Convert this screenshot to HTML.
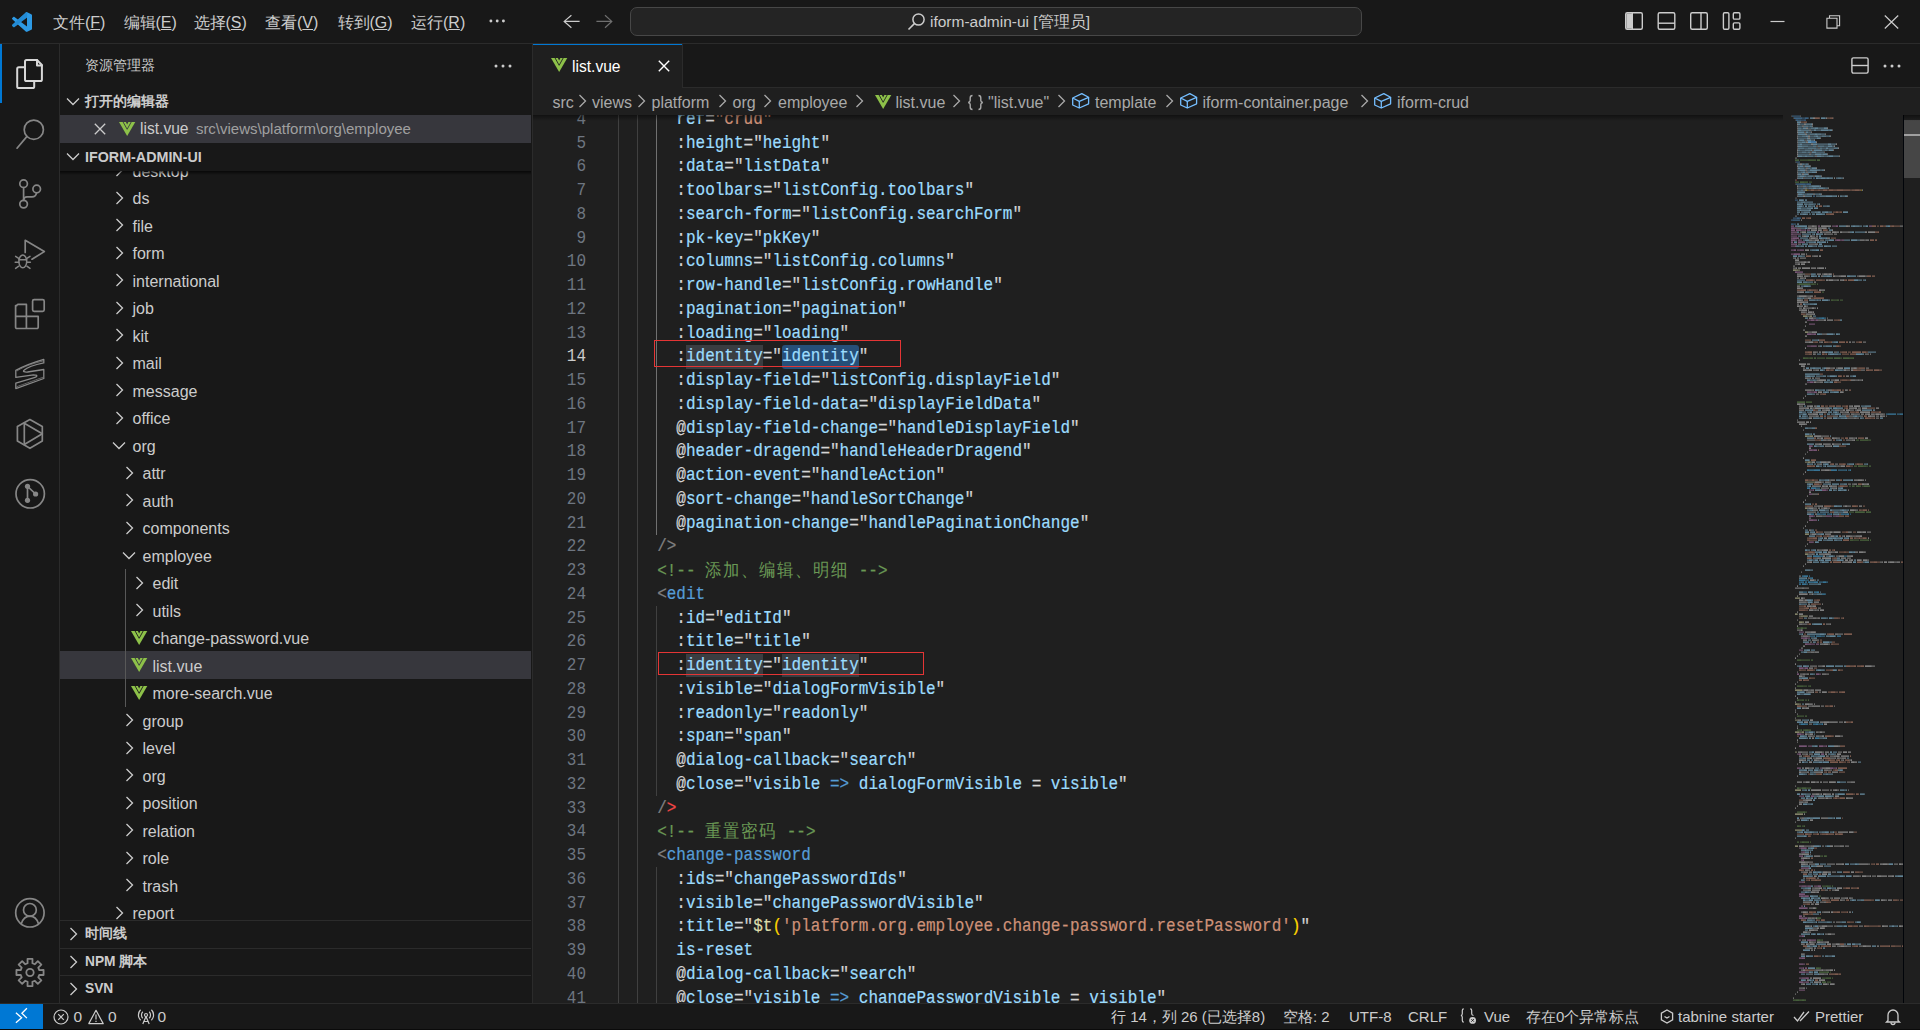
<!DOCTYPE html>
<html><head><meta charset="utf-8">
<style>
*{box-sizing:border-box;margin:0;padding:0}
html,body{width:1920px;height:1030px;overflow:hidden;background:#181818;font-family:"Liberation Sans",sans-serif;color:#cccccc}
.abs{position:absolute}
svg{display:block;overflow:visible}
#title{left:0;top:0;width:1920px;height:44px;background:#181818;border-bottom:1px solid #2b2b2b}
.menu{position:absolute;top:1px;height:43px;line-height:43px;font-size:16px;color:#cccccc;white-space:nowrap}
#cc{left:630px;top:7px;width:732px;height:29px;border:1px solid #474747;border-radius:7px;background:#242424}
#act{left:0;top:44px;width:60px;height:959px;background:#181818;border-right:1px solid #2b2b2b}
#side{left:60px;top:44px;width:473px;height:959px;background:#181818;border-right:1px solid #2b2b2b}
#editor{left:533px;top:44px;width:1387px;height:959px;background:#1f1f1f}
#tabs{left:533px;top:44px;width:1387px;height:44px;background:#181818;border-bottom:1px solid #2b2b2b}
#status{left:0;top:1003px;width:1920px;height:27px;background:#181818;border-top:1px solid #2b2b2b;font-size:16px;color:#cccccc}
.row{position:absolute;left:0;width:471px;height:27.5px;line-height:27.5px;font-size:16px;color:#cccccc;white-space:nowrap}
.chev{position:absolute;top:0}
.code{position:absolute;left:0;font-family:"Liberation Mono",monospace;font-size:16px;white-space:pre;height:23.75px;line-height:23.75px;color:#d4d4d4;margin-top:1.5px;transform:scaleY(1.1);transform-origin:0 16px;-webkit-text-stroke:0.2px}
.ln{position:absolute;left:532px;width:54px;text-align:right;font-family:"Liberation Mono",monospace;font-size:16px;height:23.75px;line-height:23.75px;color:#6e7681;margin-top:1.5px;transform:scaleY(1.1);transform-origin:0 16px}
.g{color:#808080}.t{color:#569cd6}.a{color:#9cdcfe}.s{color:#ce9178}.c{color:#6a9955}.f{color:#dcdcaa}.y{color:#ffd700}.r{color:#f44747}.w{color:#d4d4d4}.cjk{font-size:16.5px;letter-spacing:1px;-webkit-text-stroke:0}
</style></head><body>

<!-- TITLE BAR -->
<div id="title" class="abs"></div>
<svg class="abs" style="left:12px;top:12px" width="20" height="20" viewBox="0 0 100 100"><path fill-rule="evenodd" fill="#2d9ae5" d="M70.9 99.3C72.5 99.9 74.3 99.9 75.9 99.1L96.5 89.2C98.6 88.2 100 86 100 83.6V16.4C100 14 98.6 11.8 96.5 10.8L75.9 0.9C73.8-0.1 71.3 0.1 69.5 1.4C69.3 1.6 69 1.8 68.8 2.1L29.4 38L12.2 25C10.6 23.8 8.4 23.9 6.9 25.2L1.4 30.3C-0.5 31.9-0.5 34.8 1.4 36.4L16.2 50L1.4 63.6C-0.5 65.2-0.5 68.1 1.4 69.7L6.9 74.8C8.4 76.1 10.6 76.2 12.2 75L29.4 62L68.8 97.9C69.4 98.5 70.1 99 70.9 99.3ZM75 27.3L45.1 50L75 72.7V27.3Z"/><path fill="#1b7fc9" opacity="0.55" d="M75 27.3L29.4 62L12.2 75C10.6 76.2 8.4 76.1 6.9 74.8L1.4 69.7C-0.5 68.1-0.5 65.2 1.4 63.6L68.8 2.1C69 1.8 69.3 1.6 69.5 1.4C71.3 0.1 73.8-0.1 75.9 0.9L75 27.3Z"/></svg>
<div class="menu" style="left:53px">文件(<u>F</u>)</div>
<div class="menu" style="left:123.5px">编辑(<u>E</u>)</div>
<div class="menu" style="left:193.5px">选择(<u>S</u>)</div>
<div class="menu" style="left:265px">查看(<u>V</u>)</div>
<div class="menu" style="left:337.5px">转到(<u>G</u>)</div>
<div class="menu" style="left:411px">运行(<u>R</u>)</div>
<svg class="abs" style="left:488px;top:19px" width="18" height="4"><circle cx="2.9" cy="2" r="1.45" fill="#cccccc"/><circle cx="9.2" cy="2" r="1.45" fill="#cccccc"/><circle cx="15.4" cy="2" r="1.45" fill="#cccccc"/></svg>
<svg class="abs" style="left:562px;top:13px" width="20" height="18" viewBox="0 0 20 18"><path d="M17.6 8.4H2.2M9.4 2.2L2.2 8.4L9.4 14.7" stroke="#cccccc" stroke-width="1.2" fill="none"/></svg>
<svg class="abs" style="left:595px;top:13px" width="20" height="18" viewBox="0 0 20 18"><path d="M1.4 8.4H16.8M10 2.2L16.8 8.4L10 14.7" stroke="#6f6f6f" stroke-width="1.2" fill="none"/></svg>
<div id="cc" class="abs"></div>
<svg class="abs" style="left:907px;top:12px" width="19" height="19" viewBox="0 0 19 19"><circle cx="11.5" cy="7.5" r="5.6" stroke="#cccccc" stroke-width="1.5" fill="none"/><path d="M7.6 11.4L1.5 17.5" stroke="#cccccc" stroke-width="1.6"/></svg>
<div class="menu" style="left:930px;top:0.5px;height:42px;line-height:42px;font-size:15.5px">iform-admin-ui [管理员]</div>

<svg class="abs" style="left:1620px;top:8px" width="290" height="28" viewBox="1620 8 290 28" fill="none" stroke="#cccccc" stroke-width="1.4">
<rect x="1625.7" y="12.7" width="16.6" height="16.6" rx="1.5"/><rect x="1626.4" y="13.4" width="6" height="15.2" fill="#cccccc" stroke="none"/><path d="M1632.3 12.7V29.3"/>
<rect x="1658.2" y="12.7" width="16.6" height="16.6" rx="1.5"/><path d="M1658.2 23.2H1674.8"/>
<rect x="1690.7" y="12.7" width="16.6" height="16.6" rx="1.5"/><path d="M1701 12.7V29.3"/>
<rect x="1723.4" y="12.7" width="5.5" height="16.6" rx="1.2"/><rect x="1733.3" y="12.7" width="6.6" height="6.4" rx="1.2"/><rect x="1733.3" y="22.9" width="6.6" height="6.4" rx="1.2"/>
<path d="M1770.5 21.5H1784.5" stroke-width="1.2"/>
<path d="M1826.9 18.2H1837V28.1H1826.9Z M1829.5 18.2V15.8H1839.6V25.7H1837" stroke-width="1.1"/>
<path d="M1884.8 15.5L1898.2 28.5M1898.2 15.5L1884.8 28.5" stroke-width="1.2"/>
</svg>
<!-- ACTIVITY BAR -->
<div id="act" class="abs"></div>
<div class="abs" style="left:0;top:44px;width:2px;height:59px;background:#0078d4"></div>
<svg class="abs" style="left:0;top:0" width="60" height="1003" viewBox="0 0 60 1003" fill="none" stroke-linecap="round" stroke-linejoin="round">
<g stroke="#d7d7d7" stroke-width="2">
<path d="M26.6 60H37L41.9 65V79.4A1.6 1.6 0 0 1 40.3 81H26.6A1.6 1.6 0 0 1 25 79.4V61.6A1.6 1.6 0 0 1 26.6 60Z"/>
<path d="M37 60V65.5H41.9"/>
<path d="M25 67.2H18.8A1.6 1.6 0 0 0 17.2 68.8V86.4A1.6 1.6 0 0 0 18.8 88H32.6A1.6 1.6 0 0 0 34.2 86.4V81"/>
</g>
<g stroke="#868686" stroke-width="1.7">
<circle cx="33.8" cy="129.7" r="9.6"/>
<path d="M27 136.4L17 148.2"/>
<circle cx="23.6" cy="183.7" r="3.8"/><circle cx="36.7" cy="189" r="3.8"/><circle cx="23.6" cy="204.1" r="3.8"/>
<path d="M23.6 187.5V200.3"/><path d="M36.5 192.8C36 196 34.5 196.8 32 196.8H27C25 196.8 23.8 198 23.6 200"/>
<path d="M25.2 252.5V240.3L44.3 251.6L32 259.2"/>
<ellipse cx="22.8" cy="261.4" rx="3.9" ry="6.4" stroke-width="1.5"/>
<path stroke-width="1.5" d="M18.9 259.7H26.7M15.6 256.3L18.7 258.3M30 256.3L26.9 258.3M15.2 262.3H18.8M26.8 262.3H30.4M15.6 268.4L18.7 266.2M30 268.4L26.9 266.2"/>
<path d="M16.8 305.6A1.2 1.2 0 0 1 18 304.4H26.4V316.4H38.2V327.3A1.2 1.2 0 0 1 37 328.5H16.8A1.2 1.2 0 0 1 15.6 327.3V305.6ZM15.6 316.4H26.4V328.5"/>
<rect x="32.6" y="299.7" width="11.6" height="11.6" rx="1.5"/>
</g>
<g stroke="#8a8a8a" stroke-width="1.3">
<path d="M43.8 359.4V362.9C36 364.5 27 367.5 24 370.3C22.5 371.6 24.5 372.2 27.5 372L43.8 369.5V378.5L15.8 388.6V383.1L33.5 377.8C37.5 376.8 38.5 375 33.5 374.8L15.8 377.3V370.3C24 366 32 362.8 43.8 359.4Z"/>
<path stroke-width="0.7" stroke-dasharray="1.2 0.8" d="M42.6 361.1C33 363.5 24 366.5 17 371M17 386.6L42.6 377.4"/>
</g>
<g stroke="#868686" stroke-width="1.7">
<path d="M29.9 419.5L42.3 426.6V441.1L29.9 448.3L17.4 441.1V426.6Z"/>
<path d="M24.3 423.2V444.6M24.3 423.2L42.3 433.8L24.3 444.6"/>
<circle cx="30.2" cy="493.8" r="14.2"/>
<path d="M27.5 486.3V500.3M27.5 486.3L35.6 494"/>
</g>
<g fill="#868686"><circle cx="27.5" cy="486.3" r="2.6"/><circle cx="35.6" cy="494" r="2.6"/><circle cx="27.5" cy="500.3" r="2.6"/></g>
<g stroke="#868686" stroke-width="1.7">
<circle cx="29.9" cy="912.8" r="14.2"/>
<circle cx="29.9" cy="909.9" r="6.4"/>
<path d="M21.4 923.6C23 918.6 26.2 916.2 29.9 916.2S36.8 918.6 38.4 923.6"/>
<path stroke-width="1.8" d="M27.60 963.21L27.49 958.93L32.51 958.93L32.40 963.21L34.87 964.23L37.82 961.13L41.37 964.68L38.27 967.63L39.29 970.10L43.57 969.99L43.57 975.01L39.29 974.90L38.27 977.37L41.37 980.32L37.82 983.87L34.87 980.77L32.40 981.79L32.51 986.07L27.49 986.07L27.60 981.79L25.13 980.77L22.18 983.87L18.63 980.32L21.73 977.37L20.71 974.90L16.43 975.01L16.43 969.99L20.71 970.10L21.73 967.63L18.63 964.68L22.18 961.13L25.13 964.23Z"/>
<circle cx="30" cy="972.5" r="3.7" stroke-width="1.8"/>
</g>
</svg>

<!-- SIDEBAR -->
<div id="side" class="abs"></div>
<div class="abs" style="left:85px;top:44px;height:44px;line-height:44px;font-size:13.75px;color:#cccccc">资源管理器</div>
<svg class="abs" style="left:494px;top:64px" width="18" height="4"><circle cx="2" cy="2" r="1.5" fill="#cccccc"/><circle cx="9" cy="2" r="1.5" fill="#cccccc"/><circle cx="16" cy="2" r="1.5" fill="#cccccc"/></svg>
<svg class="abs" style="left:65.5px;top:96.5px" width="14" height="9" viewBox="0 0 14 9"><path d="M1 1.5L7 7.5L13 1.5" stroke="#cccccc" stroke-width="1.3" fill="none"/></svg>
<div class="abs" style="left:85px;top:88px;height:27.5px;line-height:27.5px;font-size:13.75px;font-weight:bold;color:#cccccc">打开的编辑器</div>
<div class="abs" style="left:60px;top:115.25px;width:471px;height:27.5px;background:#37373d"></div>
<svg class="abs" style="left:94px;top:123px" width="12" height="12" viewBox="0 0 12 12"><path d="M0.8 0.8L11.2 11.2M11.2 0.8L0.8 11.2" stroke="#cccccc" stroke-width="1.3"/></svg>
<svg class="abs" style="left:119px;top:121.5px" width="16.3" height="14" viewBox="0 0 16.3 14"><path d="M0 0H16.3L8.15 14Z" fill="#8dc149"/><path d="M4.1 0L8.15 7.3L12.2 0" stroke="#37373d" stroke-width="0.9" fill="none"/><path d="M6.9 0H9.4L8.15 2.4Z" fill="#37373d"/></svg>
<div class="abs" style="left:140px;top:115.25px;height:27.5px;line-height:27.5px;font-size:15.6px;color:#cccccc;white-space:nowrap">list.vue <span style="font-size:15px;color:#a0a0a0;margin-left:3px">src\views\platform\org\employee</span></div>
<div class="abs" style="left:60px;top:171px;width:471px;height:749px;overflow:hidden">
<svg class="abs" style="left:54.5px;top:-8.0px" width="9" height="14" viewBox="0 0 9 14"><path d="M1.5 1L7.5 7L1.5 13" stroke="#cccccc" stroke-width="1.3" fill="none"/></svg>
<div class="abs" style="left:72.5px;top:-14.75px;height:27.5px;line-height:27.5px;font-size:16px;color:#cccccc;white-space:nowrap;margin-top:1.3px">desktop</div>
<svg class="abs" style="left:54.5px;top:19.5px" width="9" height="14" viewBox="0 0 9 14"><path d="M1.5 1L7.5 7L1.5 13" stroke="#cccccc" stroke-width="1.3" fill="none"/></svg>
<div class="abs" style="left:72.5px;top:12.75px;height:27.5px;line-height:27.5px;font-size:16px;color:#cccccc;white-space:nowrap;margin-top:1.3px">ds</div>
<svg class="abs" style="left:54.5px;top:47.0px" width="9" height="14" viewBox="0 0 9 14"><path d="M1.5 1L7.5 7L1.5 13" stroke="#cccccc" stroke-width="1.3" fill="none"/></svg>
<div class="abs" style="left:72.5px;top:40.25px;height:27.5px;line-height:27.5px;font-size:16px;color:#cccccc;white-space:nowrap;margin-top:1.3px">file</div>
<svg class="abs" style="left:54.5px;top:74.5px" width="9" height="14" viewBox="0 0 9 14"><path d="M1.5 1L7.5 7L1.5 13" stroke="#cccccc" stroke-width="1.3" fill="none"/></svg>
<div class="abs" style="left:72.5px;top:67.75px;height:27.5px;line-height:27.5px;font-size:16px;color:#cccccc;white-space:nowrap;margin-top:1.3px">form</div>
<svg class="abs" style="left:54.5px;top:102.0px" width="9" height="14" viewBox="0 0 9 14"><path d="M1.5 1L7.5 7L1.5 13" stroke="#cccccc" stroke-width="1.3" fill="none"/></svg>
<div class="abs" style="left:72.5px;top:95.25px;height:27.5px;line-height:27.5px;font-size:16px;color:#cccccc;white-space:nowrap;margin-top:1.3px">international</div>
<svg class="abs" style="left:54.5px;top:129.5px" width="9" height="14" viewBox="0 0 9 14"><path d="M1.5 1L7.5 7L1.5 13" stroke="#cccccc" stroke-width="1.3" fill="none"/></svg>
<div class="abs" style="left:72.5px;top:122.75px;height:27.5px;line-height:27.5px;font-size:16px;color:#cccccc;white-space:nowrap;margin-top:1.3px">job</div>
<svg class="abs" style="left:54.5px;top:157.0px" width="9" height="14" viewBox="0 0 9 14"><path d="M1.5 1L7.5 7L1.5 13" stroke="#cccccc" stroke-width="1.3" fill="none"/></svg>
<div class="abs" style="left:72.5px;top:150.25px;height:27.5px;line-height:27.5px;font-size:16px;color:#cccccc;white-space:nowrap;margin-top:1.3px">kit</div>
<svg class="abs" style="left:54.5px;top:184.5px" width="9" height="14" viewBox="0 0 9 14"><path d="M1.5 1L7.5 7L1.5 13" stroke="#cccccc" stroke-width="1.3" fill="none"/></svg>
<div class="abs" style="left:72.5px;top:177.75px;height:27.5px;line-height:27.5px;font-size:16px;color:#cccccc;white-space:nowrap;margin-top:1.3px">mail</div>
<svg class="abs" style="left:54.5px;top:212.0px" width="9" height="14" viewBox="0 0 9 14"><path d="M1.5 1L7.5 7L1.5 13" stroke="#cccccc" stroke-width="1.3" fill="none"/></svg>
<div class="abs" style="left:72.5px;top:205.25px;height:27.5px;line-height:27.5px;font-size:16px;color:#cccccc;white-space:nowrap;margin-top:1.3px">message</div>
<svg class="abs" style="left:54.5px;top:239.5px" width="9" height="14" viewBox="0 0 9 14"><path d="M1.5 1L7.5 7L1.5 13" stroke="#cccccc" stroke-width="1.3" fill="none"/></svg>
<div class="abs" style="left:72.5px;top:232.75px;height:27.5px;line-height:27.5px;font-size:16px;color:#cccccc;white-space:nowrap;margin-top:1.3px">office</div>
<svg class="abs" style="left:51.5px;top:270.0px" width="14" height="9" viewBox="0 0 14 9"><path d="M1 1.5L7 7.5L13 1.5" stroke="#cccccc" stroke-width="1.3" fill="none"/></svg>
<div class="abs" style="left:72.5px;top:260.25px;height:27.5px;line-height:27.5px;font-size:16px;color:#cccccc;white-space:nowrap;margin-top:1.3px">org</div>
<svg class="abs" style="left:64.5px;top:294.5px" width="9" height="14" viewBox="0 0 9 14"><path d="M1.5 1L7.5 7L1.5 13" stroke="#cccccc" stroke-width="1.3" fill="none"/></svg>
<div class="abs" style="left:82.5px;top:287.75px;height:27.5px;line-height:27.5px;font-size:16px;color:#cccccc;white-space:nowrap;margin-top:1.3px">attr</div>
<svg class="abs" style="left:64.5px;top:322.0px" width="9" height="14" viewBox="0 0 9 14"><path d="M1.5 1L7.5 7L1.5 13" stroke="#cccccc" stroke-width="1.3" fill="none"/></svg>
<div class="abs" style="left:82.5px;top:315.25px;height:27.5px;line-height:27.5px;font-size:16px;color:#cccccc;white-space:nowrap;margin-top:1.3px">auth</div>
<svg class="abs" style="left:64.5px;top:349.5px" width="9" height="14" viewBox="0 0 9 14"><path d="M1.5 1L7.5 7L1.5 13" stroke="#cccccc" stroke-width="1.3" fill="none"/></svg>
<div class="abs" style="left:82.5px;top:342.75px;height:27.5px;line-height:27.5px;font-size:16px;color:#cccccc;white-space:nowrap;margin-top:1.3px">components</div>
<svg class="abs" style="left:61.5px;top:380.0px" width="14" height="9" viewBox="0 0 14 9"><path d="M1 1.5L7 7.5L13 1.5" stroke="#cccccc" stroke-width="1.3" fill="none"/></svg>
<div class="abs" style="left:82.5px;top:370.25px;height:27.5px;line-height:27.5px;font-size:16px;color:#cccccc;white-space:nowrap;margin-top:1.3px">employee</div>
<svg class="abs" style="left:74.5px;top:404.5px" width="9" height="14" viewBox="0 0 9 14"><path d="M1.5 1L7.5 7L1.5 13" stroke="#cccccc" stroke-width="1.3" fill="none"/></svg>
<div class="abs" style="left:92.5px;top:397.75px;height:27.5px;line-height:27.5px;font-size:16px;color:#cccccc;white-space:nowrap;margin-top:1.3px">edit</div>
<svg class="abs" style="left:74.5px;top:432.0px" width="9" height="14" viewBox="0 0 9 14"><path d="M1.5 1L7.5 7L1.5 13" stroke="#cccccc" stroke-width="1.3" fill="none"/></svg>
<div class="abs" style="left:92.5px;top:425.25px;height:27.5px;line-height:27.5px;font-size:16px;color:#cccccc;white-space:nowrap;margin-top:1.3px">utils</div>
<svg class="abs" style="left:70.5px;top:459.5px" width="16.3" height="14" viewBox="0 0 16.3 14"><path d="M0 0H16.3L8.15 14Z" fill="#8dc149"/><path d="M4.1 0L8.15 7.3L12.2 0" stroke="#181818" stroke-width="0.9" fill="none"/><path d="M6.9 0H9.4L8.15 2.4Z" fill="#181818"/></svg>
<div class="abs" style="left:92.5px;top:452.75px;height:27.5px;line-height:27.5px;font-size:16px;color:#cccccc;white-space:nowrap;margin-top:1.3px">change-password.vue</div>
<div class="abs" style="left:0;top:480.25px;width:471px;height:27.5px;background:#37373d"></div>
<svg class="abs" style="left:70.5px;top:487.0px" width="16.3" height="14" viewBox="0 0 16.3 14"><path d="M0 0H16.3L8.15 14Z" fill="#8dc149"/><path d="M4.1 0L8.15 7.3L12.2 0" stroke="#37373d" stroke-width="0.9" fill="none"/><path d="M6.9 0H9.4L8.15 2.4Z" fill="#37373d"/></svg>
<div class="abs" style="left:92.5px;top:480.25px;height:27.5px;line-height:27.5px;font-size:16px;color:#cccccc;white-space:nowrap;margin-top:1.3px">list.vue</div>
<svg class="abs" style="left:70.5px;top:514.5px" width="16.3" height="14" viewBox="0 0 16.3 14"><path d="M0 0H16.3L8.15 14Z" fill="#8dc149"/><path d="M4.1 0L8.15 7.3L12.2 0" stroke="#181818" stroke-width="0.9" fill="none"/><path d="M6.9 0H9.4L8.15 2.4Z" fill="#181818"/></svg>
<div class="abs" style="left:92.5px;top:507.75px;height:27.5px;line-height:27.5px;font-size:16px;color:#cccccc;white-space:nowrap;margin-top:1.3px">more-search.vue</div>
<svg class="abs" style="left:64.5px;top:542.0px" width="9" height="14" viewBox="0 0 9 14"><path d="M1.5 1L7.5 7L1.5 13" stroke="#cccccc" stroke-width="1.3" fill="none"/></svg>
<div class="abs" style="left:82.5px;top:535.25px;height:27.5px;line-height:27.5px;font-size:16px;color:#cccccc;white-space:nowrap;margin-top:1.3px">group</div>
<svg class="abs" style="left:64.5px;top:569.5px" width="9" height="14" viewBox="0 0 9 14"><path d="M1.5 1L7.5 7L1.5 13" stroke="#cccccc" stroke-width="1.3" fill="none"/></svg>
<div class="abs" style="left:82.5px;top:562.75px;height:27.5px;line-height:27.5px;font-size:16px;color:#cccccc;white-space:nowrap;margin-top:1.3px">level</div>
<svg class="abs" style="left:64.5px;top:597.0px" width="9" height="14" viewBox="0 0 9 14"><path d="M1.5 1L7.5 7L1.5 13" stroke="#cccccc" stroke-width="1.3" fill="none"/></svg>
<div class="abs" style="left:82.5px;top:590.25px;height:27.5px;line-height:27.5px;font-size:16px;color:#cccccc;white-space:nowrap;margin-top:1.3px">org</div>
<svg class="abs" style="left:64.5px;top:624.5px" width="9" height="14" viewBox="0 0 9 14"><path d="M1.5 1L7.5 7L1.5 13" stroke="#cccccc" stroke-width="1.3" fill="none"/></svg>
<div class="abs" style="left:82.5px;top:617.75px;height:27.5px;line-height:27.5px;font-size:16px;color:#cccccc;white-space:nowrap;margin-top:1.3px">position</div>
<svg class="abs" style="left:64.5px;top:652.0px" width="9" height="14" viewBox="0 0 9 14"><path d="M1.5 1L7.5 7L1.5 13" stroke="#cccccc" stroke-width="1.3" fill="none"/></svg>
<div class="abs" style="left:82.5px;top:645.25px;height:27.5px;line-height:27.5px;font-size:16px;color:#cccccc;white-space:nowrap;margin-top:1.3px">relation</div>
<svg class="abs" style="left:64.5px;top:679.5px" width="9" height="14" viewBox="0 0 9 14"><path d="M1.5 1L7.5 7L1.5 13" stroke="#cccccc" stroke-width="1.3" fill="none"/></svg>
<div class="abs" style="left:82.5px;top:672.75px;height:27.5px;line-height:27.5px;font-size:16px;color:#cccccc;white-space:nowrap;margin-top:1.3px">role</div>
<svg class="abs" style="left:64.5px;top:707.0px" width="9" height="14" viewBox="0 0 9 14"><path d="M1.5 1L7.5 7L1.5 13" stroke="#cccccc" stroke-width="1.3" fill="none"/></svg>
<div class="abs" style="left:82.5px;top:700.25px;height:27.5px;line-height:27.5px;font-size:16px;color:#cccccc;white-space:nowrap;margin-top:1.3px">trash</div>
<svg class="abs" style="left:54.5px;top:734.5px" width="9" height="14" viewBox="0 0 9 14"><path d="M1.5 1L7.5 7L1.5 13" stroke="#cccccc" stroke-width="1.3" fill="none"/></svg>
<div class="abs" style="left:72.5px;top:727.75px;height:27.5px;line-height:27.5px;font-size:16px;color:#cccccc;white-space:nowrap;margin-top:1.3px">report</div>
<div class="abs" style="left:65px;top:398px;width:1px;height:138px;background:#585858"></div>
</div>
<div class="abs" style="left:60px;top:171px;width:471px;height:4px;background:linear-gradient(#000000aa,#00000000)"></div>
<div class="abs" style="left:60px;top:143.5px;width:471px;height:27.5px;background:#181818"></div>
<svg class="abs" style="left:65.5px;top:152px" width="14" height="9" viewBox="0 0 14 9"><path d="M1 1.5L7 7.5L13 1.5" stroke="#cccccc" stroke-width="1.3" fill="none"/></svg>
<div class="abs" style="left:85px;top:143.5px;height:27.5px;line-height:27.5px;font-size:14.3px;font-weight:bold;color:#cccccc">IFORM-ADMIN-UI</div>
<div class="abs" style="left:60px;top:920px;width:471px;height:28px;border-top:1px solid #2b2b2b;background:#181818"></div>
<svg class="abs" style="left:69px;top:927px" width="9" height="14" viewBox="0 0 9 14"><path d="M1.5 1L7.5 7L1.5 13" stroke="#cccccc" stroke-width="1.3" fill="none"/></svg>
<div class="abs" style="left:85px;top:920px;height:28px;line-height:28px;font-size:13.75px;font-weight:bold;color:#cccccc">时间线</div>
<div class="abs" style="left:60px;top:947.5px;width:471px;height:28px;border-top:1px solid #2b2b2b;background:#181818"></div>
<svg class="abs" style="left:69px;top:954.5px" width="9" height="14" viewBox="0 0 9 14"><path d="M1.5 1L7.5 7L1.5 13" stroke="#cccccc" stroke-width="1.3" fill="none"/></svg>
<div class="abs" style="left:85px;top:947.5px;height:28px;line-height:28px;font-size:13.75px;font-weight:bold;color:#cccccc">NPM 脚本</div>
<div class="abs" style="left:60px;top:975px;width:471px;height:28px;border-top:1px solid #2b2b2b;background:#181818"></div>
<svg class="abs" style="left:69px;top:982px" width="9" height="14" viewBox="0 0 9 14"><path d="M1.5 1L7.5 7L1.5 13" stroke="#cccccc" stroke-width="1.3" fill="none"/></svg>
<div class="abs" style="left:85px;top:975px;height:28px;line-height:28px;font-size:13.75px;font-weight:bold;color:#cccccc">SVN</div>

<!-- EDITOR -->
<div id="editor" class="abs"></div>
<div class="abs" style="left:532px;top:115px;width:1388px;height:888px;overflow:hidden;clip-path:inset(0 0 0 1px)">
<div class="abs" style="left:153.95000000000005px;top:229.89999999999998px;width:76.79999999999995px;height:23.75px;background:#3a3d41;border-radius:0px"></div>
<div class="abs" style="left:249.95000000000005px;top:229.89999999999998px;width:76.79999999999995px;height:23.75px;background:#264f78;border-radius:3px"></div>
<div class="abs" style="left:153.95000000000005px;top:538.65px;width:76.79999999999995px;height:23.75px;background:#3a3d41;border-radius:0px"></div>
<div class="abs" style="left:249.95000000000005px;top:538.65px;width:76.79999999999995px;height:23.75px;background:#3a3d41;border-radius:0px"></div>
<div class="abs" style="left:86px;top:-78.85px;width:1px;height:973.75px;background:#404040"></div>
<div class="abs" style="left:105px;top:-78.85px;width:1px;height:973.75px;background:#404040"></div>
<div class="abs" style="left:124px;top:-78.85px;width:1px;height:498.75px;background:#707070"></div>
<div class="abs" style="left:124px;top:491.15px;width:1px;height:190.00px;background:#404040"></div>
<div class="abs" style="left:124px;top:752.40px;width:1px;height:142.50px;background:#404040"></div>
<div class="code" style="left:144.35px;top:-7.60px"><span class="a">ref</span><span class="w">=</span><span class="s">&quot;crud&quot;</span></div>
<div class="ln" style="left:0;top:-7.60px;color:#6e7681">4</div>
<div class="code" style="left:144.35px;top:16.15px"><span class="w">:</span><span class="a">height</span><span class="w">=&quot;</span><span class="a">height</span><span class="w">&quot;</span></div>
<div class="ln" style="left:0;top:16.15px;color:#6e7681">5</div>
<div class="code" style="left:144.35px;top:39.90px"><span class="w">:</span><span class="a">data</span><span class="w">=&quot;</span><span class="a">listData</span><span class="w">&quot;</span></div>
<div class="ln" style="left:0;top:39.90px;color:#6e7681">6</div>
<div class="code" style="left:144.35px;top:63.65px"><span class="w">:</span><span class="a">toolbars</span><span class="w">=&quot;</span><span class="a">listConfig.toolbars</span><span class="w">&quot;</span></div>
<div class="ln" style="left:0;top:63.65px;color:#6e7681">7</div>
<div class="code" style="left:144.35px;top:87.40px"><span class="w">:</span><span class="a">search-form</span><span class="w">=&quot;</span><span class="a">listConfig.searchForm</span><span class="w">&quot;</span></div>
<div class="ln" style="left:0;top:87.40px;color:#6e7681">8</div>
<div class="code" style="left:144.35px;top:111.15px"><span class="w">:</span><span class="a">pk-key</span><span class="w">=&quot;</span><span class="a">pkKey</span><span class="w">&quot;</span></div>
<div class="ln" style="left:0;top:111.15px;color:#6e7681">9</div>
<div class="code" style="left:144.35px;top:134.90px"><span class="w">:</span><span class="a">columns</span><span class="w">=&quot;</span><span class="a">listConfig.columns</span><span class="w">&quot;</span></div>
<div class="ln" style="left:0;top:134.90px;color:#6e7681">10</div>
<div class="code" style="left:144.35px;top:158.65px"><span class="w">:</span><span class="a">row-handle</span><span class="w">=&quot;</span><span class="a">listConfig.rowHandle</span><span class="w">&quot;</span></div>
<div class="ln" style="left:0;top:158.65px;color:#6e7681">11</div>
<div class="code" style="left:144.35px;top:182.40px"><span class="w">:</span><span class="a">pagination</span><span class="w">=&quot;</span><span class="a">pagination</span><span class="w">&quot;</span></div>
<div class="ln" style="left:0;top:182.40px;color:#6e7681">12</div>
<div class="code" style="left:144.35px;top:206.15px"><span class="w">:</span><span class="a">loading</span><span class="w">=&quot;</span><span class="a">loading</span><span class="w">&quot;</span></div>
<div class="ln" style="left:0;top:206.15px;color:#6e7681">13</div>
<div class="code" style="left:144.35px;top:229.90px"><span class="w">:</span><span class="a">identity</span><span class="w">=&quot;</span><span class="a">identity</span><span class="w">&quot;</span></div>
<div class="ln" style="left:0;top:229.90px;color:#cccccc">14</div>
<div class="code" style="left:144.35px;top:253.65px"><span class="w">:</span><span class="a">display-field</span><span class="w">=&quot;</span><span class="a">listConfig.displayField</span><span class="w">&quot;</span></div>
<div class="ln" style="left:0;top:253.65px;color:#6e7681">15</div>
<div class="code" style="left:144.35px;top:277.40px"><span class="w">:</span><span class="a">display-field-data</span><span class="w">=&quot;</span><span class="a">displayFieldData</span><span class="w">&quot;</span></div>
<div class="ln" style="left:0;top:277.40px;color:#6e7681">16</div>
<div class="code" style="left:144.35px;top:301.15px"><span class="w">@</span><span class="a">display-field-change</span><span class="w">=&quot;</span><span class="a">handleDisplayField</span><span class="w">&quot;</span></div>
<div class="ln" style="left:0;top:301.15px;color:#6e7681">17</div>
<div class="code" style="left:144.35px;top:324.90px"><span class="w">@</span><span class="a">header-dragend</span><span class="w">=&quot;</span><span class="a">handleHeaderDragend</span><span class="w">&quot;</span></div>
<div class="ln" style="left:0;top:324.90px;color:#6e7681">18</div>
<div class="code" style="left:144.35px;top:348.65px"><span class="w">@</span><span class="a">action-event</span><span class="w">=&quot;</span><span class="a">handleAction</span><span class="w">&quot;</span></div>
<div class="ln" style="left:0;top:348.65px;color:#6e7681">19</div>
<div class="code" style="left:144.35px;top:372.40px"><span class="w">@</span><span class="a">sort-change</span><span class="w">=&quot;</span><span class="a">handleSortChange</span><span class="w">&quot;</span></div>
<div class="ln" style="left:0;top:372.40px;color:#6e7681">20</div>
<div class="code" style="left:144.35px;top:396.15px"><span class="w">@</span><span class="a">pagination-change</span><span class="w">=&quot;</span><span class="a">handlePaginationChange</span><span class="w">&quot;</span></div>
<div class="ln" style="left:0;top:396.15px;color:#6e7681">21</div>
<div class="code" style="left:125.15px;top:419.90px"><span class="g">/&gt;</span></div>
<div class="ln" style="left:0;top:419.90px;color:#6e7681">22</div>
<div class="code" style="left:125.15px;top:443.65px"><span class="c">&lt;!-- </span><span class="c cjk">添加、编辑、明细</span><span class="c"> --&gt;</span></div>
<div class="ln" style="left:0;top:443.65px;color:#6e7681">23</div>
<div class="code" style="left:125.15px;top:467.40px"><span class="g">&lt;</span><span class="t">edit</span></div>
<div class="ln" style="left:0;top:467.40px;color:#6e7681">24</div>
<div class="code" style="left:144.35px;top:491.15px"><span class="w">:</span><span class="a">id</span><span class="w">=&quot;</span><span class="a">editId</span><span class="w">&quot;</span></div>
<div class="ln" style="left:0;top:491.15px;color:#6e7681">25</div>
<div class="code" style="left:144.35px;top:514.90px"><span class="w">:</span><span class="a">title</span><span class="w">=&quot;</span><span class="a">title</span><span class="w">&quot;</span></div>
<div class="ln" style="left:0;top:514.90px;color:#6e7681">26</div>
<div class="code" style="left:144.35px;top:538.65px"><span class="w">:</span><span class="a">identity</span><span class="w">=&quot;</span><span class="a">identity</span><span class="w">&quot;</span></div>
<div class="ln" style="left:0;top:538.65px;color:#6e7681">27</div>
<div class="code" style="left:144.35px;top:562.40px"><span class="w">:</span><span class="a">visible</span><span class="w">=&quot;</span><span class="a">dialogFormVisible</span><span class="w">&quot;</span></div>
<div class="ln" style="left:0;top:562.40px;color:#6e7681">28</div>
<div class="code" style="left:144.35px;top:586.15px"><span class="w">:</span><span class="a">readonly</span><span class="w">=&quot;</span><span class="a">readonly</span><span class="w">&quot;</span></div>
<div class="ln" style="left:0;top:586.15px;color:#6e7681">29</div>
<div class="code" style="left:144.35px;top:609.90px"><span class="w">:</span><span class="a">span</span><span class="w">=&quot;</span><span class="a">span</span><span class="w">&quot;</span></div>
<div class="ln" style="left:0;top:609.90px;color:#6e7681">30</div>
<div class="code" style="left:144.35px;top:633.65px"><span class="w">@</span><span class="a">dialog-callback</span><span class="w">=&quot;</span><span class="a">search</span><span class="w">&quot;</span></div>
<div class="ln" style="left:0;top:633.65px;color:#6e7681">31</div>
<div class="code" style="left:144.35px;top:657.40px"><span class="w">@</span><span class="a">close</span><span class="w">=&quot;</span><span class="a">visible</span><span class="w"> </span><span class="t">=&gt;</span><span class="w"> </span><span class="a">dialogFormVisible</span><span class="w"> = </span><span class="a">visible</span><span class="w">&quot;</span></div>
<div class="ln" style="left:0;top:657.40px;color:#6e7681">32</div>
<div class="code" style="left:125.15px;top:681.15px"><span class="g">/</span><span class="r">&gt;</span></div>
<div class="ln" style="left:0;top:681.15px;color:#6e7681">33</div>
<div class="code" style="left:125.15px;top:704.90px"><span class="c">&lt;!-- </span><span class="c cjk">重置密码</span><span class="c"> --&gt;</span></div>
<div class="ln" style="left:0;top:704.90px;color:#6e7681">34</div>
<div class="code" style="left:125.15px;top:728.65px"><span class="g">&lt;</span><span class="t">change-password</span></div>
<div class="ln" style="left:0;top:728.65px;color:#6e7681">35</div>
<div class="code" style="left:144.35px;top:752.40px"><span class="w">:</span><span class="a">ids</span><span class="w">=&quot;</span><span class="a">changePasswordIds</span><span class="w">&quot;</span></div>
<div class="ln" style="left:0;top:752.40px;color:#6e7681">36</div>
<div class="code" style="left:144.35px;top:776.15px"><span class="w">:</span><span class="a">visible</span><span class="w">=&quot;</span><span class="a">changePasswordVisible</span><span class="w">&quot;</span></div>
<div class="ln" style="left:0;top:776.15px;color:#6e7681">37</div>
<div class="code" style="left:144.35px;top:799.90px"><span class="w">:</span><span class="a">title</span><span class="w">=&quot;</span><span class="f">$t</span><span class="y">(</span><span class="s">&#x27;platform.org.employee.change-password.resetPassword&#x27;</span><span class="y">)</span><span class="w">&quot;</span></div>
<div class="ln" style="left:0;top:799.90px;color:#6e7681">38</div>
<div class="code" style="left:144.35px;top:823.65px"><span class="a">is-reset</span></div>
<div class="ln" style="left:0;top:823.65px;color:#6e7681">39</div>
<div class="code" style="left:144.35px;top:847.40px"><span class="w">@</span><span class="a">dialog-callback</span><span class="w">=&quot;</span><span class="a">search</span><span class="w">&quot;</span></div>
<div class="ln" style="left:0;top:847.40px;color:#6e7681">40</div>
<div class="code" style="left:144.35px;top:871.15px"><span class="w">@</span><span class="a">close</span><span class="w">=&quot;</span><span class="a">visible</span><span class="w"> </span><span class="t">=&gt;</span><span class="w"> </span><span class="a">changePasswordVisible</span><span class="w"> = </span><span class="a">visible</span><span class="w">&quot;</span></div>
<div class="ln" style="left:0;top:871.15px;color:#6e7681">41</div>
</div>
<div class="abs" style="left:654px;top:339.5px;width:247px;height:27.5px;border:1.5px solid #e53535"></div>
<div class="abs" style="left:658px;top:652px;width:266px;height:22.5px;border:1.5px solid #e53535"></div>
<div id="tabs" class="abs"></div>
<div class="abs" style="left:533px;top:44px;width:150px;height:44px;background:#1f1f1f;border-right:1px solid #2b2b2b"></div>
<div class="abs" style="left:533px;top:44px;width:149px;height:1px;background:#0078d4"></div>
<svg class="abs" style="left:551px;top:58px" width="16.3" height="14" viewBox="0 0 16.3 14"><path d="M0 0H16.3L8.15 14Z" fill="#8dc149"/><path d="M4.1 0L8.15 7.3L12.2 0" stroke="#1f1f1f" stroke-width="0.9" fill="none"/><path d="M6.9 0H9.4L8.15 2.4Z" fill="#1f1f1f"/></svg>
<div class="abs" style="left:572px;top:45px;height:43px;line-height:43px;font-size:15.6px;color:#ffffff">list.vue</div>
<svg class="abs" style="left:658px;top:60px" width="12" height="12" viewBox="0 0 12 12"><path d="M0.8 0.8L11.2 11.2M11.2 0.8L0.8 11.2" stroke="#ffffff" stroke-width="1.4"/></svg>
<svg class="abs" style="left:1851px;top:57px" width="18" height="17" viewBox="0 0 18 17" fill="none" stroke="#cccccc" stroke-width="1.4"><rect x="0.9" y="0.9" width="16.2" height="15.2" rx="1.5"/><path d="M0.9 8.5H17.1"/></svg>
<svg class="abs" style="left:1883px;top:64px" width="18" height="4"><circle cx="2" cy="2" r="1.5" fill="#cccccc"/><circle cx="9" cy="2" r="1.5" fill="#cccccc"/><circle cx="16" cy="2" r="1.5" fill="#cccccc"/></svg>
<div class="abs" style="left:533px;top:88px;width:1387px;height:27px;background:#1f1f1f"></div>
<div class="abs" style="left:552.5px;top:89px;height:27px;line-height:27px;font-size:16px;color:#a9a9a9;white-space:nowrap">src</div>
<svg class="abs" style="left:578px;top:94px" width="9" height="14" viewBox="0 0 9 14"><path d="M1.5 1L7.5 7L1.5 13" stroke="#a9a9a9" stroke-width="1.3" fill="none"/></svg>
<div class="abs" style="left:592px;top:89px;height:27px;line-height:27px;font-size:16px;color:#a9a9a9;white-space:nowrap">views</div>
<svg class="abs" style="left:637px;top:94px" width="9" height="14" viewBox="0 0 9 14"><path d="M1.5 1L7.5 7L1.5 13" stroke="#a9a9a9" stroke-width="1.3" fill="none"/></svg>
<div class="abs" style="left:651.5px;top:89px;height:27px;line-height:27px;font-size:16px;color:#a9a9a9;white-space:nowrap">platform</div>
<svg class="abs" style="left:718px;top:94px" width="9" height="14" viewBox="0 0 9 14"><path d="M1.5 1L7.5 7L1.5 13" stroke="#a9a9a9" stroke-width="1.3" fill="none"/></svg>
<div class="abs" style="left:732.5px;top:89px;height:27px;line-height:27px;font-size:16px;color:#a9a9a9;white-space:nowrap">org</div>
<svg class="abs" style="left:763px;top:94px" width="9" height="14" viewBox="0 0 9 14"><path d="M1.5 1L7.5 7L1.5 13" stroke="#a9a9a9" stroke-width="1.3" fill="none"/></svg>
<div class="abs" style="left:778px;top:89px;height:27px;line-height:27px;font-size:16px;color:#a9a9a9;white-space:nowrap">employee</div>
<svg class="abs" style="left:855px;top:94px" width="9" height="14" viewBox="0 0 9 14"><path d="M1.5 1L7.5 7L1.5 13" stroke="#a9a9a9" stroke-width="1.3" fill="none"/></svg>
<svg class="abs" style="left:875px;top:95px" width="16.3" height="14" viewBox="0 0 16.3 14"><path d="M0 0H16.3L8.15 14Z" fill="#8dc149"/><path d="M4.1 0L8.15 7.3L12.2 0" stroke="#1f1f1f" stroke-width="0.9" fill="none"/><path d="M6.9 0H9.4L8.15 2.4Z" fill="#1f1f1f"/></svg>
<div class="abs" style="left:895.5px;top:89px;height:27px;line-height:27px;font-size:16px;color:#a9a9a9;white-space:nowrap">list.vue</div>
<svg class="abs" style="left:952px;top:94px" width="9" height="14" viewBox="0 0 9 14"><path d="M1.5 1L7.5 7L1.5 13" stroke="#a9a9a9" stroke-width="1.3" fill="none"/></svg>
<svg class="abs" style="left:966.5px;top:93.5px" width="17" height="17" viewBox="0 0 17 17" fill="none" stroke="#a9a9a9" stroke-width="1.4"><path d="M5.5 1.5C3.5 1.5 3.2 2.5 3.2 4V6.5C3.2 7.5 2.5 8.3 1.2 8.5C2.5 8.7 3.2 9.5 3.2 10.5V13C3.2 14.5 3.5 15.5 5.5 15.5"/><path d="M11.5 1.5C13.5 1.5 13.8 2.5 13.8 4V6.5C13.8 7.5 14.5 8.3 15.8 8.5C14.5 8.7 13.8 9.5 13.8 10.5V13C13.8 14.5 13.5 15.5 11.5 15.5"/></svg>
<div class="abs" style="left:988px;top:89px;height:27px;line-height:27px;font-size:16px;color:#a9a9a9;white-space:nowrap">"list.vue"</div>
<svg class="abs" style="left:1057px;top:94px" width="9" height="14" viewBox="0 0 9 14"><path d="M1.5 1L7.5 7L1.5 13" stroke="#a9a9a9" stroke-width="1.3" fill="none"/></svg>
<svg class="abs" style="left:1072px;top:93px" width="18" height="18" viewBox="0 0 18 18" fill="none" stroke="#75beff" stroke-width="1.3" stroke-linejoin="round"><path d="M9.8 0.6L16.6 4.3L7.3 8.3L0.7 5Z"/><path d="M0.7 5V12L7.3 15L16.6 10.8V4.3M7.3 8.3V15"/></svg>
<div class="abs" style="left:1095px;top:89px;height:27px;line-height:27px;font-size:16px;color:#a9a9a9;white-space:nowrap">template</div>
<svg class="abs" style="left:1165px;top:94px" width="9" height="14" viewBox="0 0 9 14"><path d="M1.5 1L7.5 7L1.5 13" stroke="#a9a9a9" stroke-width="1.3" fill="none"/></svg>
<svg class="abs" style="left:1180px;top:93px" width="18" height="18" viewBox="0 0 18 18" fill="none" stroke="#75beff" stroke-width="1.3" stroke-linejoin="round"><path d="M9.8 0.6L16.6 4.3L7.3 8.3L0.7 5Z"/><path d="M0.7 5V12L7.3 15L16.6 10.8V4.3M7.3 8.3V15"/></svg>
<div class="abs" style="left:1202.5px;top:89px;height:27px;line-height:27px;font-size:16px;color:#a9a9a9;white-space:nowrap">iform-container.page</div>
<svg class="abs" style="left:1360px;top:94px" width="9" height="14" viewBox="0 0 9 14"><path d="M1.5 1L7.5 7L1.5 13" stroke="#a9a9a9" stroke-width="1.3" fill="none"/></svg>
<svg class="abs" style="left:1374px;top:93px" width="18" height="18" viewBox="0 0 18 18" fill="none" stroke="#75beff" stroke-width="1.3" stroke-linejoin="round"><path d="M9.8 0.6L16.6 4.3L7.3 8.3L0.7 5Z"/><path d="M0.7 5V12L7.3 15L16.6 10.8V4.3M7.3 8.3V15"/></svg>
<div class="abs" style="left:1397px;top:89px;height:27px;line-height:27px;font-size:16px;color:#a9a9a9;white-space:nowrap">iform-crud</div>

<!-- MINIMAP -->
<svg class="abs" style="left:1785px;top:115px" width="118" height="888" viewBox="1785 115 118 888">
<rect x="1808" y="140.89999999999998" width="8" height="2" fill="#264f78"/>
<path fill="#808080" fill-opacity="0.45" d="M1791 115.6h1v1.25h-1zM1793 117.6h1v1.25h-1zM1833 117.6h1v1.25h-1zM1795 119.6h1v1.25h-1zM1795 161.6h1v1.25h-1zM1795 183.6h1v1.25h-1zM1795 197.6h2v1.25h-2z"/>
<path fill="#808080" fill-opacity="0.7" d="M1800 115.6h1v1.25h-1zM1795 157.6h2v1.25h-2zM1795 215.6h2v1.25h-2z"/>
<path fill="#808080" fill-opacity="0.58" d="M1795 179.6h1v1.25h-1z"/>
<path fill="#569cd6" fill-opacity="0.45" d="M1792 115.6h4v1.25h-4zM1796 115.6h4v1.25h-4zM1802 117.6h3v1.25h-3zM1808 117.6h1v1.25h-1zM1801 119.6h3v1.25h-3zM1796 161.6h2v1.25h-2zM1798 161.6h2v1.25h-2zM1795 199.6h3v1.25h-3zM1793 217.6h4v1.25h-4zM1791 219.6h2v1.25h-2zM1793 223.6h3v1.25h-3z"/>
<path fill="#569cd6" fill-opacity="0.7" d="M1794 117.6h4v1.25h-4zM1798 117.6h4v1.25h-4zM1805 117.6h3v1.25h-3zM1796 119.6h2v1.25h-2zM1800 183.6h2v1.25h-2zM1802 183.6h3v1.25h-3zM1807 183.6h2v1.25h-2zM1809 183.6h2v1.25h-2zM1797 217.6h2v1.25h-2z"/>
<path fill="#569cd6" fill-opacity="0.58" d="M1798 119.6h3v1.25h-3zM1804 119.6h2v1.25h-2zM1813 177.6h2v1.25h-2zM1796 183.6h4v1.25h-4zM1805 183.6h2v1.25h-2zM1813 195.6h2v1.25h-2zM1799 217.6h2v1.25h-2zM1793 219.6h2v1.25h-2zM1795 219.6h3v1.25h-3zM1798 219.6h2v1.25h-2zM1791 223.6h2v1.25h-2z"/>
<path fill="#9cdcfe" fill-opacity="0.58" d="M1810 117.6h3v1.25h-3zM1806 123.6h2v1.25h-2zM1808 123.6h3v1.25h-3zM1804 125.6h4v1.25h-4zM1810 125.6h2v1.25h-2zM1798 127.6h3v1.25h-3zM1811 127.6h4v1.25h-4zM1801 129.6h4v1.25h-4zM1805 129.6h4v1.25h-4zM1828 129.6h2v1.25h-2zM1810 133.6h3v1.25h-3zM1813 133.6h2v1.25h-2zM1817 133.6h4v1.25h-4zM1802 135.6h4v1.25h-4zM1814 135.6h2v1.25h-2zM1822 135.6h4v1.25h-4zM1829 135.6h1v1.25h-1zM1798 139.6h2v1.25h-2zM1798 141.6h4v1.25h-4zM1805 141.6h1v1.25h-1zM1798 143.6h2v1.25h-2zM1802 145.6h4v1.25h-4zM1806 145.6h2v1.25h-2zM1813 145.6h3v1.25h-3zM1818 145.6h3v1.25h-3zM1821 145.6h3v1.25h-3zM1798 147.6h2v1.25h-2zM1800 147.6h4v1.25h-4zM1808 147.6h4v1.25h-4zM1812 147.6h2v1.25h-2zM1814 147.6h2v1.25h-2zM1820 147.6h2v1.25h-2zM1834 147.6h2v1.25h-2zM1836 147.6h2v1.25h-2zM1798 149.6h2v1.25h-2zM1805 149.6h3v1.25h-3zM1808 149.6h3v1.25h-3zM1825 149.6h2v1.25h-2zM1802 151.6h4v1.25h-4zM1808 151.6h2v1.25h-2zM1821 153.6h2v1.25h-2zM1802 155.6h3v1.25h-3zM1807 155.6h4v1.25h-4zM1811 155.6h2v1.25h-2zM1821 155.6h3v1.25h-3zM1827 155.6h2v1.25h-2zM1798 163.6h2v1.25h-2zM1802 163.6h2v1.25h-2zM1806 163.6h2v1.25h-2zM1798 165.6h2v1.25h-2zM1800 167.6h4v1.25h-4zM1808 167.6h2v1.25h-2zM1798 169.6h2v1.25h-2zM1817 169.6h3v1.25h-3zM1822 169.6h2v1.25h-2zM1801 171.6h2v1.25h-2zM1808 171.6h4v1.25h-4zM1798 175.6h2v1.25h-2zM1804 175.6h2v1.25h-2zM1808 175.6h3v1.25h-3zM1811 175.6h2v1.25h-2zM1819 175.6h2v1.25h-2zM1798 177.6h4v1.25h-4zM1818 177.6h3v1.25h-3zM1825 177.6h2v1.25h-2zM1829 177.6h2v1.25h-2zM1831 177.6h2v1.25h-2zM1838 177.6h3v1.25h-3zM1803 185.6h3v1.25h-3zM1809 185.6h3v1.25h-3zM1819 185.6h1v1.25h-1zM1803 187.6h2v1.25h-2zM1809 187.6h4v1.25h-4zM1816 187.6h3v1.25h-3zM1823 187.6h2v1.25h-2zM1801 189.6h2v1.25h-2zM1802 193.6h2v1.25h-2zM1807 193.6h4v1.25h-4zM1811 193.6h2v1.25h-2zM1819 193.6h2v1.25h-2zM1798 195.6h4v1.25h-4zM1802 195.6h1v1.25h-1zM1805 195.6h3v1.25h-3zM1808 195.6h4v1.25h-4zM1820 195.6h2v1.25h-2zM1822 195.6h4v1.25h-4zM1832 195.6h4v1.25h-4zM1840 195.6h2v1.25h-2zM1803 199.6h1v1.25h-1zM1805 199.6h2v1.25h-2zM1801 201.6h4v1.25h-4zM1804 203.6h3v1.25h-3zM1809 203.6h4v1.25h-4zM1797 205.6h2v1.25h-2zM1808 205.6h3v1.25h-3zM1827 205.6h2v1.25h-2zM1807 207.6h2v1.25h-2zM1809 207.6h2v1.25h-2zM1797 209.6h3v1.25h-3zM1801 209.6h4v1.25h-4zM1805 209.6h4v1.25h-4zM1797 211.6h3v1.25h-3zM1804 211.6h4v1.25h-4zM1808 211.6h2v1.25h-2zM1815 211.6h3v1.25h-3zM1822 211.6h3v1.25h-3zM1800 213.6h3v1.25h-3zM1806 213.6h2v1.25h-2zM1812 213.6h3v1.25h-3zM1822 213.6h3v1.25h-3zM1797 223.6h2v1.25h-2zM1795 225.6h3v1.25h-3zM1839 225.6h2v1.25h-2zM1841 225.6h2v1.25h-2zM1843 225.6h3v1.25h-3zM1851 225.6h2v1.25h-2zM1855 225.6h4v1.25h-4zM1886 225.6h2v1.25h-2zM1829 229.6h2v1.25h-2zM1831 229.6h1v1.25h-1zM1797 231.6h2v1.25h-2zM1807 231.6h3v1.25h-3zM1810 231.6h3v1.25h-3zM1813 231.6h3v1.25h-3zM1850 231.6h2v1.25h-2zM1818 233.6h2v1.25h-2zM1820 233.6h3v1.25h-3zM1822 237.6h4v1.25h-4zM1809 241.6h3v1.25h-3zM1812 241.6h2v1.25h-2zM1820 241.6h2v1.25h-2zM1802 243.6h4v1.25h-4zM1806 243.6h2v1.25h-2zM1796 245.6h3v1.25h-3zM1801 245.6h3v1.25h-3zM1805 245.6h2v1.25h-2zM1812 245.6h1v1.25h-1zM1816 245.6h1v1.25h-1zM1818 245.6h2v1.25h-2zM1820 245.6h2v1.25h-2zM1822 245.6h1v1.25h-1zM1827 245.6h4v1.25h-4zM1812 249.6h4v1.25h-4zM1798 255.6h4v1.25h-4zM1811 273.6h2v1.25h-2zM1813 273.6h2v1.25h-2zM1814 275.6h3v1.25h-3zM1823 275.6h4v1.25h-4zM1830 275.6h2v1.25h-2zM1850 275.6h3v1.25h-3zM1853 275.6h3v1.25h-3zM1865 279.6h1v1.25h-1zM1803 281.6h4v1.25h-4zM1808 285.6h2v1.25h-2zM1805 291.6h4v1.25h-4zM1797 297.6h4v1.25h-4zM1803 297.6h1v1.25h-1zM1809 299.6h3v1.25h-3zM1812 299.6h3v1.25h-3zM1817 299.6h1v1.25h-1zM1820 299.6h1v1.25h-1zM1810 303.6h4v1.25h-4zM1805 317.6h3v1.25h-3zM1840 319.6h2v1.25h-2zM1820 333.6h2v1.25h-2zM1838 333.6h2v1.25h-2zM1834 341.6h2v1.25h-2zM1820 345.6h2v1.25h-2zM1826 345.6h2v1.25h-2zM1828 345.6h4v1.25h-4zM1833 345.6h3v1.25h-3zM1827 351.6h2v1.25h-2zM1828 353.6h2v1.25h-2zM1834 353.6h4v1.25h-4zM1862 353.6h2v1.25h-2zM1810 367.6h3v1.25h-3zM1815 367.6h1v1.25h-1zM1816 367.6h4v1.25h-4zM1820 367.6h1v1.25h-1zM1838 369.6h4v1.25h-4zM1805 373.6h4v1.25h-4zM1809 373.6h2v1.25h-2zM1811 373.6h2v1.25h-2zM1813 373.6h3v1.25h-3zM1816 373.6h3v1.25h-3zM1805 375.6h2v1.25h-2zM1810 375.6h3v1.25h-3zM1813 375.6h2v1.25h-2zM1823 375.6h3v1.25h-3zM1835 375.6h2v1.25h-2zM1813 379.6h2v1.25h-2zM1827 379.6h3v1.25h-3zM1824 381.6h4v1.25h-4zM1817 389.6h2v1.25h-2zM1823 389.6h2v1.25h-2zM1823 391.6h2v1.25h-2zM1827 391.6h2v1.25h-2zM1830 391.6h4v1.25h-4zM1838 391.6h1v1.25h-1zM1807 393.6h3v1.25h-3zM1810 393.6h2v1.25h-2zM1865 405.6h2v1.25h-2zM1867 405.6h3v1.25h-3zM1870 405.6h1v1.25h-1zM1829 407.6h2v1.25h-2zM1831 407.6h1v1.25h-1zM1837 407.6h4v1.25h-4zM1841 407.6h2v1.25h-2zM1805 409.6h4v1.25h-4zM1809 409.6h3v1.25h-3zM1818 409.6h3v1.25h-3zM1862 409.6h4v1.25h-4zM1866 409.6h2v1.25h-2zM1868 409.6h2v1.25h-2zM1870 409.6h2v1.25h-2zM1873 409.6h2v1.25h-2zM1828 411.6h4v1.25h-4zM1833 411.6h2v1.25h-2zM1819 413.6h3v1.25h-3zM1827 413.6h3v1.25h-3zM1838 413.6h3v1.25h-3zM1802 415.6h4v1.25h-4zM1841 415.6h4v1.25h-4zM1853 415.6h2v1.25h-2zM1802 417.6h4v1.25h-4zM1813 417.6h3v1.25h-3zM1816 417.6h3v1.25h-3zM1821 417.6h2v1.25h-2zM1841 417.6h4v1.25h-4zM1860 417.6h2v1.25h-2zM1880 417.6h2v1.25h-2zM1882 417.6h1v1.25h-1zM1805 427.6h3v1.25h-3zM1812 427.6h3v1.25h-3zM1811 433.6h1v1.25h-1zM1813 433.6h2v1.25h-2zM1830 435.6h1v1.25h-1zM1807 437.6h4v1.25h-4zM1811 437.6h3v1.25h-3zM1821 439.6h2v1.25h-2zM1839 439.6h2v1.25h-2zM1841 439.6h1v1.25h-1zM1807 443.6h4v1.25h-4zM1811 443.6h3v1.25h-3zM1844 443.6h3v1.25h-3zM1816 445.6h1v1.25h-1zM1820 445.6h4v1.25h-4zM1807 463.6h2v1.25h-2zM1812 463.6h1v1.25h-1zM1823 463.6h2v1.25h-2zM1849 463.6h4v1.25h-4zM1867 463.6h1v1.25h-1zM1827 465.6h4v1.25h-4zM1831 465.6h4v1.25h-4zM1835 465.6h1v1.25h-1zM1819 479.6h2v1.25h-2zM1825 479.6h3v1.25h-3zM1836 479.6h4v1.25h-4zM1843 479.6h4v1.25h-4zM1847 479.6h4v1.25h-4zM1807 483.6h2v1.25h-2zM1811 483.6h2v1.25h-2zM1828 483.6h3v1.25h-3zM1832 483.6h4v1.25h-4zM1836 483.6h3v1.25h-3zM1844 483.6h3v1.25h-3zM1830 487.6h2v1.25h-2zM1838 487.6h3v1.25h-3zM1833 489.6h2v1.25h-2zM1841 489.6h3v1.25h-3zM1805 503.6h3v1.25h-3zM1808 503.6h2v1.25h-2zM1837 505.6h4v1.25h-4zM1841 505.6h1v1.25h-1zM1810 509.6h2v1.25h-2zM1840 509.6h2v1.25h-2zM1844 509.6h2v1.25h-2zM1848 509.6h1v1.25h-1zM1834 511.6h4v1.25h-4zM1833 513.6h2v1.25h-2zM1835 513.6h3v1.25h-3zM1818 519.6h1v1.25h-1zM1810 531.6h4v1.25h-4zM1818 533.6h3v1.25h-3zM1809 535.6h2v1.25h-2zM1811 535.6h4v1.25h-4zM1820 537.6h2v1.25h-2zM1832 537.6h1v1.25h-1zM1836 537.6h4v1.25h-4zM1844 537.6h4v1.25h-4zM1827 539.6h3v1.25h-3zM1830 539.6h2v1.25h-2zM1832 539.6h1v1.25h-1zM1834 539.6h3v1.25h-3zM1841 539.6h1v1.25h-1zM1818 541.6h1v1.25h-1zM1813 549.6h2v1.25h-2zM1815 551.6h4v1.25h-4zM1852 551.6h2v1.25h-2zM1807 555.6h2v1.25h-2zM1809 555.6h3v1.25h-3zM1837 557.6h3v1.25h-3zM1819 559.6h2v1.25h-2zM1854 559.6h2v1.25h-2zM1813 561.6h4v1.25h-4zM1817 561.6h2v1.25h-2zM1824 561.6h4v1.25h-4zM1805 569.6h2v1.25h-2zM1807 569.6h3v1.25h-3zM1799 577.6h3v1.25h-3zM1802 577.6h4v1.25h-4zM1818 583.6h3v1.25h-3zM1799 591.6h4v1.25h-4zM1811 591.6h2v1.25h-2zM1817 593.6h3v1.25h-3zM1820 593.6h2v1.25h-2zM1811 599.6h2v1.25h-2zM1799 603.6h2v1.25h-2zM1821 617.6h2v1.25h-2zM1823 617.6h3v1.25h-3zM1812 623.6h2v1.25h-2zM1807 633.6h2v1.25h-2zM1809 633.6h2v1.25h-2zM1811 633.6h2v1.25h-2zM1813 633.6h3v1.25h-3zM1816 633.6h4v1.25h-4zM1824 633.6h2v1.25h-2zM1826 635.6h2v1.25h-2zM1828 635.6h2v1.25h-2zM1814 637.6h2v1.25h-2zM1816 637.6h1v1.25h-1zM1803 641.6h3v1.25h-3zM1806 641.6h3v1.25h-3zM1813 641.6h2v1.25h-2zM1804 649.6h3v1.25h-3zM1799 665.6h3v1.25h-3zM1806 665.6h3v1.25h-3zM1835 665.6h4v1.25h-4zM1839 665.6h4v1.25h-4zM1844 665.6h2v1.25h-2zM1816 669.6h2v1.25h-2zM1821 669.6h3v1.25h-3zM1836 669.6h1v1.25h-1zM1810 673.6h3v1.25h-3zM1799 677.6h3v1.25h-3zM1797 691.6h3v1.25h-3zM1808 719.6h1v1.25h-1zM1809 721.6h2v1.25h-2zM1811 721.6h3v1.25h-3zM1814 721.6h3v1.25h-3zM1804 735.6h3v1.25h-3zM1806 737.6h2v1.25h-2zM1823 737.6h3v1.25h-3zM1812 745.6h3v1.25h-3zM1831 753.6h3v1.25h-3zM1811 755.6h3v1.25h-3zM1818 755.6h2v1.25h-2zM1803 757.6h3v1.25h-3zM1807 759.6h3v1.25h-3zM1813 761.6h4v1.25h-4zM1817 761.6h2v1.25h-2zM1799 769.6h3v1.25h-3zM1802 769.6h2v1.25h-2zM1808 769.6h3v1.25h-3zM1811 769.6h2v1.25h-2zM1838 769.6h2v1.25h-2zM1842 769.6h1v1.25h-1zM1803 773.6h2v1.25h-2zM1810 773.6h3v1.25h-3zM1826 773.6h2v1.25h-2zM1805 789.6h2v1.25h-2zM1840 789.6h4v1.25h-4zM1846 789.6h1v1.25h-1zM1803 793.6h3v1.25h-3zM1844 793.6h1v1.25h-1zM1860 793.6h2v1.25h-2zM1862 793.6h2v1.25h-2zM1805 795.6h2v1.25h-2zM1817 795.6h2v1.25h-2zM1831 795.6h2v1.25h-2zM1801 797.6h4v1.25h-4zM1811 803.6h2v1.25h-2zM1804 817.6h3v1.25h-3zM1810 817.6h2v1.25h-2zM1812 817.6h1v1.25h-1zM1828 817.6h4v1.25h-4zM1799 831.6h2v1.25h-2zM1807 831.6h3v1.25h-3zM1812 831.6h2v1.25h-2zM1817 831.6h1v1.25h-1zM1822 831.6h3v1.25h-3zM1828 831.6h1v1.25h-1zM1797 835.6h3v1.25h-3zM1800 835.6h4v1.25h-4zM1819 845.6h2v1.25h-2zM1808 847.6h3v1.25h-3zM1801 849.6h4v1.25h-4zM1806 849.6h3v1.25h-3zM1812 849.6h1v1.25h-1zM1805 851.6h4v1.25h-4zM1810 855.6h3v1.25h-3zM1857 863.6h2v1.25h-2zM1803 865.6h3v1.25h-3zM1806 865.6h3v1.25h-3zM1813 865.6h3v1.25h-3zM1816 871.6h2v1.25h-2zM1837 871.6h4v1.25h-4zM1841 871.6h1v1.25h-1zM1816 873.6h2v1.25h-2zM1808 875.6h4v1.25h-4zM1827 875.6h2v1.25h-2zM1843 875.6h2v1.25h-2zM1895 875.6h3v1.25h-3zM1801 879.6h3v1.25h-3zM1811 885.6h2v1.25h-2zM1805 887.6h3v1.25h-3zM1835 887.6h1v1.25h-1zM1807 891.6h2v1.25h-2zM1813 895.6h2v1.25h-2zM1815 895.6h3v1.25h-3zM1801 897.6h2v1.25h-2zM1805 897.6h4v1.25h-4zM1814 899.6h4v1.25h-4zM1854 899.6h2v1.25h-2zM1861 899.6h3v1.25h-3zM1879 899.6h1v1.25h-1zM1817 911.6h3v1.25h-3zM1852 911.6h1v1.25h-1zM1807 919.6h2v1.25h-2zM1809 919.6h3v1.25h-3zM1806 921.6h2v1.25h-2zM1808 921.6h1v1.25h-1zM1809 921.6h4v1.25h-4zM1827 921.6h3v1.25h-3zM1842 921.6h3v1.25h-3zM1845 921.6h1v1.25h-1zM1860 921.6h1v1.25h-1zM1837 925.6h2v1.25h-2zM1839 925.6h3v1.25h-3zM1897 925.6h1v1.25h-1zM1812 927.6h1v1.25h-1zM1801 933.6h2v1.25h-2zM1803 933.6h2v1.25h-2zM1805 933.6h4v1.25h-4zM1809 933.6h1v1.25h-1zM1811 933.6h2v1.25h-2zM1818 943.6h2v1.25h-2zM1820 943.6h3v1.25h-3zM1823 943.6h3v1.25h-3zM1859 943.6h2v1.25h-2zM1872 945.6h2v1.25h-2zM1874 945.6h2v1.25h-2zM1823 947.6h2v1.25h-2zM1809 955.6h4v1.25h-4zM1825 955.6h3v1.25h-3zM1811 971.6h2v1.25h-2zM1814 973.6h4v1.25h-4zM1805 979.6h1v1.25h-1zM1812 981.6h1v1.25h-1zM1806 983.6h3v1.25h-3zM1809 983.6h2v1.25h-2zM1819 983.6h3v1.25h-3z"/>
<path fill="#9cdcfe" fill-opacity="0.7" d="M1821 117.6h4v1.25h-4zM1797 121.6h3v1.25h-3zM1798 123.6h2v1.25h-2zM1811 123.6h1v1.25h-1zM1803 127.6h3v1.25h-3zM1815 127.6h3v1.25h-3zM1824 127.6h2v1.25h-2zM1826 127.6h1v1.25h-1zM1798 129.6h3v1.25h-3zM1814 129.6h2v1.25h-2zM1821 129.6h2v1.25h-2zM1823 129.6h2v1.25h-2zM1825 129.6h3v1.25h-3zM1830 129.6h2v1.25h-2zM1798 131.6h3v1.25h-3zM1801 131.6h3v1.25h-3zM1806 131.6h2v1.25h-2zM1798 133.6h4v1.25h-4zM1802 133.6h3v1.25h-3zM1815 133.6h2v1.25h-2zM1806 135.6h2v1.25h-2zM1816 135.6h2v1.25h-2zM1807 137.6h1v1.25h-1zM1817 137.6h2v1.25h-2zM1819 137.6h1v1.25h-1zM1800 139.6h4v1.25h-4zM1807 139.6h4v1.25h-4zM1802 141.6h3v1.25h-3zM1808 141.6h3v1.25h-3zM1800 143.6h2v1.25h-2zM1813 143.6h4v1.25h-4zM1828 143.6h3v1.25h-3zM1798 145.6h4v1.25h-4zM1828 145.6h4v1.25h-4zM1826 147.6h2v1.25h-2zM1811 149.6h1v1.25h-1zM1814 149.6h4v1.25h-4zM1818 149.6h4v1.25h-4zM1829 149.6h4v1.25h-4zM1812 151.6h4v1.25h-4zM1815 153.6h4v1.25h-4zM1819 153.6h2v1.25h-2zM1823 153.6h4v1.25h-4zM1798 155.6h4v1.25h-4zM1805 155.6h2v1.25h-2zM1817 155.6h4v1.25h-4zM1829 155.6h4v1.25h-4zM1800 165.6h3v1.25h-3zM1805 165.6h3v1.25h-3zM1808 165.6h2v1.25h-2zM1798 167.6h2v1.25h-2zM1812 167.6h4v1.25h-4zM1800 169.6h3v1.25h-3zM1803 169.6h2v1.25h-2zM1810 169.6h4v1.25h-4zM1814 169.6h3v1.25h-3zM1803 171.6h2v1.25h-2zM1812 171.6h4v1.25h-4zM1798 173.6h3v1.25h-3zM1804 173.6h2v1.25h-2zM1806 173.6h2v1.25h-2zM1800 175.6h4v1.25h-4zM1815 175.6h2v1.25h-2zM1817 175.6h2v1.25h-2zM1802 177.6h1v1.25h-1zM1816 177.6h2v1.25h-2zM1821 177.6h4v1.25h-4zM1827 177.6h2v1.25h-2zM1812 185.6h4v1.25h-4zM1816 185.6h3v1.25h-3zM1813 187.6h3v1.25h-3zM1819 187.6h4v1.25h-4zM1797 191.6h2v1.25h-2zM1799 191.6h4v1.25h-4zM1803 191.6h2v1.25h-2zM1798 193.6h4v1.25h-4zM1826 195.6h4v1.25h-4zM1830 195.6h2v1.25h-2zM1836 195.6h1v1.25h-1zM1845 195.6h2v1.25h-2zM1799 199.6h4v1.25h-4zM1797 203.6h3v1.25h-3zM1800 203.6h3v1.25h-3zM1819 203.6h1v1.25h-1zM1799 205.6h3v1.25h-3zM1805 205.6h2v1.25h-2zM1814 205.6h1v1.25h-1zM1797 207.6h4v1.25h-4zM1811 207.6h2v1.25h-2zM1814 207.6h4v1.25h-4zM1800 209.6h1v1.25h-1zM1809 209.6h2v1.25h-2zM1818 211.6h2v1.25h-2zM1825 211.6h3v1.25h-3zM1843 211.6h3v1.25h-3zM1846 211.6h2v1.25h-2zM1803 213.6h3v1.25h-3zM1816 213.6h4v1.25h-4zM1820 213.6h2v1.25h-2zM1798 225.6h3v1.25h-3zM1801 225.6h4v1.25h-4zM1805 225.6h2v1.25h-2zM1853 225.6h2v1.25h-2zM1866 225.6h2v1.25h-2zM1888 225.6h2v1.25h-2zM1805 227.6h2v1.25h-2zM1852 231.6h2v1.25h-2zM1814 233.6h1v1.25h-1zM1816 233.6h2v1.25h-2zM1806 235.6h3v1.25h-3zM1819 235.6h2v1.25h-2zM1819 237.6h3v1.25h-3zM1826 237.6h1v1.25h-1zM1805 239.6h4v1.25h-4zM1829 239.6h2v1.25h-2zM1831 239.6h3v1.25h-3zM1851 239.6h3v1.25h-3zM1854 239.6h3v1.25h-3zM1794 241.6h3v1.25h-3zM1814 241.6h2v1.25h-2zM1817 241.6h3v1.25h-3zM1822 241.6h2v1.25h-2zM1824 241.6h2v1.25h-2zM1827 241.6h1v1.25h-1zM1819 243.6h3v1.25h-3zM1808 245.6h4v1.25h-4zM1824 245.6h3v1.25h-3zM1816 249.6h3v1.25h-3zM1793 255.6h2v1.25h-2zM1795 255.6h2v1.25h-2zM1811 275.6h3v1.25h-3zM1818 275.6h2v1.25h-2zM1827 275.6h3v1.25h-3zM1847 275.6h3v1.25h-3zM1854 279.6h4v1.25h-4zM1797 281.6h3v1.25h-3zM1800 281.6h2v1.25h-2zM1804 285.6h4v1.25h-4zM1822 299.6h2v1.25h-2zM1824 299.6h4v1.25h-4zM1803 303.6h2v1.25h-2zM1814 303.6h3v1.25h-3zM1817 333.6h3v1.25h-3zM1827 333.6h4v1.25h-4zM1831 333.6h2v1.25h-2zM1836 333.6h2v1.25h-2zM1818 339.6h1v1.25h-1zM1836 341.6h2v1.25h-2zM1825 351.6h2v1.25h-2zM1829 351.6h4v1.25h-4zM1830 353.6h4v1.25h-4zM1856 353.6h3v1.25h-3zM1859 353.6h3v1.25h-3zM1806 367.6h3v1.25h-3zM1813 367.6h2v1.25h-2zM1824 367.6h2v1.25h-2zM1844 367.6h4v1.25h-4zM1848 367.6h2v1.25h-2zM1820 369.6h3v1.25h-3zM1835 369.6h3v1.25h-3zM1807 375.6h3v1.25h-3zM1830 375.6h3v1.25h-3zM1833 375.6h2v1.25h-2zM1853 375.6h2v1.25h-2zM1855 375.6h1v1.25h-1zM1807 379.6h3v1.25h-3zM1830 381.6h3v1.25h-3zM1815 389.6h2v1.25h-2zM1825 391.6h2v1.25h-2zM1834 391.6h4v1.25h-4zM1817 405.6h3v1.25h-3zM1833 407.6h4v1.25h-4zM1812 409.6h1v1.25h-1zM1799 411.6h3v1.25h-3zM1810 411.6h2v1.25h-2zM1835 411.6h2v1.25h-2zM1803 413.6h3v1.25h-3zM1822 413.6h1v1.25h-1zM1835 413.6h3v1.25h-3zM1799 415.6h2v1.25h-2zM1839 415.6h2v1.25h-2zM1845 415.6h1v1.25h-1zM1855 415.6h2v1.25h-2zM1833 417.6h4v1.25h-4zM1845 417.6h2v1.25h-2zM1805 433.6h4v1.25h-4zM1842 443.6h2v1.25h-2zM1847 443.6h2v1.25h-2zM1849 443.6h1v1.25h-1zM1814 445.6h2v1.25h-2zM1833 445.6h2v1.25h-2zM1835 445.6h2v1.25h-2zM1837 445.6h2v1.25h-2zM1805 459.6h4v1.25h-4zM1820 461.6h1v1.25h-1zM1825 463.6h3v1.25h-3zM1853 463.6h1v1.25h-1zM1816 465.6h3v1.25h-3zM1825 465.6h1v1.25h-1zM1828 479.6h1v1.25h-1zM1851 479.6h2v1.25h-2zM1809 483.6h2v1.25h-2zM1809 485.6h2v1.25h-2zM1841 487.6h2v1.25h-2zM1815 489.6h4v1.25h-4zM1819 489.6h3v1.25h-3zM1829 489.6h3v1.25h-3zM1838 489.6h3v1.25h-3zM1844 489.6h2v1.25h-2zM1810 503.6h1v1.25h-1zM1834 505.6h3v1.25h-3zM1812 509.6h1v1.25h-1zM1819 509.6h2v1.25h-2zM1821 509.6h4v1.25h-4zM1830 509.6h2v1.25h-2zM1842 509.6h2v1.25h-2zM1843 511.6h1v1.25h-1zM1807 513.6h3v1.25h-3zM1810 513.6h1v1.25h-1zM1838 513.6h1v1.25h-1zM1805 531.6h4v1.25h-4zM1814 531.6h1v1.25h-1zM1821 533.6h3v1.25h-3zM1836 535.6h2v1.25h-2zM1822 537.6h1v1.25h-1zM1828 537.6h4v1.25h-4zM1833 537.6h3v1.25h-3zM1840 537.6h3v1.25h-3zM1848 537.6h1v1.25h-1zM1818 539.6h2v1.25h-2zM1820 539.6h2v1.25h-2zM1815 541.6h3v1.25h-3zM1805 549.6h2v1.25h-2zM1815 549.6h1v1.25h-1zM1819 551.6h2v1.25h-2zM1821 551.6h1v1.25h-1zM1823 551.6h4v1.25h-4zM1849 551.6h3v1.25h-3zM1854 551.6h1v1.25h-1zM1816 553.6h2v1.25h-2zM1829 555.6h4v1.25h-4zM1809 559.6h3v1.25h-3zM1815 559.6h3v1.25h-3zM1821 559.6h3v1.25h-3zM1825 559.6h4v1.25h-4zM1829 559.6h2v1.25h-2zM1837 559.6h2v1.25h-2zM1839 559.6h4v1.25h-4zM1822 561.6h2v1.25h-2zM1853 561.6h3v1.25h-3zM1865 561.6h4v1.25h-4zM1806 577.6h1v1.25h-1zM1808 591.6h3v1.25h-3zM1807 599.6h4v1.25h-4zM1808 601.6h4v1.25h-4zM1829 617.6h3v1.25h-3zM1814 623.6h4v1.25h-4zM1818 623.6h2v1.25h-2zM1820 623.6h2v1.25h-2zM1802 633.6h1v1.25h-1zM1820 633.6h4v1.25h-4zM1830 635.6h2v1.25h-2zM1832 635.6h3v1.25h-3zM1823 641.6h4v1.25h-4zM1827 641.6h2v1.25h-2zM1807 649.6h3v1.25h-3zM1804 651.6h2v1.25h-2zM1806 651.6h1v1.25h-1zM1803 665.6h3v1.25h-3zM1826 665.6h4v1.25h-4zM1830 665.6h4v1.25h-4zM1818 669.6h3v1.25h-3zM1833 669.6h3v1.25h-3zM1802 677.6h2v1.25h-2zM1804 677.6h2v1.25h-2zM1806 677.6h2v1.25h-2zM1800 691.6h4v1.25h-4zM1797 693.6h3v1.25h-3zM1804 693.6h3v1.25h-3zM1807 693.6h3v1.25h-3zM1797 707.6h3v1.25h-3zM1800 707.6h1v1.25h-1zM1797 721.6h3v1.25h-3zM1800 721.6h3v1.25h-3zM1817 721.6h2v1.25h-2zM1809 731.6h4v1.25h-4zM1800 735.6h4v1.25h-4zM1799 737.6h3v1.25h-3zM1802 737.6h4v1.25h-4zM1809 737.6h2v1.25h-2zM1826 737.6h1v1.25h-1zM1815 745.6h2v1.25h-2zM1828 745.6h3v1.25h-3zM1831 745.6h3v1.25h-3zM1812 751.6h2v1.25h-2zM1830 751.6h2v1.25h-2zM1814 753.6h4v1.25h-4zM1818 753.6h2v1.25h-2zM1820 755.6h2v1.25h-2zM1822 755.6h3v1.25h-3zM1802 761.6h2v1.25h-2zM1819 761.6h3v1.25h-3zM1823 761.6h3v1.25h-3zM1826 761.6h3v1.25h-3zM1804 769.6h3v1.25h-3zM1814 769.6h4v1.25h-4zM1821 769.6h2v1.25h-2zM1840 769.6h2v1.25h-2zM1799 773.6h4v1.25h-4zM1837 781.6h3v1.25h-3zM1808 789.6h2v1.25h-2zM1797 793.6h3v1.25h-3zM1801 793.6h2v1.25h-2zM1838 793.6h2v1.25h-2zM1840 793.6h4v1.25h-4zM1807 795.6h3v1.25h-3zM1819 795.6h4v1.25h-4zM1823 795.6h1v1.25h-1zM1825 795.6h4v1.25h-4zM1829 795.6h2v1.25h-2zM1806 797.6h2v1.25h-2zM1811 797.6h2v1.25h-2zM1814 797.6h2v1.25h-2zM1813 799.6h2v1.25h-2zM1803 803.6h4v1.25h-4zM1797 817.6h2v1.25h-2zM1807 817.6h3v1.25h-3zM1813 817.6h2v1.25h-2zM1815 817.6h4v1.25h-4zM1819 817.6h1v1.25h-1zM1834 817.6h1v1.25h-1zM1836 817.6h3v1.25h-3zM1839 817.6h2v1.25h-2zM1801 819.6h3v1.25h-3zM1804 819.6h3v1.25h-3zM1802 829.6h2v1.25h-2zM1801 831.6h2v1.25h-2zM1804 831.6h3v1.25h-3zM1810 831.6h2v1.25h-2zM1825 831.6h3v1.25h-3zM1833 831.6h1v1.25h-1zM1804 835.6h2v1.25h-2zM1814 845.6h3v1.25h-3zM1817 845.6h2v1.25h-2zM1827 845.6h3v1.25h-3zM1811 847.6h3v1.25h-3zM1805 849.6h1v1.25h-1zM1810 851.6h1v1.25h-1zM1806 855.6h4v1.25h-4zM1815 863.6h4v1.25h-4zM1845 863.6h4v1.25h-4zM1855 863.6h2v1.25h-2zM1889 863.6h3v1.25h-3zM1892 863.6h1v1.25h-1zM1801 865.6h2v1.25h-2zM1809 865.6h1v1.25h-1zM1811 865.6h2v1.25h-2zM1816 865.6h1v1.25h-1zM1809 867.6h2v1.25h-2zM1813 871.6h3v1.25h-3zM1818 871.6h3v1.25h-3zM1828 873.6h2v1.25h-2zM1830 873.6h1v1.25h-1zM1803 875.6h3v1.25h-3zM1806 875.6h2v1.25h-2zM1818 875.6h4v1.25h-4zM1822 875.6h4v1.25h-4zM1840 875.6h3v1.25h-3zM1846 875.6h3v1.25h-3zM1849 875.6h2v1.25h-2zM1898 875.6h2v1.25h-2zM1900 875.6h3v1.25h-3zM1808 887.6h3v1.25h-3zM1827 887.6h4v1.25h-4zM1805 891.6h2v1.25h-2zM1810 895.6h3v1.25h-3zM1803 897.6h2v1.25h-2zM1809 897.6h1v1.25h-1zM1811 897.6h3v1.25h-3zM1818 897.6h2v1.25h-2zM1803 899.6h2v1.25h-2zM1809 899.6h2v1.25h-2zM1811 899.6h2v1.25h-2zM1852 899.6h2v1.25h-2zM1875 899.6h4v1.25h-4zM1816 901.6h3v1.25h-3zM1804 905.6h1v1.25h-1zM1820 911.6h1v1.25h-1zM1803 921.6h3v1.25h-3zM1816 921.6h1v1.25h-1zM1857 921.6h3v1.25h-3zM1815 925.6h3v1.25h-3zM1844 925.6h3v1.25h-3zM1892 925.6h2v1.25h-2zM1805 927.6h3v1.25h-3zM1808 927.6h4v1.25h-4zM1813 933.6h2v1.25h-2zM1817 933.6h3v1.25h-3zM1823 933.6h1v1.25h-1zM1804 935.6h1v1.25h-1zM1801 941.6h3v1.25h-3zM1804 941.6h4v1.25h-4zM1847 943.6h4v1.25h-4zM1852 943.6h3v1.25h-3zM1807 945.6h3v1.25h-3zM1813 945.6h4v1.25h-4zM1803 949.6h4v1.25h-4zM1807 949.6h3v1.25h-3zM1801 955.6h3v1.25h-3zM1804 955.6h1v1.25h-1zM1806 955.6h3v1.25h-3zM1832 955.6h3v1.25h-3zM1808 967.6h3v1.25h-3zM1811 967.6h4v1.25h-4zM1809 971.6h2v1.25h-2zM1814 971.6h4v1.25h-4zM1818 973.6h1v1.25h-1zM1801 979.6h4v1.25h-4zM1809 979.6h2v1.25h-2zM1813 979.6h1v1.25h-1zM1816 983.6h2v1.25h-2z"/>
<path fill="#9cdcfe" fill-opacity="0.45" d="M1825 117.6h1v1.25h-1zM1800 123.6h4v1.25h-4zM1798 125.6h4v1.25h-4zM1808 125.6h2v1.25h-2zM1801 127.6h2v1.25h-2zM1808 127.6h3v1.25h-3zM1818 127.6h3v1.25h-3zM1821 127.6h3v1.25h-3zM1811 129.6h3v1.25h-3zM1816 129.6h3v1.25h-3zM1819 129.6h2v1.25h-2zM1808 131.6h3v1.25h-3zM1807 133.6h3v1.25h-3zM1821 133.6h4v1.25h-4zM1798 135.6h4v1.25h-4zM1810 135.6h4v1.25h-4zM1818 135.6h4v1.25h-4zM1826 135.6h3v1.25h-3zM1798 137.6h3v1.25h-3zM1801 137.6h2v1.25h-2zM1803 137.6h4v1.25h-4zM1810 137.6h3v1.25h-3zM1813 137.6h4v1.25h-4zM1804 139.6h1v1.25h-1zM1811 139.6h3v1.25h-3zM1811 141.6h3v1.25h-3zM1814 141.6h2v1.25h-2zM1802 143.6h4v1.25h-4zM1806 143.6h4v1.25h-4zM1810 143.6h1v1.25h-1zM1817 143.6h2v1.25h-2zM1819 143.6h2v1.25h-2zM1821 143.6h3v1.25h-3zM1824 143.6h4v1.25h-4zM1831 143.6h3v1.25h-3zM1834 143.6h2v1.25h-2zM1808 145.6h3v1.25h-3zM1811 145.6h2v1.25h-2zM1824 145.6h4v1.25h-4zM1832 145.6h2v1.25h-2zM1804 147.6h2v1.25h-2zM1806 147.6h2v1.25h-2zM1816 147.6h2v1.25h-2zM1822 147.6h4v1.25h-4zM1828 147.6h4v1.25h-4zM1832 147.6h2v1.25h-2zM1800 149.6h2v1.25h-2zM1802 149.6h3v1.25h-3zM1822 149.6h3v1.25h-3zM1827 149.6h2v1.25h-2zM1798 151.6h4v1.25h-4zM1806 151.6h2v1.25h-2zM1816 151.6h2v1.25h-2zM1818 151.6h4v1.25h-4zM1822 151.6h2v1.25h-2zM1798 153.6h4v1.25h-4zM1802 153.6h4v1.25h-4zM1806 153.6h3v1.25h-3zM1811 153.6h4v1.25h-4zM1813 155.6h2v1.25h-2zM1824 155.6h3v1.25h-3zM1833 155.6h2v1.25h-2zM1835 155.6h4v1.25h-4zM1804 163.6h2v1.25h-2zM1804 167.6h2v1.25h-2zM1810 167.6h2v1.25h-2zM1807 169.6h3v1.25h-3zM1820 169.6h2v1.25h-2zM1798 171.6h3v1.25h-3zM1805 171.6h1v1.25h-1zM1801 173.6h1v1.25h-1zM1806 175.6h2v1.25h-2zM1805 177.6h2v1.25h-2zM1807 177.6h2v1.25h-2zM1809 177.6h3v1.25h-3zM1836 177.6h2v1.25h-2zM1841 177.6h2v1.25h-2zM1798 185.6h2v1.25h-2zM1800 185.6h1v1.25h-1zM1806 185.6h3v1.25h-3zM1798 187.6h2v1.25h-2zM1800 187.6h3v1.25h-3zM1807 187.6h2v1.25h-2zM1825 187.6h3v1.25h-3zM1798 189.6h3v1.25h-3zM1804 193.6h3v1.25h-3zM1815 193.6h4v1.25h-4zM1816 195.6h4v1.25h-4zM1842 195.6h3v1.25h-3zM1797 201.6h4v1.25h-4zM1805 201.6h4v1.25h-4zM1809 201.6h4v1.25h-4zM1807 203.6h2v1.25h-2zM1813 203.6h2v1.25h-2zM1815 203.6h1v1.25h-1zM1817 203.6h2v1.25h-2zM1802 205.6h2v1.25h-2zM1811 205.6h3v1.25h-3zM1823 205.6h4v1.25h-4zM1829 205.6h1v1.25h-1zM1801 207.6h3v1.25h-3zM1804 207.6h3v1.25h-3zM1801 211.6h3v1.25h-3zM1811 211.6h4v1.25h-4zM1820 211.6h1v1.25h-1zM1828 211.6h2v1.25h-2zM1830 211.6h2v1.25h-2zM1797 213.6h2v1.25h-2zM1809 213.6h2v1.25h-2zM1859 225.6h3v1.25h-3zM1863 225.6h3v1.25h-3zM1801 227.6h4v1.25h-4zM1807 227.6h1v1.25h-1zM1828 227.6h2v1.25h-2zM1855 231.6h4v1.25h-4zM1859 231.6h3v1.25h-3zM1862 231.6h3v1.25h-3zM1802 233.6h4v1.25h-4zM1806 233.6h2v1.25h-2zM1808 233.6h1v1.25h-1zM1809 233.6h2v1.25h-2zM1812 233.6h2v1.25h-2zM1798 235.6h3v1.25h-3zM1800 237.6h2v1.25h-2zM1802 237.6h3v1.25h-3zM1805 237.6h3v1.25h-3zM1803 239.6h2v1.25h-2zM1825 239.6h4v1.25h-4zM1844 239.6h4v1.25h-4zM1848 239.6h2v1.25h-2zM1857 239.6h3v1.25h-3zM1806 241.6h3v1.25h-3zM1799 245.6h2v1.25h-2zM1813 245.6h3v1.25h-3zM1832 245.6h4v1.25h-4zM1836 245.6h1v1.25h-1zM1810 249.6h2v1.25h-2zM1802 255.6h3v1.25h-3zM1815 273.6h1v1.25h-1zM1797 279.6h2v1.25h-2zM1799 279.6h4v1.25h-4zM1803 279.6h2v1.25h-2zM1858 279.6h4v1.25h-4zM1863 279.6h2v1.25h-2zM1807 281.6h2v1.25h-2zM1809 281.6h3v1.25h-3zM1812 281.6h1v1.25h-1zM1801 285.6h3v1.25h-3zM1810 285.6h1v1.25h-1zM1809 291.6h4v1.25h-4zM1801 297.6h2v1.25h-2zM1815 299.6h2v1.25h-2zM1818 299.6h2v1.25h-2zM1828 299.6h2v1.25h-2zM1805 303.6h3v1.25h-3zM1808 303.6h2v1.25h-2zM1813 315.6h3v1.25h-3zM1833 333.6h2v1.25h-2zM1812 339.6h4v1.25h-4zM1816 339.6h2v1.25h-2zM1832 341.6h2v1.25h-2zM1823 345.6h3v1.25h-3zM1837 351.6h2v1.25h-2zM1868 351.6h3v1.25h-3zM1871 351.6h4v1.25h-4zM1875 351.6h1v1.25h-1zM1817 353.6h3v1.25h-3zM1820 353.6h1v1.25h-1zM1838 353.6h3v1.25h-3zM1822 367.6h2v1.25h-2zM1823 369.6h2v1.25h-2zM1842 369.6h2v1.25h-2zM1819 373.6h1v1.25h-1zM1816 375.6h4v1.25h-4zM1820 375.6h3v1.25h-3zM1827 375.6h3v1.25h-3zM1850 375.6h3v1.25h-3zM1810 379.6h3v1.25h-3zM1815 379.6h2v1.25h-2zM1828 381.6h2v1.25h-2zM1819 389.6h4v1.25h-4zM1826 389.6h2v1.25h-2zM1812 393.6h3v1.25h-3zM1804 405.6h2v1.25h-2zM1861 405.6h4v1.25h-4zM1831 409.6h3v1.25h-3zM1834 409.6h1v1.25h-1zM1802 411.6h4v1.25h-4zM1807 411.6h3v1.25h-3zM1837 411.6h2v1.25h-2zM1799 413.6h4v1.25h-4zM1806 413.6h1v1.25h-1zM1831 413.6h4v1.25h-4zM1806 415.6h2v1.25h-2zM1824 415.6h2v1.25h-2zM1857 415.6h4v1.25h-4zM1799 417.6h3v1.25h-3zM1806 417.6h2v1.25h-2zM1808 417.6h1v1.25h-1zM1819 417.6h2v1.25h-2zM1837 417.6h2v1.25h-2zM1839 417.6h2v1.25h-2zM1862 417.6h2v1.25h-2zM1808 427.6h4v1.25h-4zM1809 433.6h2v1.25h-2zM1836 439.6h3v1.25h-3zM1817 445.6h3v1.25h-3zM1809 459.6h1v1.25h-1zM1816 461.6h4v1.25h-4zM1809 463.6h3v1.25h-3zM1814 463.6h2v1.25h-2zM1828 463.6h1v1.25h-1zM1847 463.6h2v1.25h-2zM1864 463.6h3v1.25h-3zM1819 465.6h1v1.25h-1zM1820 465.6h2v1.25h-2zM1823 465.6h2v1.25h-2zM1821 479.6h4v1.25h-4zM1823 483.6h4v1.25h-4zM1827 483.6h1v1.25h-1zM1840 483.6h2v1.25h-2zM1842 483.6h2v1.25h-2zM1807 485.6h2v1.25h-2zM1835 489.6h2v1.25h-2zM1846 489.6h1v1.25h-1zM1807 509.6h3v1.25h-3zM1825 509.6h2v1.25h-2zM1827 509.6h2v1.25h-2zM1832 509.6h2v1.25h-2zM1834 509.6h4v1.25h-4zM1838 509.6h2v1.25h-2zM1846 509.6h2v1.25h-2zM1817 511.6h2v1.25h-2zM1820 511.6h4v1.25h-4zM1824 511.6h2v1.25h-2zM1826 511.6h3v1.25h-3zM1838 511.6h2v1.25h-2zM1840 511.6h3v1.25h-3zM1805 529.6h3v1.25h-3zM1811 529.6h3v1.25h-3zM1816 533.6h2v1.25h-2zM1834 535.6h2v1.25h-2zM1818 537.6h2v1.25h-2zM1823 539.6h4v1.25h-4zM1837 539.6h4v1.25h-4zM1807 549.6h3v1.25h-3zM1811 549.6h2v1.25h-2zM1826 555.6h3v1.25h-3zM1833 555.6h2v1.25h-2zM1807 559.6h2v1.25h-2zM1812 559.6h3v1.25h-3zM1843 559.6h1v1.25h-1zM1820 561.6h2v1.25h-2zM1828 561.6h1v1.25h-1zM1863 561.6h2v1.25h-2zM1810 569.6h3v1.25h-3zM1817 579.6h2v1.25h-2zM1809 583.6h2v1.25h-2zM1811 583.6h3v1.25h-3zM1814 583.6h4v1.25h-4zM1820 591.6h1v1.25h-1zM1813 593.6h4v1.25h-4zM1812 601.6h1v1.25h-1zM1801 603.6h4v1.25h-4zM1805 603.6h2v1.25h-2zM1804 617.6h3v1.25h-3zM1826 617.6h2v1.25h-2zM1832 617.6h2v1.25h-2zM1799 633.6h3v1.25h-3zM1835 635.6h1v1.25h-1zM1811 637.6h3v1.25h-3zM1808 639.6h3v1.25h-3zM1815 641.6h1v1.25h-1zM1829 641.6h3v1.25h-3zM1811 649.6h2v1.25h-2zM1813 649.6h2v1.25h-2zM1801 651.6h3v1.25h-3zM1797 665.6h2v1.25h-2zM1824 669.6h1v1.25h-1zM1813 673.6h2v1.25h-2zM1804 691.6h1v1.25h-1zM1800 693.6h4v1.25h-4zM1810 693.6h1v1.25h-1zM1802 703.6h2v1.25h-2zM1802 719.6h4v1.25h-4zM1806 719.6h2v1.25h-2zM1805 731.6h4v1.25h-4zM1813 731.6h2v1.25h-2zM1814 733.6h1v1.25h-1zM1819 737.6h4v1.25h-4zM1817 745.6h1v1.25h-1zM1809 751.6h3v1.25h-3zM1833 751.6h4v1.25h-4zM1828 753.6h3v1.25h-3zM1834 753.6h2v1.25h-2zM1814 755.6h2v1.25h-2zM1816 755.6h2v1.25h-2zM1799 757.6h4v1.25h-4zM1847 757.6h2v1.25h-2zM1811 759.6h2v1.25h-2zM1804 761.6h4v1.25h-4zM1822 761.6h1v1.25h-1zM1858 761.6h3v1.25h-3zM1815 767.6h4v1.25h-4zM1818 769.6h3v1.25h-3zM1810 771.6h4v1.25h-4zM1805 773.6h2v1.25h-2zM1813 773.6h3v1.25h-3zM1823 773.6h3v1.25h-3zM1828 773.6h3v1.25h-3zM1831 773.6h2v1.25h-2zM1840 781.6h3v1.25h-3zM1843 781.6h3v1.25h-3zM1802 789.6h3v1.25h-3zM1844 789.6h2v1.25h-2zM1806 793.6h4v1.25h-4zM1810 793.6h1v1.25h-1zM1835 793.6h3v1.25h-3zM1864 793.6h1v1.25h-1zM1814 795.6h3v1.25h-3zM1833 795.6h1v1.25h-1zM1808 797.6h3v1.25h-3zM1816 797.6h1v1.25h-1zM1807 803.6h4v1.25h-4zM1832 817.6h2v1.25h-2zM1807 819.6h2v1.25h-2zM1804 829.6h1v1.25h-1zM1806 829.6h3v1.25h-3zM1797 831.6h2v1.25h-2zM1814 831.6h3v1.25h-3zM1819 831.6h3v1.25h-3zM1830 831.6h3v1.25h-3zM1806 835.6h1v1.25h-1zM1825 845.6h2v1.25h-2zM1809 849.6h3v1.25h-3zM1804 855.6h2v1.25h-2zM1820 863.6h4v1.25h-4zM1824 863.6h2v1.25h-2zM1850 863.6h3v1.25h-3zM1853 863.6h2v1.25h-2zM1824 865.6h3v1.25h-3zM1827 865.6h2v1.25h-2zM1829 865.6h2v1.25h-2zM1821 871.6h2v1.25h-2zM1808 873.6h2v1.25h-2zM1810 873.6h2v1.25h-2zM1813 873.6h3v1.25h-3zM1812 875.6h1v1.25h-1zM1829 875.6h4v1.25h-4zM1833 875.6h2v1.25h-2zM1835 875.6h2v1.25h-2zM1837 875.6h3v1.25h-3zM1851 875.6h1v1.25h-1zM1804 879.6h1v1.25h-1zM1801 887.6h4v1.25h-4zM1823 887.6h3v1.25h-3zM1831 887.6h4v1.25h-4zM1801 891.6h4v1.25h-4zM1809 891.6h2v1.25h-2zM1814 897.6h4v1.25h-4zM1805 899.6h4v1.25h-4zM1818 899.6h3v1.25h-3zM1850 899.6h2v1.25h-2zM1857 899.6h4v1.25h-4zM1813 913.6h3v1.25h-3zM1816 913.6h3v1.25h-3zM1812 919.6h3v1.25h-3zM1813 921.6h3v1.25h-3zM1818 921.6h4v1.25h-4zM1822 921.6h2v1.25h-2zM1824 921.6h3v1.25h-3zM1830 921.6h2v1.25h-2zM1840 921.6h2v1.25h-2zM1855 921.6h2v1.25h-2zM1813 925.6h2v1.25h-2zM1842 925.6h2v1.25h-2zM1889 925.6h3v1.25h-3zM1894 925.6h3v1.25h-3zM1805 929.6h3v1.25h-3zM1815 933.6h1v1.25h-1zM1820 933.6h3v1.25h-3zM1816 943.6h2v1.25h-2zM1844 943.6h2v1.25h-2zM1855 943.6h2v1.25h-2zM1857 943.6h2v1.25h-2zM1810 945.6h3v1.25h-3zM1822 955.6h2v1.25h-2zM1828 955.6h4v1.25h-4zM1801 973.6h4v1.25h-4zM1806 973.6h3v1.25h-3zM1811 979.6h2v1.25h-2zM1810 981.6h2v1.25h-2zM1812 983.6h4v1.25h-4z"/>
<path fill="#d4d4d4" fill-opacity="0.7" d="M1813 117.6h2v1.25h-2zM1826 117.6h1v1.25h-1zM1800 121.6h1v1.25h-1zM1797 123.6h1v1.25h-1zM1804 123.6h2v1.25h-2zM1812 123.6h1v1.25h-1zM1806 127.6h2v1.25h-2zM1827 127.6h1v1.25h-1zM1797 131.6h1v1.25h-1zM1805 133.6h2v1.25h-2zM1808 135.6h2v1.25h-2zM1797 137.6h1v1.25h-1zM1808 137.6h2v1.25h-2zM1814 139.6h1v1.25h-1zM1806 141.6h2v1.25h-2zM1816 141.6h1v1.25h-1zM1811 143.6h2v1.25h-2zM1836 143.6h1v1.25h-1zM1834 145.6h1v1.25h-1zM1838 147.6h1v1.25h-1zM1797 149.6h1v1.25h-1zM1797 151.6h1v1.25h-1zM1797 153.6h1v1.25h-1zM1797 155.6h1v1.25h-1zM1800 163.6h2v1.25h-2zM1797 165.6h1v1.25h-1zM1816 167.6h1v1.25h-1zM1824 169.6h1v1.25h-1zM1816 171.6h1v1.25h-1zM1802 173.6h2v1.25h-2zM1834 177.6h1v1.25h-1zM1797 185.6h1v1.25h-1zM1820 185.6h1v1.25h-1zM1803 195.6h2v1.25h-2zM1838 195.6h1v1.25h-1zM1812 225.6h2v1.25h-2zM1821 225.6h3v1.25h-3zM1824 225.6h4v1.25h-4zM1828 225.6h3v1.25h-3zM1846 225.6h2v1.25h-2zM1808 227.6h3v1.25h-3zM1815 227.6h2v1.25h-2zM1822 227.6h4v1.25h-4zM1811 229.6h4v1.25h-4zM1815 229.6h2v1.25h-2zM1818 229.6h3v1.25h-3zM1832 229.6h1v1.25h-1zM1802 231.6h4v1.25h-4zM1820 231.6h2v1.25h-2zM1832 231.6h2v1.25h-2zM1834 231.6h2v1.25h-2zM1840 231.6h2v1.25h-2zM1865 231.6h2v1.25h-2zM1868 231.6h2v1.25h-2zM1870 231.6h3v1.25h-3zM1873 231.6h2v1.25h-2zM1804 235.6h2v1.25h-2zM1810 235.6h2v1.25h-2zM1811 237.6h4v1.25h-4zM1815 239.6h4v1.25h-4zM1805 249.6h4v1.25h-4zM1819 255.6h2v1.25h-2zM1795 259.6h3v1.25h-3zM1798 259.6h1v1.25h-1zM1804 261.6h2v1.25h-2zM1808 261.6h2v1.25h-2zM1798 263.6h2v1.25h-2zM1801 263.6h3v1.25h-3zM1804 263.6h1v1.25h-1zM1796 267.6h1v1.25h-1zM1802 267.6h2v1.25h-2zM1804 267.6h4v1.25h-4zM1808 267.6h2v1.25h-2zM1819 267.6h4v1.25h-4zM1823 267.6h1v1.25h-1zM1825 267.6h1v1.25h-1zM1824 273.6h3v1.25h-3zM1829 273.6h2v1.25h-2zM1797 275.6h4v1.25h-4zM1833 275.6h2v1.25h-2zM1841 275.6h1v1.25h-1zM1842 275.6h4v1.25h-4zM1859 275.6h2v1.25h-2zM1861 275.6h4v1.25h-4zM1805 277.6h1v1.25h-1zM1826 279.6h2v1.25h-2zM1829 279.6h4v1.25h-4zM1843 279.6h1v1.25h-1zM1797 287.6h3v1.25h-3zM1819 289.6h2v1.25h-2zM1800 291.6h2v1.25h-2zM1802 291.6h2v1.25h-2zM1799 295.6h3v1.25h-3zM1802 295.6h4v1.25h-4zM1808 297.6h3v1.25h-3zM1797 299.6h4v1.25h-4zM1797 301.6h3v1.25h-3zM1800 301.6h4v1.25h-4zM1807 301.6h1v1.25h-1zM1797 305.6h2v1.25h-2zM1804 305.6h2v1.25h-2zM1803 307.6h2v1.25h-2zM1812 307.6h2v1.25h-2zM1817 307.6h1v1.25h-1zM1802 309.6h2v1.25h-2zM1804 309.6h3v1.25h-3zM1808 311.6h4v1.25h-4zM1813 311.6h1v1.25h-1zM1814 313.6h1v1.25h-1zM1809 317.6h4v1.25h-4zM1824 319.6h2v1.25h-2zM1812 331.6h3v1.25h-3zM1815 331.6h2v1.25h-2zM1809 341.6h2v1.25h-2zM1811 341.6h2v1.25h-2zM1805 347.6h1v1.25h-1zM1822 351.6h3v1.25h-3zM1799 363.6h2v1.25h-2zM1801 363.6h2v1.25h-2zM1803 363.6h3v1.25h-3zM1801 365.6h3v1.25h-3zM1804 365.6h1v1.25h-1zM1826 367.6h4v1.25h-4zM1838 367.6h3v1.25h-3zM1841 367.6h2v1.25h-2zM1854 367.6h2v1.25h-2zM1803 369.6h3v1.25h-3zM1809 369.6h2v1.25h-2zM1811 369.6h1v1.25h-1zM1844 369.6h2v1.25h-2zM1851 369.6h2v1.25h-2zM1819 379.6h3v1.25h-3zM1822 379.6h4v1.25h-4zM1835 379.6h3v1.25h-3zM1838 379.6h1v1.25h-1zM1862 379.6h1v1.25h-1zM1814 381.6h2v1.25h-2zM1818 391.6h4v1.25h-4zM1840 391.6h3v1.25h-3zM1797 403.6h3v1.25h-3zM1804 403.6h1v1.25h-1zM1810 405.6h3v1.25h-3zM1852 405.6h1v1.25h-1zM1854 405.6h4v1.25h-4zM1858 405.6h2v1.25h-2zM1807 407.6h2v1.25h-2zM1810 407.6h2v1.25h-2zM1815 407.6h4v1.25h-4zM1819 407.6h2v1.25h-2zM1821 407.6h3v1.25h-3zM1826 407.6h3v1.25h-3zM1855 407.6h2v1.25h-2zM1862 407.6h3v1.25h-3zM1865 407.6h2v1.25h-2zM1826 409.6h4v1.25h-4zM1843 409.6h2v1.25h-2zM1846 409.6h4v1.25h-4zM1857 409.6h4v1.25h-4zM1816 411.6h4v1.25h-4zM1820 411.6h1v1.25h-1zM1821 411.6h4v1.25h-4zM1847 411.6h2v1.25h-2zM1860 411.6h4v1.25h-4zM1864 411.6h4v1.25h-4zM1868 411.6h2v1.25h-2zM1813 413.6h3v1.25h-3zM1816 413.6h2v1.25h-2zM1868 413.6h2v1.25h-2zM1876 413.6h3v1.25h-3zM1868 415.6h3v1.25h-3zM1880 415.6h2v1.25h-2zM1809 417.6h3v1.25h-3zM1806 421.6h3v1.25h-3zM1810 421.6h1v1.25h-1zM1799 423.6h3v1.25h-3zM1802 423.6h3v1.25h-3zM1814 435.6h4v1.25h-4zM1818 435.6h3v1.25h-3zM1821 437.6h2v1.25h-2zM1832 437.6h2v1.25h-2zM1856 437.6h1v1.25h-1zM1865 437.6h3v1.25h-3zM1854 439.6h1v1.25h-1zM1819 443.6h3v1.25h-3zM1832 443.6h2v1.25h-2zM1831 445.6h1v1.25h-1zM1809 447.6h2v1.25h-2zM1803 457.6h1v1.25h-1zM1812 461.6h3v1.25h-3zM1821 461.6h2v1.25h-2zM1823 461.6h3v1.25h-3zM1828 461.6h2v1.25h-2zM1841 465.6h4v1.25h-4zM1825 469.6h4v1.25h-4zM1805 471.6h1v1.25h-1zM1858 479.6h4v1.25h-4zM1815 481.6h3v1.25h-3zM1818 481.6h3v1.25h-3zM1862 483.6h2v1.25h-2zM1867 483.6h2v1.25h-2zM1822 485.6h2v1.25h-2zM1826 485.6h2v1.25h-2zM1829 485.6h3v1.25h-3zM1836 487.6h1v1.25h-1zM1809 491.6h2v1.25h-2zM1803 501.6h1v1.25h-1zM1822 505.6h1v1.25h-1zM1845 505.6h2v1.25h-2zM1809 507.6h2v1.25h-2zM1811 507.6h2v1.25h-2zM1824 507.6h3v1.25h-3zM1850 509.6h4v1.25h-4zM1844 511.6h2v1.25h-2zM1846 511.6h2v1.25h-2zM1805 525.6h1v1.25h-1zM1830 531.6h2v1.25h-2zM1834 531.6h4v1.25h-4zM1838 531.6h2v1.25h-2zM1857 531.6h4v1.25h-4zM1863 531.6h3v1.25h-3zM1812 533.6h4v1.25h-4zM1831 535.6h3v1.25h-3zM1844 535.6h1v1.25h-1zM1846 535.6h4v1.25h-4zM1860 535.6h2v1.25h-2zM1824 537.6h3v1.25h-3zM1868 537.6h1v1.25h-1zM1824 549.6h4v1.25h-4zM1828 551.6h2v1.25h-2zM1835 551.6h3v1.25h-3zM1859 551.6h4v1.25h-4zM1825 553.6h4v1.25h-4zM1823 555.6h2v1.25h-2zM1839 555.6h4v1.25h-4zM1843 555.6h1v1.25h-1zM1851 555.6h2v1.25h-2zM1822 557.6h3v1.25h-3zM1825 557.6h4v1.25h-4zM1829 557.6h2v1.25h-2zM1845 559.6h3v1.25h-3zM1851 559.6h2v1.25h-2zM1857 559.6h4v1.25h-4zM1863 559.6h2v1.25h-2zM1865 559.6h2v1.25h-2zM1810 561.6h2v1.25h-2zM1848 561.6h2v1.25h-2zM1850 561.6h2v1.25h-2zM1884 561.6h3v1.25h-3zM1890 561.6h4v1.25h-4zM1810 579.6h4v1.25h-4zM1797 585.6h1v1.25h-1zM1799 593.6h4v1.25h-4zM1803 593.6h4v1.25h-4zM1812 593.6h1v1.25h-1zM1801 597.6h2v1.25h-2zM1799 599.6h4v1.25h-4zM1805 599.6h2v1.25h-2zM1807 605.6h4v1.25h-4zM1813 605.6h3v1.25h-3zM1809 609.6h4v1.25h-4zM1820 609.6h4v1.25h-4zM1799 613.6h2v1.25h-2zM1801 613.6h2v1.25h-2zM1805 621.6h2v1.25h-2zM1807 621.6h2v1.25h-2zM1797 625.6h1v1.25h-1zM1801 629.6h1v1.25h-1zM1811 631.6h4v1.25h-4zM1824 643.6h4v1.25h-4zM1795 657.6h1v1.25h-1zM1795 663.6h1v1.25h-1zM1823 665.6h2v1.25h-2zM1865 665.6h4v1.25h-4zM1869 665.6h2v1.25h-2zM1799 675.6h3v1.25h-3zM1804 689.6h4v1.25h-4zM1813 691.6h1v1.25h-1zM1822 691.6h4v1.25h-4zM1797 697.6h1v1.25h-1zM1805 703.6h4v1.25h-4zM1802 707.6h2v1.25h-2zM1806 707.6h3v1.25h-3zM1810 719.6h3v1.25h-3zM1804 721.6h3v1.25h-3zM1807 721.6h1v1.25h-1zM1824 721.6h4v1.25h-4zM1828 721.6h1v1.25h-1zM1844 721.6h2v1.25h-2zM1824 723.6h3v1.25h-3zM1797 727.6h1v1.25h-1zM1820 731.6h2v1.25h-2zM1805 733.6h2v1.25h-2zM1810 733.6h3v1.25h-3zM1822 735.6h2v1.25h-2zM1835 735.6h3v1.25h-3zM1838 735.6h2v1.25h-2zM1812 737.6h2v1.25h-2zM1797 739.6h1v1.25h-1zM1834 745.6h4v1.25h-4zM1795 747.6h1v1.25h-1zM1815 751.6h4v1.25h-4zM1819 751.6h3v1.25h-3zM1843 751.6h4v1.25h-4zM1825 753.6h2v1.25h-2zM1837 753.6h4v1.25h-4zM1837 755.6h2v1.25h-2zM1810 757.6h2v1.25h-2zM1816 757.6h3v1.25h-3zM1819 757.6h3v1.25h-3zM1799 759.6h2v1.25h-2zM1801 759.6h2v1.25h-2zM1805 759.6h1v1.25h-1zM1814 759.6h3v1.25h-3zM1851 759.6h1v1.25h-1zM1799 761.6h2v1.25h-2zM1809 761.6h3v1.25h-3zM1851 761.6h3v1.25h-3zM1805 767.6h4v1.25h-4zM1826 767.6h4v1.25h-4zM1799 771.6h2v1.25h-2zM1821 771.6h2v1.25h-2zM1806 781.6h3v1.25h-3zM1811 781.6h4v1.25h-4zM1829 781.6h3v1.25h-3zM1832 781.6h3v1.25h-3zM1811 789.6h4v1.25h-4zM1815 789.6h4v1.25h-4zM1819 789.6h2v1.25h-2zM1835 789.6h2v1.25h-2zM1816 793.6h3v1.25h-3zM1821 793.6h1v1.25h-1zM1823 793.6h3v1.25h-3zM1832 793.6h2v1.25h-2zM1835 795.6h4v1.25h-4zM1826 797.6h2v1.25h-2zM1846 797.6h2v1.25h-2zM1806 799.6h3v1.25h-3zM1809 799.6h3v1.25h-3zM1799 803.6h2v1.25h-2zM1801 803.6h1v1.25h-1zM1804 813.6h1v1.25h-1zM1810 819.6h3v1.25h-3zM1849 831.6h4v1.25h-4zM1799 845.6h3v1.25h-3zM1802 845.6h2v1.25h-2zM1813 845.6h1v1.25h-1zM1830 845.6h3v1.25h-3zM1802 853.6h3v1.25h-3zM1805 853.6h3v1.25h-3zM1808 853.6h1v1.25h-1zM1803 857.6h4v1.25h-4zM1801 861.6h4v1.25h-4zM1801 863.6h2v1.25h-2zM1803 863.6h2v1.25h-2zM1842 863.6h2v1.25h-2zM1883 863.6h4v1.25h-4zM1899 863.6h2v1.25h-2zM1817 865.6h4v1.25h-4zM1821 865.6h2v1.25h-2zM1823 871.6h4v1.25h-4zM1851 871.6h2v1.25h-2zM1853 871.6h1v1.25h-1zM1822 873.6h3v1.25h-3zM1825 873.6h2v1.25h-2zM1814 875.6h2v1.25h-2zM1862 875.6h4v1.25h-4zM1870 875.6h1v1.25h-1zM1877 875.6h4v1.25h-4zM1892 875.6h2v1.25h-2zM1819 887.6h3v1.25h-3zM1837 887.6h2v1.25h-2zM1839 887.6h3v1.25h-3zM1835 889.6h4v1.25h-4zM1811 891.6h4v1.25h-4zM1817 891.6h2v1.25h-2zM1821 897.6h2v1.25h-2zM1823 897.6h2v1.25h-2zM1847 897.6h1v1.25h-1zM1881 899.6h2v1.25h-2zM1815 903.6h2v1.25h-2zM1817 903.6h2v1.25h-2zM1813 907.6h2v1.25h-2zM1803 911.6h3v1.25h-3zM1829 911.6h1v1.25h-1zM1831 911.6h2v1.25h-2zM1816 917.6h1v1.25h-1zM1805 925.6h4v1.25h-4zM1811 925.6h1v1.25h-1zM1822 925.6h2v1.25h-2zM1824 925.6h3v1.25h-3zM1882 925.6h2v1.25h-2zM1899 925.6h2v1.25h-2zM1817 927.6h2v1.25h-2zM1820 927.6h4v1.25h-4zM1809 929.6h3v1.25h-3zM1812 929.6h2v1.25h-2zM1803 931.6h4v1.25h-4zM1828 933.6h3v1.25h-3zM1809 941.6h2v1.25h-2zM1817 941.6h3v1.25h-3zM1827 941.6h2v1.25h-2zM1806 943.6h2v1.25h-2zM1810 943.6h4v1.25h-4zM1827 943.6h2v1.25h-2zM1829 943.6h2v1.25h-2zM1836 943.6h3v1.25h-3zM1841 945.6h3v1.25h-3zM1863 945.6h3v1.25h-3zM1814 949.6h1v1.25h-1zM1803 969.6h2v1.25h-2zM1822 969.6h1v1.25h-1zM1830 969.6h3v1.25h-3zM1834 969.6h1v1.25h-1zM1813 977.6h2v1.25h-2zM1815 977.6h4v1.25h-4zM1819 977.6h2v1.25h-2zM1807 979.6h2v1.25h-2zM1819 979.6h2v1.25h-2zM1821 979.6h3v1.25h-3zM1824 979.6h1v1.25h-1zM1814 981.6h4v1.25h-4zM1820 981.6h1v1.25h-1zM1803 983.6h2v1.25h-2zM1823 983.6h4v1.25h-4zM1830 983.6h4v1.25h-4z"/>
<path fill="#d4d4d4" fill-opacity="0.58" d="M1797 125.6h1v1.25h-1zM1802 125.6h2v1.25h-2zM1812 125.6h1v1.25h-1zM1797 127.6h1v1.25h-1zM1797 129.6h1v1.25h-1zM1809 129.6h2v1.25h-2zM1811 131.6h1v1.25h-1zM1825 133.6h1v1.25h-1zM1797 135.6h1v1.25h-1zM1830 135.6h1v1.25h-1zM1820 137.6h1v1.25h-1zM1797 141.6h1v1.25h-1zM1797 145.6h1v1.25h-1zM1833 149.6h1v1.25h-1zM1809 153.6h2v1.25h-2zM1827 153.6h1v1.25h-1zM1815 155.6h2v1.25h-2zM1839 155.6h1v1.25h-1zM1810 165.6h1v1.25h-1zM1806 167.6h2v1.25h-2zM1805 169.6h2v1.25h-2zM1797 171.6h1v1.25h-1zM1806 171.6h2v1.25h-2zM1797 173.6h1v1.25h-1zM1808 173.6h1v1.25h-1zM1821 175.6h1v1.25h-1zM1797 177.6h1v1.25h-1zM1843 177.6h1v1.25h-1zM1797 187.6h1v1.25h-1zM1805 187.6h2v1.25h-2zM1828 187.6h1v1.25h-1zM1862 189.6h1v1.25h-1zM1813 193.6h2v1.25h-2zM1821 193.6h1v1.25h-1zM1797 195.6h1v1.25h-1zM1847 195.6h1v1.25h-1zM1801 219.6h1v1.25h-1zM1814 225.6h2v1.25h-2zM1848 225.6h2v1.25h-2zM1811 227.6h4v1.25h-4zM1818 227.6h4v1.25h-4zM1821 229.6h1v1.25h-1zM1826 231.6h2v1.25h-2zM1828 231.6h3v1.25h-3zM1836 231.6h3v1.25h-3zM1848 231.6h2v1.25h-2zM1824 233.6h2v1.25h-2zM1802 235.6h2v1.25h-2zM1816 235.6h2v1.25h-2zM1815 237.6h3v1.25h-3zM1827 237.6h3v1.25h-3zM1809 239.6h3v1.25h-3zM1860 239.6h4v1.25h-4zM1866 239.6h3v1.25h-3zM1815 243.6h3v1.25h-3zM1801 253.6h4v1.25h-4zM1806 253.6h1v1.25h-1zM1814 255.6h3v1.25h-3zM1817 255.6h1v1.25h-1zM1795 257.6h1v1.25h-1zM1801 261.6h3v1.25h-3zM1798 267.6h2v1.25h-2zM1800 267.6h1v1.25h-1zM1811 267.6h4v1.25h-4zM1815 267.6h1v1.25h-1zM1817 267.6h2v1.25h-2zM1797 273.6h3v1.25h-3zM1800 273.6h2v1.25h-2zM1817 273.6h4v1.25h-4zM1827 273.6h2v1.25h-2zM1831 273.6h1v1.25h-1zM1801 275.6h2v1.25h-2zM1804 275.6h2v1.25h-2zM1806 275.6h2v1.25h-2zM1821 275.6h2v1.25h-2zM1839 275.6h2v1.25h-2zM1800 277.6h3v1.25h-3zM1837 279.6h2v1.25h-2zM1840 279.6h3v1.25h-3zM1814 281.6h2v1.25h-2zM1797 285.6h3v1.25h-3zM1800 287.6h3v1.25h-3zM1821 289.6h3v1.25h-3zM1824 289.6h1v1.25h-1zM1797 291.6h3v1.25h-3zM1806 295.6h1v1.25h-1zM1810 295.6h2v1.25h-2zM1812 295.6h1v1.25h-1zM1801 299.6h2v1.25h-2zM1804 301.6h3v1.25h-3zM1799 305.6h4v1.25h-4zM1799 309.6h3v1.25h-3zM1808 309.6h1v1.25h-1zM1801 311.6h4v1.25h-4zM1806 313.6h4v1.25h-4zM1810 313.6h4v1.25h-4zM1827 319.6h3v1.25h-3zM1830 319.6h3v1.25h-3zM1805 321.6h2v1.25h-2zM1805 325.6h1v1.25h-1zM1826 333.6h1v1.25h-1zM1805 335.6h2v1.25h-2zM1805 341.6h4v1.25h-4zM1821 341.6h2v1.25h-2zM1849 341.6h2v1.25h-2zM1813 351.6h3v1.25h-3zM1819 351.6h2v1.25h-2zM1813 353.6h2v1.25h-2zM1870 353.6h1v1.25h-1zM1799 359.6h1v1.25h-1zM1807 363.6h3v1.25h-3zM1833 367.6h2v1.25h-2zM1851 367.6h3v1.25h-3zM1856 367.6h1v1.25h-1zM1806 369.6h3v1.25h-3zM1816 369.6h3v1.25h-3zM1846 375.6h3v1.25h-3zM1805 377.6h3v1.25h-3zM1810 377.6h1v1.25h-1zM1812 377.6h2v1.25h-2zM1817 379.6h2v1.25h-2zM1851 379.6h4v1.25h-4zM1858 379.6h1v1.25h-1zM1820 381.6h3v1.25h-3zM1805 389.6h3v1.25h-3zM1808 389.6h3v1.25h-3zM1813 389.6h1v1.25h-1zM1828 389.6h3v1.25h-3zM1831 389.6h1v1.25h-1zM1845 389.6h2v1.25h-2zM1805 395.6h1v1.25h-1zM1803 397.6h1v1.25h-1zM1800 403.6h3v1.25h-3zM1803 403.6h1v1.25h-1zM1807 405.6h3v1.25h-3zM1814 405.6h2v1.25h-2zM1849 405.6h3v1.25h-3zM1799 407.6h2v1.25h-2zM1801 407.6h3v1.25h-3zM1804 407.6h3v1.25h-3zM1824 407.6h2v1.25h-2zM1849 407.6h2v1.25h-2zM1851 407.6h4v1.25h-4zM1876 407.6h3v1.25h-3zM1799 409.6h2v1.25h-2zM1801 409.6h3v1.25h-3zM1822 409.6h4v1.25h-4zM1835 409.6h4v1.25h-4zM1825 411.6h2v1.25h-2zM1840 411.6h3v1.25h-3zM1845 411.6h2v1.25h-2zM1808 413.6h2v1.25h-2zM1810 413.6h3v1.25h-3zM1851 413.6h3v1.25h-3zM1861 413.6h3v1.25h-3zM1865 413.6h3v1.25h-3zM1871 413.6h3v1.25h-3zM1879 413.6h4v1.25h-4zM1816 415.6h2v1.25h-2zM1871 415.6h3v1.25h-3zM1874 415.6h1v1.25h-1zM1882 415.6h3v1.25h-3zM1827 417.6h2v1.25h-2zM1829 417.6h3v1.25h-3zM1854 417.6h2v1.25h-2zM1797 421.6h3v1.25h-3zM1800 421.6h2v1.25h-2zM1802 421.6h2v1.25h-2zM1804 421.6h1v1.25h-1zM1805 423.6h2v1.25h-2zM1801 425.6h1v1.25h-1zM1817 437.6h2v1.25h-2zM1834 437.6h3v1.25h-3zM1849 437.6h4v1.25h-4zM1823 439.6h3v1.25h-3zM1828 439.6h3v1.25h-3zM1852 439.6h2v1.25h-2zM1815 443.6h4v1.25h-4zM1823 443.6h3v1.25h-3zM1826 443.6h4v1.25h-4zM1825 445.6h4v1.25h-4zM1829 445.6h2v1.25h-2zM1826 461.6h2v1.25h-2zM1820 463.6h2v1.25h-2zM1821 469.6h4v1.25h-4zM1829 469.6h2v1.25h-2zM1831 479.6h4v1.25h-4zM1854 479.6h4v1.25h-4zM1862 479.6h2v1.25h-2zM1865 479.6h1v1.25h-1zM1825 481.6h2v1.25h-2zM1827 481.6h2v1.25h-2zM1854 483.6h3v1.25h-3zM1864 483.6h3v1.25h-3zM1812 485.6h4v1.25h-4zM1816 485.6h4v1.25h-4zM1820 485.6h1v1.25h-1zM1824 485.6h2v1.25h-2zM1832 485.6h3v1.25h-3zM1835 485.6h2v1.25h-2zM1832 487.6h4v1.25h-4zM1848 489.6h1v1.25h-1zM1807 495.6h1v1.25h-1zM1805 499.6h1v1.25h-1zM1818 505.6h4v1.25h-4zM1859 505.6h3v1.25h-3zM1807 507.6h2v1.25h-2zM1818 507.6h2v1.25h-2zM1813 509.6h2v1.25h-2zM1815 509.6h3v1.25h-3zM1854 509.6h2v1.25h-2zM1815 513.6h2v1.25h-2zM1816 515.6h4v1.25h-4zM1820 515.6h2v1.25h-2zM1807 521.6h1v1.25h-1zM1809 529.6h2v1.25h-2zM1848 531.6h3v1.25h-3zM1861 531.6h2v1.25h-2zM1825 533.6h3v1.25h-3zM1828 533.6h3v1.25h-3zM1850 535.6h2v1.25h-2zM1856 535.6h4v1.25h-4zM1807 543.6h1v1.25h-1zM1817 549.6h2v1.25h-2zM1822 549.6h2v1.25h-2zM1830 551.6h2v1.25h-2zM1855 551.6h3v1.25h-3zM1863 551.6h2v1.25h-2zM1812 553.6h2v1.25h-2zM1819 553.6h2v1.25h-2zM1821 553.6h4v1.25h-4zM1829 553.6h2v1.25h-2zM1847 555.6h2v1.25h-2zM1849 555.6h2v1.25h-2zM1817 557.6h4v1.25h-4zM1841 557.6h2v1.25h-2zM1843 557.6h3v1.25h-3zM1834 559.6h2v1.25h-2zM1836 559.6h1v1.25h-1zM1849 559.6h2v1.25h-2zM1807 561.6h3v1.25h-3zM1842 561.6h4v1.25h-4zM1846 561.6h2v1.25h-2zM1882 561.6h1v1.25h-1zM1888 561.6h2v1.25h-2zM1897 561.6h3v1.25h-3zM1805 563.6h1v1.25h-1zM1803 565.6h1v1.25h-1zM1802 587.6h2v1.25h-2zM1797 595.6h1v1.25h-1zM1799 601.6h2v1.25h-2zM1801 601.6h2v1.25h-2zM1803 601.6h3v1.25h-3zM1814 601.6h4v1.25h-4zM1818 601.6h1v1.25h-1zM1808 603.6h2v1.25h-2zM1822 603.6h1v1.25h-1zM1811 605.6h2v1.25h-2zM1815 609.6h1v1.25h-1zM1818 609.6h1v1.25h-1zM1797 611.6h1v1.25h-1zM1809 615.6h4v1.25h-4zM1813 617.6h3v1.25h-3zM1818 617.6h2v1.25h-2zM1799 623.6h3v1.25h-3zM1830 623.6h1v1.25h-1zM1805 631.6h3v1.25h-3zM1808 631.6h3v1.25h-3zM1815 631.6h1v1.25h-1zM1835 633.6h3v1.25h-3zM1803 635.6h2v1.25h-2zM1805 635.6h3v1.25h-3zM1803 639.6h4v1.25h-4zM1812 639.6h2v1.25h-2zM1814 639.6h3v1.25h-3zM1820 643.6h4v1.25h-4zM1803 645.6h2v1.25h-2zM1811 651.6h3v1.25h-3zM1815 651.6h4v1.25h-4zM1797 655.6h1v1.25h-1zM1822 665.6h1v1.25h-1zM1871 665.6h1v1.25h-1zM1809 667.6h4v1.25h-4zM1803 673.6h2v1.25h-2zM1807 673.6h2v1.25h-2zM1822 673.6h4v1.25h-4zM1795 683.6h1v1.25h-1zM1795 687.6h1v1.25h-1zM1811 689.6h3v1.25h-3zM1815 689.6h3v1.25h-3zM1818 689.6h3v1.25h-3zM1808 691.6h3v1.25h-3zM1811 691.6h2v1.25h-2zM1826 691.6h1v1.25h-1zM1795 695.6h1v1.25h-1zM1795 701.6h1v1.25h-1zM1809 703.6h3v1.25h-3zM1814 703.6h1v1.25h-1zM1812 705.6h2v1.25h-2zM1814 705.6h2v1.25h-2zM1816 705.6h4v1.25h-4zM1804 707.6h2v1.25h-2zM1795 711.6h1v1.25h-1zM1798 719.6h3v1.25h-3zM1820 721.6h4v1.25h-4zM1829 721.6h2v1.25h-2zM1831 721.6h4v1.25h-4zM1835 721.6h2v1.25h-2zM1816 731.6h2v1.25h-2zM1808 735.6h4v1.25h-4zM1816 735.6h3v1.25h-3zM1838 745.6h2v1.25h-2zM1798 751.6h4v1.25h-4zM1825 751.6h4v1.25h-4zM1848 751.6h2v1.25h-2zM1850 751.6h1v1.25h-1zM1806 753.6h2v1.25h-2zM1799 755.6h3v1.25h-3zM1826 755.6h2v1.25h-2zM1834 755.6h3v1.25h-3zM1841 755.6h3v1.25h-3zM1844 755.6h4v1.25h-4zM1848 755.6h1v1.25h-1zM1807 757.6h3v1.25h-3zM1835 757.6h1v1.25h-1zM1837 757.6h2v1.25h-2zM1842 757.6h2v1.25h-2zM1844 757.6h2v1.25h-2zM1803 759.6h2v1.25h-2zM1817 759.6h2v1.25h-2zM1823 759.6h1v1.25h-1zM1843 759.6h1v1.25h-1zM1854 761.6h3v1.25h-3zM1802 767.6h2v1.25h-2zM1812 767.6h2v1.25h-2zM1822 767.6h2v1.25h-2zM1824 767.6h2v1.25h-2zM1824 769.6h4v1.25h-4zM1807 771.6h2v1.25h-2zM1814 771.6h3v1.25h-3zM1817 771.6h4v1.25h-4zM1832 771.6h4v1.25h-4zM1836 771.6h2v1.25h-2zM1797 775.6h1v1.25h-1zM1797 781.6h2v1.25h-2zM1799 781.6h2v1.25h-2zM1801 781.6h1v1.25h-1zM1817 781.6h2v1.25h-2zM1820 781.6h2v1.25h-2zM1835 781.6h1v1.25h-1zM1851 781.6h3v1.25h-3zM1854 781.6h1v1.25h-1zM1833 789.6h2v1.25h-2zM1812 793.6h4v1.25h-4zM1826 793.6h3v1.25h-3zM1829 793.6h2v1.25h-2zM1818 797.6h4v1.25h-4zM1822 797.6h2v1.25h-2zM1848 797.6h2v1.25h-2zM1850 797.6h3v1.25h-3zM1803 799.6h3v1.25h-3zM1799 801.6h4v1.25h-4zM1805 801.6h3v1.25h-3zM1797 805.6h1v1.25h-1zM1795 807.6h1v1.25h-1zM1802 817.6h2v1.25h-2zM1821 817.6h3v1.25h-3zM1824 817.6h2v1.25h-2zM1826 817.6h2v1.25h-2zM1797 819.6h3v1.25h-3zM1838 831.6h2v1.25h-2zM1840 831.6h4v1.25h-4zM1844 831.6h3v1.25h-3zM1847 831.6h1v1.25h-1zM1811 845.6h2v1.25h-2zM1840 845.6h2v1.25h-2zM1842 845.6h2v1.25h-2zM1799 853.6h3v1.25h-3zM1814 855.6h3v1.25h-3zM1817 855.6h3v1.25h-3zM1801 857.6h2v1.25h-2zM1807 857.6h3v1.25h-3zM1799 861.6h2v1.25h-2zM1805 861.6h2v1.25h-2zM1807 861.6h2v1.25h-2zM1805 863.6h2v1.25h-2zM1807 863.6h1v1.25h-1zM1836 863.6h2v1.25h-2zM1838 863.6h4v1.25h-4zM1859 863.6h4v1.25h-4zM1863 863.6h2v1.25h-2zM1865 863.6h3v1.25h-3zM1880 863.6h3v1.25h-3zM1887 863.6h2v1.25h-2zM1901 863.6h2v1.25h-2zM1805 869.6h3v1.25h-3zM1804 871.6h3v1.25h-3zM1807 871.6h1v1.25h-1zM1809 871.6h3v1.25h-3zM1827 871.6h4v1.25h-4zM1816 875.6h1v1.25h-1zM1853 875.6h3v1.25h-3zM1856 875.6h3v1.25h-3zM1881 875.6h4v1.25h-4zM1885 875.6h2v1.25h-2zM1888 875.6h4v1.25h-4zM1815 887.6h4v1.25h-4zM1808 889.6h3v1.25h-3zM1812 889.6h3v1.25h-3zM1815 889.6h3v1.25h-3zM1818 889.6h2v1.25h-2zM1815 891.6h2v1.25h-2zM1825 897.6h3v1.25h-3zM1832 897.6h1v1.25h-1zM1834 897.6h4v1.25h-4zM1838 897.6h2v1.25h-2zM1845 897.6h2v1.25h-2zM1849 897.6h2v1.25h-2zM1840 899.6h2v1.25h-2zM1883 899.6h2v1.25h-2zM1888 899.6h4v1.25h-4zM1803 901.6h4v1.25h-4zM1807 901.6h3v1.25h-3zM1810 901.6h2v1.25h-2zM1824 901.6h2v1.25h-2zM1811 903.6h2v1.25h-2zM1815 907.6h1v1.25h-1zM1806 911.6h2v1.25h-2zM1824 911.6h2v1.25h-2zM1826 911.6h3v1.25h-3zM1849 911.6h2v1.25h-2zM1808 917.6h3v1.25h-3zM1812 917.6h2v1.25h-2zM1884 925.6h2v1.25h-2zM1886 925.6h2v1.25h-2zM1901 925.6h2v1.25h-2zM1824 927.6h1v1.25h-1zM1814 929.6h4v1.25h-4zM1805 939.6h1v1.25h-1zM1811 941.6h2v1.25h-2zM1820 941.6h3v1.25h-3zM1825 941.6h2v1.25h-2zM1801 943.6h3v1.25h-3zM1839 943.6h1v1.25h-1zM1832 945.6h3v1.25h-3zM1839 945.6h2v1.25h-2zM1844 945.6h3v1.25h-3zM1866 945.6h2v1.25h-2zM1868 945.6h3v1.25h-3zM1877 945.6h2v1.25h-2zM1809 947.6h3v1.25h-3zM1814 947.6h2v1.25h-2zM1811 949.6h2v1.25h-2zM1801 953.6h3v1.25h-3zM1816 969.6h2v1.25h-2zM1818 969.6h4v1.25h-4zM1826 969.6h4v1.25h-4zM1819 973.6h3v1.25h-3zM1822 973.6h2v1.25h-2zM1827 973.6h1v1.25h-1zM1810 977.6h2v1.25h-2zM1818 981.6h2v1.25h-2zM1801 983.6h2v1.25h-2zM1803 987.6h2v1.25h-2zM1797 991.6h1v1.25h-1zM1793 997.6h1v1.25h-1z"/>
<path fill="#d4d4d4" fill-opacity="0.45" d="M1832 129.6h1v1.25h-1zM1804 131.6h2v1.25h-2zM1797 133.6h1v1.25h-1zM1797 139.6h1v1.25h-1zM1805 139.6h2v1.25h-2zM1797 143.6h1v1.25h-1zM1816 145.6h2v1.25h-2zM1797 147.6h1v1.25h-1zM1818 147.6h2v1.25h-2zM1812 149.6h2v1.25h-2zM1810 151.6h2v1.25h-2zM1824 151.6h1v1.25h-1zM1797 163.6h1v1.25h-1zM1808 163.6h1v1.25h-1zM1803 165.6h2v1.25h-2zM1797 167.6h1v1.25h-1zM1797 169.6h1v1.25h-1zM1797 175.6h1v1.25h-1zM1813 175.6h2v1.25h-2zM1803 177.6h2v1.25h-2zM1801 185.6h2v1.25h-2zM1797 189.6h1v1.25h-1zM1803 189.6h2v1.25h-2zM1797 193.6h1v1.25h-1zM1808 225.6h4v1.25h-4zM1816 225.6h1v1.25h-1zM1900 225.6h3v1.25h-3zM1797 227.6h2v1.25h-2zM1799 227.6h2v1.25h-2zM1826 227.6h1v1.25h-1zM1800 231.6h2v1.25h-2zM1822 231.6h4v1.25h-4zM1842 231.6h3v1.25h-3zM1845 231.6h3v1.25h-3zM1826 233.6h3v1.25h-3zM1829 233.6h4v1.25h-4zM1834 233.6h3v1.25h-3zM1812 235.6h2v1.25h-2zM1814 235.6h1v1.25h-1zM1809 237.6h2v1.25h-2zM1812 239.6h3v1.25h-3zM1820 239.6h4v1.25h-4zM1864 239.6h2v1.25h-2zM1798 243.6h3v1.25h-3zM1809 243.6h4v1.25h-4zM1813 243.6h2v1.25h-2zM1812 255.6h2v1.25h-2zM1793 257.6h2v1.25h-2zM1797 257.6h2v1.25h-2zM1800 257.6h2v1.25h-2zM1802 257.6h2v1.25h-2zM1804 257.6h2v1.25h-2zM1795 261.6h2v1.25h-2zM1797 261.6h4v1.25h-4zM1806 261.6h2v1.25h-2zM1795 263.6h3v1.25h-3zM1793 265.6h2v1.25h-2zM1793 267.6h3v1.25h-3zM1802 273.6h3v1.25h-3zM1822 273.6h2v1.25h-2zM1808 275.6h2v1.25h-2zM1835 275.6h4v1.25h-4zM1857 275.6h2v1.25h-2zM1865 275.6h2v1.25h-2zM1797 277.6h2v1.25h-2zM1803 277.6h2v1.25h-2zM1828 279.6h1v1.25h-1zM1833 279.6h1v1.25h-1zM1834 279.6h3v1.25h-3zM1797 295.6h2v1.25h-2zM1807 295.6h3v1.25h-3zM1804 297.6h4v1.25h-4zM1797 303.6h2v1.25h-2zM1806 305.6h2v1.25h-2zM1799 307.6h3v1.25h-3zM1805 307.6h2v1.25h-2zM1807 307.6h1v1.25h-1zM1808 307.6h4v1.25h-4zM1814 307.6h2v1.25h-2zM1805 311.6h2v1.25h-2zM1812 311.6h1v1.25h-1zM1813 317.6h3v1.25h-3zM1827 317.6h1v1.25h-1zM1818 319.6h4v1.25h-4zM1822 319.6h2v1.25h-2zM1803 329.6h2v1.25h-2zM1808 331.6h4v1.25h-4zM1822 333.6h4v1.25h-4zM1819 341.6h2v1.25h-2zM1852 341.6h3v1.25h-3zM1863 341.6h3v1.25h-3zM1818 345.6h2v1.25h-2zM1816 351.6h2v1.25h-2zM1834 351.6h3v1.25h-3zM1815 353.6h1v1.25h-1zM1865 353.6h4v1.25h-4zM1803 367.6h2v1.25h-2zM1830 367.6h3v1.25h-3zM1836 367.6h2v1.25h-2zM1866 367.6h3v1.25h-3zM1813 369.6h3v1.25h-3zM1846 369.6h2v1.25h-2zM1848 369.6h2v1.25h-2zM1861 369.6h4v1.25h-4zM1808 377.6h2v1.25h-2zM1815 377.6h3v1.25h-3zM1818 377.6h2v1.25h-2zM1831 379.6h3v1.25h-3zM1834 379.6h1v1.25h-1zM1855 379.6h3v1.25h-3zM1859 379.6h3v1.25h-3zM1816 381.6h4v1.25h-4zM1805 383.6h2v1.25h-2zM1811 389.6h2v1.25h-2zM1847 389.6h1v1.25h-1zM1843 391.6h1v1.25h-1zM1816 393.6h3v1.25h-3zM1799 405.6h4v1.25h-4zM1816 405.6h1v1.25h-1zM1812 407.6h3v1.25h-3zM1858 407.6h3v1.25h-3zM1839 409.6h4v1.25h-4zM1850 409.6h4v1.25h-4zM1855 409.6h2v1.25h-2zM1813 411.6h3v1.25h-3zM1843 411.6h2v1.25h-2zM1842 413.6h4v1.25h-4zM1846 413.6h3v1.25h-3zM1849 413.6h1v1.25h-1zM1854 413.6h2v1.25h-2zM1856 413.6h4v1.25h-4zM1874 413.6h2v1.25h-2zM1883 413.6h2v1.25h-2zM1809 415.6h3v1.25h-3zM1812 415.6h4v1.25h-4zM1818 415.6h1v1.25h-1zM1833 415.6h4v1.25h-4zM1837 415.6h1v1.25h-1zM1849 415.6h4v1.25h-4zM1861 415.6h2v1.25h-2zM1876 415.6h3v1.25h-3zM1886 415.6h1v1.25h-1zM1847 417.6h3v1.25h-3zM1850 417.6h4v1.25h-4zM1856 417.6h3v1.25h-3zM1876 417.6h3v1.25h-3zM1797 419.6h1v1.25h-1zM1803 429.6h1v1.25h-1zM1821 435.6h2v1.25h-2zM1823 435.6h4v1.25h-4zM1827 435.6h2v1.25h-2zM1819 437.6h2v1.25h-2zM1837 437.6h3v1.25h-3zM1853 437.6h3v1.25h-3zM1807 439.6h4v1.25h-4zM1811 439.6h4v1.25h-4zM1826 439.6h2v1.25h-2zM1831 439.6h1v1.25h-1zM1846 439.6h3v1.25h-3zM1849 439.6h3v1.25h-3zM1830 443.6h1v1.25h-1zM1834 443.6h2v1.25h-2zM1836 443.6h3v1.25h-3zM1839 443.6h2v1.25h-2zM1807 451.6h1v1.25h-1zM1805 453.6h1v1.25h-1zM1830 461.6h1v1.25h-1zM1817 463.6h3v1.25h-3zM1835 463.6h3v1.25h-3zM1836 465.6h3v1.25h-3zM1839 465.6h2v1.25h-2zM1803 473.6h1v1.25h-1zM1829 479.6h2v1.25h-2zM1821 481.6h3v1.25h-3zM1829 481.6h2v1.25h-2zM1848 483.6h3v1.25h-3zM1852 483.6h2v1.25h-2zM1821 487.6h4v1.25h-4zM1825 487.6h4v1.25h-4zM1812 493.6h3v1.25h-3zM1815 493.6h3v1.25h-3zM1814 505.6h4v1.25h-4zM1843 505.6h2v1.25h-2zM1847 505.6h3v1.25h-3zM1850 505.6h1v1.25h-1zM1813 507.6h3v1.25h-3zM1816 507.6h1v1.25h-1zM1821 507.6h3v1.25h-3zM1827 507.6h3v1.25h-3zM1856 509.6h2v1.25h-2zM1807 511.6h4v1.25h-4zM1811 511.6h2v1.25h-2zM1813 511.6h3v1.25h-3zM1839 513.6h2v1.25h-2zM1822 515.6h4v1.25h-4zM1809 517.6h2v1.25h-2zM1803 527.6h1v1.25h-1zM1824 531.6h3v1.25h-3zM1827 531.6h3v1.25h-3zM1832 531.6h2v1.25h-2zM1840 531.6h1v1.25h-1zM1851 531.6h1v1.25h-1zM1867 531.6h3v1.25h-3zM1870 531.6h1v1.25h-1zM1810 533.6h2v1.25h-2zM1829 535.6h2v1.25h-2zM1842 535.6h2v1.25h-2zM1852 535.6h4v1.25h-4zM1805 545.6h1v1.25h-1zM1819 549.6h3v1.25h-3zM1832 551.6h3v1.25h-3zM1865 551.6h1v1.25h-1zM1808 553.6h4v1.25h-4zM1814 553.6h1v1.25h-1zM1836 555.6h3v1.25h-3zM1815 557.6h2v1.25h-2zM1847 557.6h4v1.25h-4zM1832 559.6h2v1.25h-2zM1861 559.6h1v1.25h-1zM1867 559.6h2v1.25h-2zM1880 561.6h2v1.25h-2zM1894 561.6h3v1.25h-3zM1801 571.6h1v1.25h-1zM1799 575.6h2v1.25h-2zM1808 577.6h2v1.25h-2zM1814 579.6h2v1.25h-2zM1795 587.6h3v1.25h-3zM1798 587.6h2v1.25h-2zM1800 587.6h2v1.25h-2zM1804 587.6h3v1.25h-3zM1807 587.6h2v1.25h-2zM1807 593.6h1v1.25h-1zM1809 593.6h3v1.25h-3zM1803 597.6h2v1.25h-2zM1803 599.6h2v1.25h-2zM1806 601.6h2v1.25h-2zM1818 607.6h3v1.25h-3zM1813 609.6h2v1.25h-2zM1816 609.6h2v1.25h-2zM1808 617.6h2v1.25h-2zM1810 617.6h3v1.25h-3zM1816 617.6h2v1.25h-2zM1797 619.6h1v1.25h-1zM1802 623.6h4v1.25h-4zM1806 623.6h1v1.25h-1zM1826 623.6h4v1.25h-4zM1797 629.6h4v1.25h-4zM1802 629.6h1v1.25h-1zM1838 633.6h2v1.25h-2zM1840 633.6h2v1.25h-2zM1842 633.6h1v1.25h-1zM1801 635.6h2v1.25h-2zM1808 635.6h2v1.25h-2zM1817 639.6h2v1.25h-2zM1810 641.6h2v1.25h-2zM1828 643.6h2v1.25h-2zM1801 647.6h2v1.25h-2zM1807 651.6h4v1.25h-4zM1814 651.6h1v1.25h-1zM1799 653.6h1v1.25h-1zM1810 665.6h2v1.25h-2zM1812 665.6h3v1.25h-3zM1815 665.6h2v1.25h-2zM1818 665.6h2v1.25h-2zM1820 665.6h2v1.25h-2zM1872 665.6h2v1.25h-2zM1874 665.6h1v1.25h-1zM1797 671.6h1v1.25h-1zM1800 673.6h3v1.25h-3zM1805 673.6h2v1.25h-2zM1826 673.6h3v1.25h-3zM1802 675.6h3v1.25h-3zM1797 681.6h1v1.25h-1zM1802 689.6h2v1.25h-2zM1808 689.6h3v1.25h-3zM1806 691.6h2v1.25h-2zM1819 691.6h2v1.25h-2zM1812 703.6h1v1.25h-1zM1808 705.6h4v1.25h-4zM1821 705.6h3v1.25h-3zM1834 705.6h1v1.25h-1zM1795 709.6h1v1.25h-1zM1797 713.6h1v1.25h-1zM1795 717.6h1v1.25h-1zM1837 721.6h1v1.25h-1zM1839 721.6h2v1.25h-2zM1841 721.6h2v1.25h-2zM1809 723.6h3v1.25h-3zM1797 725.6h1v1.25h-1zM1818 731.6h2v1.25h-2zM1822 731.6h3v1.25h-3zM1807 733.6h3v1.25h-3zM1812 735.6h3v1.25h-3zM1819 735.6h3v1.25h-3zM1840 735.6h3v1.25h-3zM1797 741.6h1v1.25h-1zM1802 751.6h2v1.25h-2zM1804 751.6h4v1.25h-4zM1822 751.6h2v1.25h-2zM1838 751.6h4v1.25h-4zM1802 753.6h4v1.25h-4zM1809 753.6h3v1.25h-3zM1812 753.6h1v1.25h-1zM1828 755.6h1v1.25h-1zM1830 755.6h4v1.25h-4zM1839 755.6h1v1.25h-1zM1813 757.6h3v1.25h-3zM1830 757.6h2v1.25h-2zM1832 757.6h3v1.25h-3zM1839 757.6h3v1.25h-3zM1819 759.6h4v1.25h-4zM1841 759.6h2v1.25h-2zM1849 759.6h2v1.25h-2zM1797 763.6h1v1.25h-1zM1809 767.6h3v1.25h-3zM1828 769.6h2v1.25h-2zM1830 769.6h2v1.25h-2zM1801 771.6h3v1.25h-3zM1804 771.6h3v1.25h-3zM1803 781.6h3v1.25h-3zM1809 781.6h1v1.25h-1zM1815 781.6h2v1.25h-2zM1823 781.6h4v1.25h-4zM1827 781.6h1v1.25h-1zM1847 781.6h4v1.25h-4zM1795 785.6h1v1.25h-1zM1822 789.6h2v1.25h-2zM1824 789.6h3v1.25h-3zM1827 789.6h2v1.25h-2zM1830 789.6h2v1.25h-2zM1837 789.6h2v1.25h-2zM1848 789.6h1v1.25h-1zM1819 793.6h2v1.25h-2zM1824 797.6h2v1.25h-2zM1828 797.6h4v1.25h-4zM1803 801.6h2v1.25h-2zM1800 817.6h2v1.25h-2zM1795 821.6h1v1.25h-1zM1853 831.6h1v1.25h-1zM1795 837.6h1v1.25h-1zM1804 845.6h3v1.25h-3zM1807 845.6h4v1.25h-4zM1822 845.6h2v1.25h-2zM1834 845.6h2v1.25h-2zM1836 845.6h2v1.25h-2zM1838 845.6h2v1.25h-2zM1845 845.6h4v1.25h-4zM1810 853.6h1v1.25h-1zM1809 861.6h2v1.25h-2zM1811 861.6h2v1.25h-2zM1809 863.6h4v1.25h-4zM1813 863.6h2v1.25h-2zM1827 863.6h3v1.25h-3zM1830 863.6h4v1.25h-4zM1834 863.6h1v1.25h-1zM1868 863.6h2v1.25h-2zM1894 863.6h4v1.25h-4zM1808 869.6h2v1.25h-2zM1801 871.6h3v1.25h-3zM1832 871.6h2v1.25h-2zM1834 871.6h2v1.25h-2zM1859 875.6h2v1.25h-2zM1866 875.6h4v1.25h-4zM1872 875.6h4v1.25h-4zM1803 877.6h2v1.25h-2zM1817 877.6h2v1.25h-2zM1812 887.6h3v1.25h-3zM1803 889.6h2v1.25h-2zM1805 889.6h3v1.25h-3zM1825 889.6h3v1.25h-3zM1832 889.6h3v1.25h-3zM1828 897.6h1v1.25h-1zM1830 897.6h2v1.25h-2zM1841 897.6h4v1.25h-4zM1851 897.6h2v1.25h-2zM1842 899.6h3v1.25h-3zM1885 899.6h2v1.25h-2zM1813 901.6h2v1.25h-2zM1820 901.6h4v1.25h-4zM1813 903.6h1v1.25h-1zM1809 907.6h4v1.25h-4zM1801 911.6h2v1.25h-2zM1822 911.6h2v1.25h-2zM1803 915.6h2v1.25h-2zM1811 917.6h1v1.25h-1zM1814 917.6h2v1.25h-2zM1833 921.6h2v1.25h-2zM1836 921.6h4v1.25h-4zM1809 925.6h2v1.25h-2zM1818 925.6h4v1.25h-4zM1827 925.6h4v1.25h-4zM1831 925.6h2v1.25h-2zM1834 925.6h3v1.25h-3zM1859 925.6h4v1.25h-4zM1813 927.6h4v1.25h-4zM1807 931.6h4v1.25h-4zM1825 933.6h3v1.25h-3zM1831 933.6h4v1.25h-4zM1802 939.6h3v1.25h-3zM1813 941.6h3v1.25h-3zM1823 941.6h2v1.25h-2zM1804 943.6h1v1.25h-1zM1808 943.6h2v1.25h-2zM1814 943.6h1v1.25h-1zM1832 943.6h4v1.25h-4zM1835 945.6h1v1.25h-1zM1837 945.6h2v1.25h-2zM1847 945.6h4v1.25h-4zM1859 945.6h2v1.25h-2zM1861 945.6h2v1.25h-2zM1805 947.6h4v1.25h-4zM1812 947.6h1v1.25h-1zM1804 953.6h1v1.25h-1zM1801 969.6h2v1.25h-2zM1814 969.6h2v1.25h-2zM1823 969.6h3v1.25h-3zM1809 973.6h4v1.25h-4zM1824 973.6h3v1.25h-3zM1827 983.6h2v1.25h-2zM1834 983.6h1v1.25h-1zM1799 987.6h4v1.25h-4zM1806 987.6h1v1.25h-1zM1795 993.6h1v1.25h-1z"/>
<path fill="#ce9178" fill-opacity="0.7" d="M1815 117.6h2v1.25h-2zM1817 117.6h2v1.25h-2zM1832 117.6h1v1.25h-1zM1811 189.6h3v1.25h-3zM1823 189.6h4v1.25h-4zM1829 189.6h4v1.25h-4zM1837 189.6h4v1.25h-4zM1841 189.6h2v1.25h-2zM1855 189.6h4v1.25h-4zM1816 205.6h2v1.25h-2zM1819 205.6h3v1.25h-3zM1836 211.6h2v1.25h-2zM1830 213.6h4v1.25h-4zM1802 217.6h3v1.25h-3zM1810 217.6h1v1.25h-1zM1872 225.6h4v1.25h-4zM1880 225.6h3v1.25h-3zM1892 225.6h2v1.25h-2zM1823 229.6h4v1.25h-4zM1878 231.6h1v1.25h-1zM1870 239.6h4v1.25h-4zM1875 239.6h2v1.25h-2zM1820 249.6h3v1.25h-3zM1806 255.6h3v1.25h-3zM1809 255.6h2v1.25h-2zM1867 275.6h4v1.25h-4zM1810 279.6h3v1.25h-3zM1846 279.6h1v1.25h-1zM1848 279.6h4v1.25h-4zM1852 279.6h2v1.25h-2zM1801 289.6h4v1.25h-4zM1805 289.6h1v1.25h-1zM1809 289.6h2v1.25h-2zM1814 291.6h4v1.25h-4zM1818 291.6h2v1.25h-2zM1820 291.6h1v1.25h-1zM1814 297.6h3v1.25h-3zM1817 297.6h3v1.25h-3zM1820 297.6h4v1.25h-4zM1800 303.6h2v1.25h-2zM1824 341.6h2v1.25h-2zM1831 341.6h1v1.25h-1zM1839 341.6h4v1.25h-4zM1843 341.6h2v1.25h-2zM1846 341.6h2v1.25h-2zM1859 341.6h3v1.25h-3zM1836 345.6h3v1.25h-3zM1808 351.6h3v1.25h-3zM1811 351.6h1v1.25h-1zM1846 351.6h1v1.25h-1zM1852 351.6h4v1.25h-4zM1856 351.6h4v1.25h-4zM1860 351.6h1v1.25h-1zM1862 351.6h4v1.25h-4zM1822 353.6h2v1.25h-2zM1826 353.6h1v1.25h-1zM1826 369.6h3v1.25h-3zM1853 369.6h4v1.25h-4zM1866 369.6h3v1.25h-3zM1874 369.6h2v1.25h-2zM1876 369.6h3v1.25h-3zM1838 375.6h3v1.25h-3zM1850 379.6h1v1.25h-1zM1834 381.6h3v1.25h-3zM1832 389.6h2v1.25h-2zM1837 389.6h2v1.25h-2zM1839 389.6h2v1.25h-2zM1821 405.6h3v1.25h-3zM1833 405.6h2v1.25h-2zM1846 405.6h2v1.25h-2zM1846 407.6h2v1.25h-2zM1813 409.6h2v1.25h-2zM1856 411.6h3v1.25h-3zM1879 411.6h2v1.25h-2zM1820 415.6h3v1.25h-3zM1846 415.6h3v1.25h-3zM1864 415.6h2v1.25h-2zM1865 417.6h3v1.25h-3zM1874 417.6h1v1.25h-1zM1815 427.6h2v1.25h-2zM1814 437.6h2v1.25h-2zM1824 437.6h4v1.25h-4zM1828 437.6h2v1.25h-2zM1845 437.6h3v1.25h-3zM1818 449.6h1v1.25h-1zM1811 459.6h3v1.25h-3zM1814 459.6h2v1.25h-2zM1832 463.6h2v1.25h-2zM1843 463.6h2v1.25h-2zM1857 463.6h2v1.25h-2zM1807 465.6h4v1.25h-4zM1813 465.6h2v1.25h-2zM1846 465.6h4v1.25h-4zM1805 479.6h3v1.25h-3zM1812 479.6h2v1.25h-2zM1840 479.6h2v1.25h-2zM1814 483.6h2v1.25h-2zM1816 483.6h3v1.25h-3zM1858 483.6h3v1.25h-3zM1840 485.6h4v1.25h-4zM1818 493.6h1v1.25h-1zM1815 503.6h2v1.25h-2zM1824 505.6h4v1.25h-4zM1828 505.6h3v1.25h-3zM1852 505.6h4v1.25h-4zM1863 509.6h4v1.25h-4zM1833 511.6h1v1.25h-1zM1816 531.6h2v1.25h-2zM1846 531.6h2v1.25h-2zM1820 535.6h2v1.25h-2zM1827 535.6h2v1.25h-2zM1839 535.6h2v1.25h-2zM1813 537.6h4v1.25h-4zM1850 537.6h3v1.25h-3zM1859 537.6h1v1.25h-1zM1863 537.6h3v1.25h-3zM1843 539.6h4v1.25h-4zM1847 539.6h2v1.25h-2zM1834 549.6h1v1.25h-1zM1809 551.6h4v1.25h-4zM1807 557.6h2v1.25h-2zM1809 557.6h2v1.25h-2zM1830 561.6h2v1.25h-2zM1833 561.6h4v1.25h-4zM1837 561.6h3v1.25h-3zM1840 561.6h1v1.25h-1zM1857 561.6h4v1.25h-4zM1874 561.6h3v1.25h-3zM1804 605.6h2v1.25h-2zM1806 607.6h3v1.25h-3zM1810 607.6h2v1.25h-2zM1814 607.6h3v1.25h-3zM1843 617.6h1v1.25h-1zM1809 623.6h2v1.25h-2zM1823 623.6h2v1.25h-2zM1829 633.6h2v1.25h-2zM1831 633.6h3v1.25h-3zM1844 633.6h4v1.25h-4zM1848 633.6h2v1.25h-2zM1850 633.6h2v1.25h-2zM1846 665.6h4v1.25h-4zM1854 665.6h2v1.25h-2zM1861 665.6h3v1.25h-3zM1807 669.6h2v1.25h-2zM1809 669.6h4v1.25h-4zM1832 669.6h1v1.25h-1zM1838 669.6h2v1.25h-2zM1799 679.6h3v1.25h-3zM1803 679.6h2v1.25h-2zM1831 691.6h4v1.25h-4zM1842 691.6h3v1.25h-3zM1797 705.6h4v1.25h-4zM1830 705.6h3v1.25h-3zM1851 721.6h2v1.25h-2zM1825 735.6h4v1.25h-4zM1829 735.6h2v1.25h-2zM1805 755.6h3v1.25h-3zM1850 755.6h1v1.25h-1zM1823 757.6h3v1.25h-3zM1826 757.6h3v1.25h-3zM1829 757.6h1v1.25h-1zM1828 759.6h3v1.25h-3zM1838 759.6h2v1.25h-2zM1848 759.6h1v1.25h-1zM1830 761.6h3v1.25h-3zM1833 761.6h3v1.25h-3zM1836 761.6h2v1.25h-2zM1839 761.6h2v1.25h-2zM1838 767.6h3v1.25h-3zM1841 767.6h4v1.25h-4zM1845 767.6h2v1.25h-2zM1835 769.6h3v1.25h-3zM1820 773.6h2v1.25h-2zM1846 793.6h4v1.25h-4zM1850 793.6h3v1.25h-3zM1856 793.6h2v1.25h-2zM1835 797.6h2v1.25h-2zM1840 797.6h2v1.25h-2zM1842 797.6h3v1.25h-3zM1805 833.6h3v1.25h-3zM1817 833.6h2v1.25h-2zM1826 833.6h2v1.25h-2zM1835 833.6h2v1.25h-2zM1839 833.6h3v1.25h-3zM1876 863.6h3v1.25h-3zM1799 869.6h3v1.25h-3zM1843 871.6h3v1.25h-3zM1846 871.6h3v1.25h-3zM1803 873.6h4v1.25h-4zM1809 877.6h4v1.25h-4zM1813 877.6h2v1.25h-2zM1809 879.6h1v1.25h-1zM1815 879.6h2v1.25h-2zM1804 881.6h1v1.25h-1zM1846 887.6h4v1.25h-4zM1857 887.6h2v1.25h-2zM1831 899.6h4v1.25h-4zM1835 899.6h3v1.25h-3zM1838 899.6h1v1.25h-1zM1848 899.6h1v1.25h-1zM1826 901.6h2v1.25h-2zM1809 911.6h3v1.25h-3zM1814 911.6h2v1.25h-2zM1837 911.6h3v1.25h-3zM1847 911.6h1v1.25h-1zM1805 913.6h3v1.25h-3zM1801 919.6h3v1.25h-3zM1821 919.6h3v1.25h-3zM1848 925.6h4v1.25h-4zM1864 925.6h2v1.25h-2zM1840 943.6h4v1.25h-4zM1803 945.6h4v1.25h-4zM1824 945.6h3v1.25h-3zM1829 945.6h2v1.25h-2zM1856 945.6h2v1.25h-2zM1889 945.6h1v1.25h-1zM1902 945.6h1v1.25h-1zM1821 947.6h1v1.25h-1zM1814 955.6h4v1.25h-4zM1805 969.6h3v1.25h-3zM1835 973.6h3v1.25h-3zM1815 979.6h3v1.25h-3z"/>
<path fill="#ce9178" fill-opacity="0.58" d="M1819 117.6h1v1.25h-1zM1830 117.6h2v1.25h-2zM1804 121.6h3v1.25h-3zM1818 189.6h2v1.25h-2zM1833 189.6h4v1.25h-4zM1843 189.6h4v1.25h-4zM1847 189.6h3v1.25h-3zM1852 189.6h3v1.25h-3zM1859 189.6h2v1.25h-2zM1840 211.6h2v1.25h-2zM1826 213.6h4v1.25h-4zM1808 217.6h2v1.25h-2zM1885 225.6h1v1.25h-1zM1890 225.6h2v1.25h-2zM1875 231.6h3v1.25h-3zM1833 273.6h1v1.25h-1zM1872 275.6h3v1.25h-3zM1806 279.6h4v1.25h-4zM1816 279.6h3v1.25h-3zM1819 279.6h3v1.25h-3zM1844 279.6h2v1.25h-2zM1797 289.6h4v1.25h-4zM1811 289.6h1v1.25h-1zM1812 289.6h4v1.25h-4zM1814 295.6h2v1.25h-2zM1804 299.6h4v1.25h-4zM1801 313.6h4v1.25h-4zM1838 319.6h2v1.25h-2zM1819 339.6h2v1.25h-2zM1821 339.6h2v1.25h-2zM1823 339.6h2v1.25h-2zM1815 341.6h3v1.25h-3zM1826 341.6h2v1.25h-2zM1805 351.6h3v1.25h-3zM1842 351.6h4v1.25h-4zM1809 353.6h3v1.25h-3zM1850 353.6h3v1.25h-3zM1853 353.6h3v1.25h-3zM1859 367.6h4v1.25h-4zM1863 367.6h2v1.25h-2zM1831 369.6h2v1.25h-2zM1857 369.6h4v1.25h-4zM1869 369.6h4v1.25h-4zM1841 375.6h1v1.25h-1zM1843 375.6h2v1.25h-2zM1842 379.6h2v1.25h-2zM1844 379.6h3v1.25h-3zM1834 389.6h3v1.25h-3zM1849 389.6h2v1.25h-2zM1823 393.6h3v1.25h-3zM1829 405.6h4v1.25h-4zM1836 405.6h3v1.25h-3zM1839 405.6h2v1.25h-2zM1850 411.6h4v1.25h-4zM1871 411.6h4v1.25h-4zM1866 415.6h1v1.25h-1zM1824 417.6h2v1.25h-2zM1868 417.6h3v1.25h-3zM1858 437.6h2v1.25h-2zM1860 437.6h4v1.25h-4zM1819 439.6h2v1.25h-2zM1833 439.6h2v1.25h-2zM1830 463.6h2v1.25h-2zM1839 463.6h4v1.25h-4zM1859 463.6h4v1.25h-4zM1811 465.6h2v1.25h-2zM1861 483.6h1v1.25h-1zM1844 485.6h3v1.25h-3zM1807 505.6h3v1.25h-3zM1810 505.6h3v1.25h-3zM1856 505.6h2v1.25h-2zM1859 509.6h2v1.25h-2zM1868 509.6h1v1.25h-1zM1830 511.6h3v1.25h-3zM1839 515.6h4v1.25h-4zM1843 515.6h1v1.25h-1zM1845 515.6h3v1.25h-3zM1848 515.6h1v1.25h-1zM1809 537.6h4v1.25h-4zM1854 537.6h2v1.25h-2zM1807 539.6h3v1.25h-3zM1829 549.6h2v1.25h-2zM1813 551.6h2v1.25h-2zM1844 551.6h2v1.25h-2zM1811 557.6h1v1.25h-1zM1813 557.6h2v1.25h-2zM1834 557.6h3v1.25h-3zM1861 561.6h2v1.25h-2zM1870 561.6h4v1.25h-4zM1901 561.6h2v1.25h-2zM1817 599.6h3v1.25h-3zM1811 603.6h3v1.25h-3zM1814 603.6h2v1.25h-2zM1804 607.6h2v1.25h-2zM1812 607.6h2v1.25h-2zM1799 609.6h2v1.25h-2zM1801 609.6h4v1.25h-4zM1834 617.6h4v1.25h-4zM1827 633.6h2v1.25h-2zM1817 641.6h2v1.25h-2zM1820 641.6h2v1.25h-2zM1831 643.6h2v1.25h-2zM1850 665.6h4v1.25h-4zM1857 665.6h4v1.25h-4zM1799 669.6h2v1.25h-2zM1830 669.6h2v1.25h-2zM1809 677.6h2v1.25h-2zM1805 679.6h4v1.25h-4zM1815 691.6h3v1.25h-3zM1839 691.6h3v1.25h-3zM1825 705.6h3v1.25h-3zM1846 721.6h2v1.25h-2zM1831 735.6h2v1.25h-2zM1840 745.6h4v1.25h-4zM1844 745.6h1v1.25h-1zM1808 755.6h2v1.25h-2zM1831 759.6h4v1.25h-4zM1836 759.6h2v1.25h-2zM1845 759.6h3v1.25h-3zM1841 761.6h2v1.25h-2zM1849 761.6h1v1.25h-1zM1826 771.6h1v1.25h-1zM1828 771.6h3v1.25h-3zM1816 773.6h4v1.25h-4zM1858 793.6h1v1.25h-1zM1803 833.6h1v1.25h-1zM1808 833.6h3v1.25h-3zM1822 833.6h4v1.25h-4zM1828 833.6h4v1.25h-4zM1832 833.6h2v1.25h-2zM1837 833.6h2v1.25h-2zM1842 833.6h1v1.25h-1zM1808 835.6h2v1.25h-2zM1811 857.6h2v1.25h-2zM1874 863.6h1v1.25h-1zM1802 869.6h2v1.25h-2zM1811 869.6h2v1.25h-2zM1814 869.6h1v1.25h-1zM1849 871.6h1v1.25h-1zM1855 871.6h2v1.25h-2zM1857 871.6h2v1.25h-2zM1819 873.6h2v1.25h-2zM1806 877.6h3v1.25h-3zM1811 879.6h4v1.25h-4zM1817 879.6h1v1.25h-1zM1818 879.6h3v1.25h-3zM1851 887.6h2v1.25h-2zM1821 889.6h2v1.25h-2zM1822 899.6h4v1.25h-4zM1846 899.6h2v1.25h-2zM1864 899.6h3v1.25h-3zM1867 899.6h4v1.25h-4zM1893 899.6h4v1.25h-4zM1828 901.6h3v1.25h-3zM1807 903.6h3v1.25h-3zM1812 911.6h2v1.25h-2zM1833 911.6h4v1.25h-4zM1803 913.6h2v1.25h-2zM1811 913.6h2v1.25h-2zM1820 913.6h1v1.25h-1zM1804 919.6h2v1.25h-2zM1816 919.6h2v1.25h-2zM1824 919.6h1v1.25h-1zM1847 921.6h3v1.25h-3zM1854 925.6h4v1.25h-4zM1866 925.6h3v1.25h-3zM1878 925.6h2v1.25h-2zM1818 945.6h2v1.25h-2zM1821 945.6h3v1.25h-3zM1827 945.6h2v1.25h-2zM1854 945.6h2v1.25h-2zM1880 945.6h2v1.25h-2zM1882 945.6h4v1.25h-4zM1886 945.6h3v1.25h-3zM1891 945.6h4v1.25h-4zM1806 963.6h3v1.25h-3zM1808 969.6h4v1.25h-4zM1812 969.6h2v1.25h-2zM1829 973.6h2v1.25h-2zM1831 973.6h4v1.25h-4zM1839 973.6h2v1.25h-2z"/>
<path fill="#ce9178" fill-opacity="0.45" d="M1827 117.6h3v1.25h-3zM1801 121.6h3v1.25h-3zM1808 189.6h3v1.25h-3zM1814 189.6h4v1.25h-4zM1820 189.6h3v1.25h-3zM1827 189.6h2v1.25h-2zM1850 189.6h2v1.25h-2zM1833 211.6h3v1.25h-3zM1838 211.6h2v1.25h-2zM1806 217.6h2v1.25h-2zM1877 225.6h2v1.25h-2zM1883 225.6h2v1.25h-2zM1894 225.6h3v1.25h-3zM1897 225.6h3v1.25h-3zM1827 229.6h1v1.25h-1zM1831 237.6h4v1.25h-4zM1835 237.6h1v1.25h-1zM1805 273.6h4v1.25h-4zM1809 273.6h2v1.25h-2zM1813 279.6h2v1.25h-2zM1822 279.6h3v1.25h-3zM1807 289.6h2v1.25h-2zM1816 289.6h2v1.25h-2zM1811 297.6h3v1.25h-3zM1805 313.6h1v1.25h-1zM1834 319.6h4v1.25h-4zM1805 339.6h2v1.25h-2zM1807 339.6h4v1.25h-4zM1813 341.6h2v1.25h-2zM1828 341.6h3v1.25h-3zM1856 341.6h3v1.25h-3zM1839 345.6h2v1.25h-2zM1840 351.6h2v1.25h-2zM1848 351.6h3v1.25h-3zM1866 351.6h2v1.25h-2zM1805 353.6h4v1.25h-4zM1824 353.6h2v1.25h-2zM1842 353.6h4v1.25h-4zM1846 353.6h3v1.25h-3zM1857 367.6h2v1.25h-2zM1829 369.6h2v1.25h-2zM1833 369.6h1v1.25h-1zM1879 369.6h2v1.25h-2zM1881 369.6h1v1.25h-1zM1820 373.6h3v1.25h-3zM1840 379.6h2v1.25h-2zM1847 379.6h3v1.25h-3zM1837 381.6h4v1.25h-4zM1842 389.6h2v1.25h-2zM1820 393.6h3v1.25h-3zM1825 405.6h3v1.25h-3zM1842 405.6h4v1.25h-4zM1844 407.6h2v1.25h-2zM1867 407.6h4v1.25h-4zM1871 407.6h4v1.25h-4zM1815 409.6h3v1.25h-3zM1854 411.6h2v1.25h-2zM1875 411.6h4v1.25h-4zM1824 413.6h2v1.25h-2zM1827 415.6h3v1.25h-3zM1830 415.6h2v1.25h-2zM1832 415.6h1v1.25h-1zM1871 417.6h3v1.25h-3zM1830 437.6h1v1.25h-1zM1841 437.6h3v1.25h-3zM1815 439.6h4v1.25h-4zM1843 439.6h2v1.25h-2zM1839 445.6h3v1.25h-3zM1842 445.6h4v1.25h-4zM1845 463.6h1v1.25h-1zM1855 463.6h2v1.25h-2zM1850 465.6h3v1.25h-3zM1808 479.6h2v1.25h-2zM1810 479.6h2v1.25h-2zM1814 479.6h3v1.25h-3zM1817 479.6h1v1.25h-1zM1819 483.6h3v1.25h-3zM1838 485.6h2v1.25h-2zM1847 485.6h1v1.25h-1zM1812 503.6h2v1.25h-2zM1805 505.6h2v1.25h-2zM1831 505.6h3v1.25h-3zM1863 505.6h2v1.25h-2zM1861 509.6h2v1.25h-2zM1815 529.6h2v1.25h-2zM1818 531.6h4v1.25h-4zM1822 531.6h1v1.25h-1zM1842 531.6h4v1.25h-4zM1853 531.6h3v1.25h-3zM1816 535.6h4v1.25h-4zM1823 535.6h4v1.25h-4zM1807 537.6h2v1.25h-2zM1856 537.6h3v1.25h-3zM1860 537.6h3v1.25h-3zM1866 537.6h1v1.25h-1zM1810 539.6h4v1.25h-4zM1814 539.6h3v1.25h-3zM1832 549.6h2v1.25h-2zM1805 551.6h4v1.25h-4zM1839 551.6h2v1.25h-2zM1841 551.6h3v1.25h-3zM1846 551.6h3v1.25h-3zM1832 557.6h2v1.25h-2zM1877 561.6h3v1.25h-3zM1814 599.6h3v1.25h-3zM1816 603.6h4v1.25h-4zM1820 603.6h1v1.25h-1zM1799 605.6h3v1.25h-3zM1802 605.6h2v1.25h-2zM1799 607.6h3v1.25h-3zM1802 607.6h2v1.25h-2zM1805 609.6h3v1.25h-3zM1799 617.6h4v1.25h-4zM1838 617.6h2v1.25h-2zM1841 617.6h2v1.25h-2zM1807 623.6h2v1.25h-2zM1804 633.6h2v1.25h-2zM1820 639.6h2v1.25h-2zM1832 641.6h3v1.25h-3zM1833 643.6h4v1.25h-4zM1837 643.6h2v1.25h-2zM1814 667.6h3v1.25h-3zM1801 669.6h3v1.25h-3zM1804 669.6h2v1.25h-2zM1813 669.6h2v1.25h-2zM1826 669.6h4v1.25h-4zM1840 669.6h3v1.25h-3zM1811 677.6h4v1.25h-4zM1828 691.6h3v1.25h-3zM1835 691.6h3v1.25h-3zM1801 705.6h4v1.25h-4zM1805 705.6h2v1.25h-2zM1828 705.6h2v1.25h-2zM1848 721.6h3v1.25h-3zM1797 735.6h2v1.25h-2zM1833 735.6h1v1.25h-1zM1803 755.6h2v1.25h-2zM1825 759.6h3v1.25h-3zM1843 761.6h3v1.25h-3zM1847 761.6h2v1.25h-2zM1833 769.6h2v1.25h-2zM1824 771.6h2v1.25h-2zM1839 771.6h2v1.25h-2zM1841 771.6h3v1.25h-3zM1844 771.6h1v1.25h-1zM1808 773.6h2v1.25h-2zM1853 793.6h2v1.25h-2zM1833 797.6h2v1.25h-2zM1837 797.6h3v1.25h-3zM1799 799.6h4v1.25h-4zM1842 817.6h1v1.25h-1zM1834 831.6h3v1.25h-3zM1854 831.6h3v1.25h-3zM1797 833.6h4v1.25h-4zM1801 833.6h2v1.25h-2zM1811 833.6h1v1.25h-1zM1813 833.6h4v1.25h-4zM1820 833.6h2v1.25h-2zM1810 835.6h1v1.25h-1zM1814 847.6h3v1.25h-3zM1871 863.6h3v1.25h-3zM1859 871.6h4v1.25h-4zM1815 877.6h1v1.25h-1zM1806 879.6h3v1.25h-3zM1843 887.6h3v1.25h-3zM1853 887.6h4v1.25h-4zM1823 889.6h2v1.25h-2zM1829 889.6h2v1.25h-2zM1826 899.6h2v1.25h-2zM1828 899.6h2v1.25h-2zM1871 899.6h3v1.25h-3zM1897 899.6h2v1.25h-2zM1900 899.6h3v1.25h-3zM1803 903.6h4v1.25h-4zM1841 911.6h2v1.25h-2zM1843 911.6h4v1.25h-4zM1808 913.6h3v1.25h-3zM1818 919.6h2v1.25h-2zM1850 921.6h3v1.25h-3zM1853 921.6h1v1.25h-1zM1852 925.6h2v1.25h-2zM1869 925.6h2v1.25h-2zM1871 925.6h4v1.25h-4zM1875 925.6h3v1.25h-3zM1880 925.6h1v1.25h-1zM1852 945.6h2v1.25h-2zM1895 945.6h3v1.25h-3zM1898 945.6h3v1.25h-3zM1817 947.6h4v1.25h-4zM1818 955.6h3v1.25h-3zM1838 973.6h1v1.25h-1z"/>
<path fill="#6a9955" fill-opacity="0.7" d="M1795 159.6h4v1.25h-4zM1817 159.6h3v1.25h-3zM1800 181.6h4v1.25h-4zM1799 283.6h2v1.25h-2zM1801 283.6h2v1.25h-2zM1803 283.6h3v1.25h-3zM1806 283.6h4v1.25h-4zM1803 357.6h2v1.25h-2zM1814 357.6h2v1.25h-2zM1834 357.6h3v1.25h-3zM1837 357.6h3v1.25h-3zM1843 357.6h4v1.25h-4zM1847 357.6h2v1.25h-2zM1853 357.6h1v1.25h-1zM1797 401.6h4v1.25h-4zM1801 401.6h3v1.25h-3zM1804 401.6h1v1.25h-1zM1858 465.6h3v1.25h-3zM1861 465.6h2v1.25h-2zM1852 485.6h2v1.25h-2zM1856 485.6h3v1.25h-3zM1864 485.6h4v1.25h-4zM1855 511.6h3v1.25h-3zM1858 511.6h2v1.25h-2zM1860 511.6h4v1.25h-4zM1866 511.6h3v1.25h-3zM1869 511.6h2v1.25h-2zM1868 539.6h1v1.25h-1zM1801 627.6h2v1.25h-2zM1797 699.6h2v1.25h-2zM1808 699.6h1v1.25h-1zM1801 729.6h1v1.25h-1zM1805 729.6h3v1.25h-3zM1797 787.6h2v1.25h-2zM1802 787.6h4v1.25h-4zM1803 811.6h2v1.25h-2zM1797 825.6h2v1.25h-2zM1804 825.6h1v1.25h-1zM1802 841.6h2v1.25h-2zM1808 841.6h1v1.25h-1zM1824 855.6h2v1.25h-2zM1832 885.6h1v1.25h-1zM1817 917.6h3v1.25h-3zM1817 939.6h3v1.25h-3zM1816 967.6h3v1.25h-3zM1827 971.6h2v1.25h-2zM1830 977.6h1v1.25h-1zM1822 981.6h4v1.25h-4zM1796 999.6h3v1.25h-3zM1802 999.6h2v1.25h-2z"/>
<path fill="#6a9955" fill-opacity="0.45" d="M1800 159.6h3v1.25h-3zM1803 159.6h2v1.25h-2zM1805 159.6h3v1.25h-3zM1809 181.6h3v1.25h-3zM1797 283.6h2v1.25h-2zM1810 283.6h2v1.25h-2zM1814 283.6h2v1.25h-2zM1822 291.6h2v1.25h-2zM1833 299.6h4v1.25h-4zM1840 299.6h3v1.25h-3zM1808 357.6h2v1.25h-2zM1817 357.6h2v1.25h-2zM1819 357.6h4v1.25h-4zM1823 357.6h2v1.25h-2zM1840 357.6h2v1.25h-2zM1856 439.6h3v1.25h-3zM1868 439.6h2v1.25h-2zM1870 439.6h1v1.25h-1zM1866 465.6h2v1.25h-2zM1849 485.6h2v1.25h-2zM1854 485.6h1v1.25h-1zM1862 485.6h2v1.25h-2zM1849 511.6h3v1.25h-3zM1852 511.6h2v1.25h-2zM1853 539.6h2v1.25h-2zM1855 539.6h2v1.25h-2zM1857 539.6h2v1.25h-2zM1799 627.6h2v1.25h-2zM1803 627.6h2v1.25h-2zM1806 627.6h1v1.25h-1zM1801 659.6h4v1.25h-4zM1805 659.6h2v1.25h-2zM1807 659.6h2v1.25h-2zM1809 659.6h1v1.25h-1zM1803 685.6h2v1.25h-2zM1805 685.6h2v1.25h-2zM1808 685.6h2v1.25h-2zM1799 699.6h3v1.25h-3zM1805 699.6h2v1.25h-2zM1799 715.6h3v1.25h-3zM1802 715.6h2v1.25h-2zM1797 729.6h4v1.25h-4zM1799 787.6h3v1.25h-3zM1806 787.6h4v1.25h-4zM1805 811.6h2v1.25h-2zM1802 825.6h2v1.25h-2zM1800 841.6h2v1.25h-2zM1820 855.6h2v1.25h-2zM1822 885.6h4v1.25h-4zM1828 885.6h3v1.25h-3zM1819 895.6h2v1.25h-2zM1816 907.6h1v1.25h-1zM1820 939.6h2v1.25h-2zM1830 971.6h1v1.25h-1zM1822 977.6h4v1.25h-4zM1827 981.6h2v1.25h-2zM1829 981.6h2v1.25h-2z"/>
<path fill="#6a9955" fill-opacity="0.58" d="M1808 159.6h3v1.25h-3zM1811 159.6h4v1.25h-4zM1815 159.6h1v1.25h-1zM1795 181.6h3v1.25h-3zM1798 181.6h1v1.25h-1zM1804 181.6h4v1.25h-4zM1812 283.6h2v1.25h-2zM1817 283.6h1v1.25h-1zM1831 299.6h2v1.25h-2zM1837 299.6h2v1.25h-2zM1805 357.6h3v1.25h-3zM1810 357.6h3v1.25h-3zM1826 357.6h4v1.25h-4zM1830 357.6h3v1.25h-3zM1849 357.6h4v1.25h-4zM1806 401.6h4v1.25h-4zM1810 401.6h2v1.25h-2zM1860 439.6h2v1.25h-2zM1862 439.6h3v1.25h-3zM1865 439.6h1v1.25h-1zM1866 439.6h2v1.25h-2zM1854 465.6h3v1.25h-3zM1863 465.6h3v1.25h-3zM1869 465.6h2v1.25h-2zM1859 485.6h2v1.25h-2zM1868 485.6h2v1.25h-2zM1864 511.6h1v1.25h-1zM1850 539.6h3v1.25h-3zM1860 539.6h4v1.25h-4zM1864 539.6h4v1.25h-4zM1870 539.6h1v1.25h-1zM1797 627.6h2v1.25h-2zM1805 627.6h1v1.25h-1zM1797 659.6h4v1.25h-4zM1811 659.6h2v1.25h-2zM1797 685.6h3v1.25h-3zM1800 685.6h3v1.25h-3zM1810 685.6h1v1.25h-1zM1802 699.6h2v1.25h-2zM1797 715.6h2v1.25h-2zM1805 715.6h2v1.25h-2zM1803 729.6h2v1.25h-2zM1808 729.6h3v1.25h-3zM1810 787.6h1v1.25h-1zM1797 811.6h4v1.25h-4zM1801 811.6h2v1.25h-2zM1799 825.6h2v1.25h-2zM1797 841.6h2v1.25h-2zM1804 841.6h4v1.25h-4zM1810 841.6h1v1.25h-1zM1822 855.6h1v1.25h-1zM1826 855.6h1v1.25h-1zM1826 885.6h2v1.25h-2zM1820 917.6h1v1.25h-1zM1822 939.6h1v1.25h-1zM1819 967.6h2v1.25h-2zM1819 971.6h2v1.25h-2zM1821 971.6h4v1.25h-4zM1825 971.6h2v1.25h-2zM1826 977.6h4v1.25h-4zM1832 977.6h1v1.25h-1zM1793 999.6h3v1.25h-3zM1799 999.6h3v1.25h-3zM1804 999.6h2v1.25h-2z"/>
<path fill="#f44747" fill-opacity="0.45" d="M1796 179.6h1v1.25h-1z"/>
<path fill="#dcdcaa" fill-opacity="0.7" d="M1805 189.6h2v1.25h-2zM1793 269.6h3v1.25h-3zM1803 315.6h4v1.25h-4zM1810 315.6h2v1.25h-2zM1805 331.6h3v1.25h-3zM1805 435.6h2v1.25h-2zM1810 435.6h3v1.25h-3zM1808 461.6h2v1.25h-2zM1805 507.6h2v1.25h-2zM1805 533.6h3v1.25h-3zM1808 533.6h1v1.25h-1zM1805 553.6h3v1.25h-3zM1795 613.6h2v1.25h-2zM1799 621.6h3v1.25h-3zM1795 689.6h3v1.25h-3zM1798 689.6h2v1.25h-2zM1800 689.6h2v1.25h-2zM1795 703.6h2v1.25h-2zM1795 731.6h2v1.25h-2zM1797 731.6h2v1.25h-2zM1802 731.6h2v1.25h-2zM1795 789.6h4v1.25h-4zM1799 789.6h2v1.25h-2zM1795 813.6h4v1.25h-4zM1799 813.6h3v1.25h-3zM1802 813.6h1v1.25h-1zM1795 845.6h3v1.25h-3z"/>
<path fill="#dcdcaa" fill-opacity="0.58" d="M1796 269.6h2v1.25h-2zM1807 435.6h3v1.25h-3zM1795 597.6h4v1.25h-4zM1799 597.6h1v1.25h-1zM1801 615.6h4v1.25h-4zM1805 615.6h2v1.25h-2zM1802 621.6h2v1.25h-2zM1797 703.6h2v1.25h-2zM1795 829.6h4v1.25h-4zM1799 829.6h3v1.25h-3z"/>
<path fill="#dcdcaa" fill-opacity="0.45" d="M1798 269.6h2v1.25h-2zM1807 315.6h3v1.25h-3zM1805 461.6h3v1.25h-3zM1810 461.6h2v1.25h-2zM1805 481.6h2v1.25h-2zM1807 481.6h2v1.25h-2zM1809 481.6h2v1.25h-2zM1811 481.6h3v1.25h-3zM1814 481.6h1v1.25h-1zM1797 613.6h1v1.25h-1zM1799 615.6h2v1.25h-2zM1807 615.6h1v1.25h-1zM1799 703.6h2v1.25h-2zM1795 719.6h3v1.25h-3zM1799 731.6h3v1.25h-3zM1795 751.6h2v1.25h-2z"/>
<path fill="#ffd700" fill-opacity="0.45" d="M1807 189.6h1v1.25h-1zM1861 189.6h1v1.25h-1z"/>
<path fill="#c586c0" fill-opacity="0.58" d="M1791 225.6h3v1.25h-3zM1818 225.6h2v1.25h-2zM1869 225.6h3v1.25h-3zM1794 227.6h3v1.25h-3zM1807 229.6h3v1.25h-3zM1791 231.6h3v1.25h-3zM1794 231.6h3v1.25h-3zM1791 233.6h2v1.25h-2zM1791 237.6h2v1.25h-2zM1798 239.6h2v1.25h-2zM1835 239.6h2v1.25h-2zM1842 239.6h2v1.25h-2zM1791 243.6h3v1.25h-3zM1794 243.6h2v1.25h-2zM1800 249.6h2v1.25h-2zM1802 249.6h2v1.25h-2zM1797 271.6h4v1.25h-4zM1801 271.6h2v1.25h-2zM1811 333.6h3v1.25h-3zM1811 345.6h2v1.25h-2zM1813 345.6h3v1.25h-3zM1807 391.6h4v1.25h-4zM1812 449.6h2v1.25h-2zM1809 493.6h2v1.25h-2zM1811 493.6h1v1.25h-1zM1826 515.6h4v1.25h-4zM1830 515.6h2v1.25h-2zM1836 515.6h3v1.25h-3zM1813 519.6h2v1.25h-2zM1815 519.6h2v1.25h-2zM1809 541.6h4v1.25h-4zM1801 637.6h4v1.25h-4zM1807 643.6h2v1.25h-2zM1809 643.6h2v1.25h-2zM1816 643.6h3v1.25h-3zM1806 745.6h1v1.25h-1zM1797 767.6h4v1.25h-4zM1803 795.6h1v1.25h-1zM1803 851.6h2v1.25h-2zM1799 855.6h3v1.25h-3zM1801 867.6h3v1.25h-3zM1804 867.6h4v1.25h-4zM1802 881.6h2v1.25h-2zM1802 885.6h4v1.25h-4zM1808 885.6h3v1.25h-3zM1799 895.6h2v1.25h-2zM1803 895.6h2v1.25h-2zM1808 895.6h1v1.25h-1zM1803 917.6h2v1.25h-2zM1807 939.6h2v1.25h-2zM1811 939.6h2v1.25h-2zM1813 939.6h3v1.25h-3zM1799 957.6h3v1.25h-3zM1799 963.6h4v1.25h-4zM1802 977.6h4v1.25h-4zM1808 977.6h1v1.25h-1zM1806 981.6h3v1.25h-3z"/>
<path fill="#c586c0" fill-opacity="0.45" d="M1832 225.6h4v1.25h-4zM1801 229.6h4v1.25h-4zM1793 233.6h4v1.25h-4zM1797 233.6h4v1.25h-4zM1791 235.6h3v1.25h-3zM1794 235.6h3v1.25h-3zM1795 239.6h2v1.25h-2zM1800 239.6h2v1.25h-2zM1840 239.6h2v1.25h-2zM1791 245.6h4v1.25h-4zM1791 249.6h3v1.25h-3zM1797 249.6h3v1.25h-3zM1791 253.6h3v1.25h-3zM1807 319.6h4v1.25h-4zM1814 319.6h2v1.25h-2zM1809 323.6h4v1.25h-4zM1813 323.6h2v1.25h-2zM1807 345.6h4v1.25h-4zM1816 345.6h1v1.25h-1zM1807 381.6h3v1.25h-3zM1813 381.6h1v1.25h-1zM1811 391.6h3v1.25h-3zM1812 445.6h1v1.25h-1zM1809 489.6h4v1.25h-4zM1826 489.6h2v1.25h-2zM1813 515.6h2v1.25h-2zM1833 515.6h3v1.25h-3zM1813 541.6h1v1.25h-1zM1799 631.6h3v1.25h-3zM1802 631.6h2v1.25h-2zM1807 637.6h2v1.25h-2zM1809 637.6h1v1.25h-1zM1811 643.6h4v1.25h-4zM1799 649.6h3v1.25h-3zM1802 649.6h1v1.25h-1zM1803 667.6h2v1.25h-2zM1819 673.6h2v1.25h-2zM1801 733.6h3v1.25h-3zM1808 745.6h2v1.25h-2zM1810 745.6h2v1.25h-2zM1823 745.6h3v1.25h-3zM1797 753.6h2v1.25h-2zM1820 767.6h2v1.25h-2zM1833 767.6h3v1.25h-3zM1799 795.6h4v1.25h-4zM1799 847.6h2v1.25h-2zM1806 847.6h1v1.25h-1zM1801 851.6h2v1.25h-2zM1801 859.6h2v1.25h-2zM1799 881.6h3v1.25h-3zM1799 885.6h3v1.25h-3zM1806 885.6h2v1.25h-2zM1814 885.6h4v1.25h-4zM1801 905.6h2v1.25h-2zM1807 907.6h1v1.25h-1zM1807 917.6h1v1.25h-1zM1799 935.6h3v1.25h-3zM1799 939.6h2v1.25h-2zM1803 963.6h2v1.25h-2zM1799 967.6h2v1.25h-2zM1801 967.6h2v1.25h-2zM1805 971.6h2v1.25h-2zM1807 971.6h2v1.25h-2zM1799 977.6h3v1.25h-3zM1803 981.6h3v1.25h-3zM1799 989.6h3v1.25h-3zM1802 989.6h2v1.25h-2zM1804 989.6h1v1.25h-1z"/>
<path fill="#c586c0" fill-opacity="0.7" d="M1836 225.6h2v1.25h-2zM1791 227.6h3v1.25h-3zM1791 229.6h3v1.25h-3zM1794 229.6h1v1.25h-1zM1796 229.6h3v1.25h-3zM1799 229.6h2v1.25h-2zM1805 229.6h1v1.25h-1zM1817 231.6h2v1.25h-2zM1793 237.6h2v1.25h-2zM1795 237.6h3v1.25h-3zM1798 237.6h1v1.25h-1zM1791 239.6h4v1.25h-4zM1837 239.6h3v1.25h-3zM1791 241.6h2v1.25h-2zM1798 241.6h3v1.25h-3zM1801 241.6h2v1.25h-2zM1803 241.6h2v1.25h-2zM1796 243.6h1v1.25h-1zM1795 245.6h1v1.25h-1zM1794 249.6h2v1.25h-2zM1794 253.6h2v1.25h-2zM1796 253.6h4v1.25h-4zM1795 271.6h2v1.25h-2zM1811 319.6h3v1.25h-3zM1816 319.6h2v1.25h-2zM1807 333.6h4v1.25h-4zM1814 333.6h2v1.25h-2zM1810 381.6h3v1.25h-3zM1814 391.6h3v1.25h-3zM1809 445.6h3v1.25h-3zM1809 449.6h3v1.25h-3zM1814 449.6h3v1.25h-3zM1813 489.6h1v1.25h-1zM1822 489.6h4v1.25h-4zM1809 515.6h4v1.25h-4zM1809 519.6h4v1.25h-4zM1805 637.6h2v1.25h-2zM1805 643.6h2v1.25h-2zM1799 667.6h4v1.25h-4zM1805 667.6h3v1.25h-3zM1797 673.6h2v1.25h-2zM1816 673.6h3v1.25h-3zM1797 733.6h4v1.25h-4zM1799 745.6h3v1.25h-3zM1802 745.6h4v1.25h-4zM1819 745.6h4v1.25h-4zM1826 745.6h1v1.25h-1zM1799 753.6h2v1.25h-2zM1821 753.6h3v1.25h-3zM1830 767.6h3v1.25h-3zM1836 767.6h1v1.25h-1zM1811 795.6h3v1.25h-3zM1801 847.6h2v1.25h-2zM1803 847.6h3v1.25h-3zM1802 855.6h1v1.25h-1zM1803 859.6h1v1.25h-1zM1808 867.6h1v1.25h-1zM1818 885.6h2v1.25h-2zM1820 885.6h1v1.25h-1zM1799 893.6h4v1.25h-4zM1803 893.6h2v1.25h-2zM1801 895.6h2v1.25h-2zM1805 895.6h3v1.25h-3zM1799 907.6h2v1.25h-2zM1801 907.6h2v1.25h-2zM1803 907.6h4v1.25h-4zM1799 915.6h3v1.25h-3zM1799 917.6h4v1.25h-4zM1805 917.6h2v1.25h-2zM1802 935.6h2v1.25h-2zM1809 939.6h2v1.25h-2zM1802 957.6h3v1.25h-3zM1803 967.6h1v1.25h-1zM1805 967.6h2v1.25h-2zM1799 971.6h4v1.25h-4zM1803 971.6h2v1.25h-2zM1806 977.6h2v1.25h-2zM1799 981.6h4v1.25h-4z"/>
<path fill="#4fc1ff" fill-opacity="0.45" d="M1816 317.6h3v1.25h-3zM1824 317.6h2v1.25h-2zM1886 413.6h2v1.25h-2zM1897 413.6h3v1.25h-3zM1838 469.6h4v1.25h-4zM1842 469.6h4v1.25h-4zM1848 469.6h2v1.25h-2zM1816 487.6h4v1.25h-4zM1820 513.6h3v1.25h-3zM1827 513.6h4v1.25h-4zM1850 513.6h1v1.25h-1zM1844 555.6h3v1.25h-3zM1805 579.6h4v1.25h-4zM1799 581.6h2v1.25h-2zM1819 581.6h4v1.25h-4zM1826 581.6h2v1.25h-2zM1806 583.6h2v1.25h-2zM1803 591.6h2v1.25h-2zM1805 591.6h2v1.25h-2zM1825 593.6h1v1.25h-1zM1810 635.6h2v1.25h-2zM1812 635.6h2v1.25h-2zM1821 635.6h4v1.25h-4zM1799 723.6h2v1.25h-2zM1818 723.6h4v1.25h-4z"/>
<path fill="#4fc1ff" fill-opacity="0.58" d="M1819 317.6h3v1.25h-3zM1888 413.6h2v1.25h-2zM1890 413.6h4v1.25h-4zM1894 413.6h2v1.25h-2zM1900 413.6h3v1.25h-3zM1809 469.6h4v1.25h-4zM1813 469.6h1v1.25h-1zM1846 469.6h1v1.25h-1zM1811 513.6h2v1.25h-2zM1813 513.6h1v1.25h-1zM1817 513.6h3v1.25h-3zM1823 513.6h3v1.25h-3zM1841 513.6h2v1.25h-2zM1843 513.6h4v1.25h-4zM1819 555.6h2v1.25h-2zM1821 555.6h2v1.25h-2zM1802 575.6h2v1.25h-2zM1809 575.6h1v1.25h-1zM1810 577.6h2v1.25h-2zM1801 581.6h3v1.25h-3zM1805 581.6h2v1.25h-2zM1810 581.6h4v1.25h-4zM1799 583.6h2v1.25h-2zM1814 591.6h3v1.25h-3zM1822 593.6h3v1.25h-3zM1814 635.6h1v1.25h-1zM1816 635.6h2v1.25h-2zM1818 635.6h3v1.25h-3zM1837 635.6h4v1.25h-4zM1805 723.6h3v1.25h-3zM1813 723.6h3v1.25h-3z"/>
<path fill="#4fc1ff" fill-opacity="0.7" d="M1822 317.6h2v1.25h-2zM1807 469.6h2v1.25h-2zM1814 469.6h3v1.25h-3zM1817 469.6h3v1.25h-3zM1831 469.6h4v1.25h-4zM1835 469.6h2v1.25h-2zM1850 469.6h1v1.25h-1zM1807 487.6h3v1.25h-3zM1811 487.6h2v1.25h-2zM1813 487.6h3v1.25h-3zM1831 513.6h1v1.25h-1zM1847 513.6h2v1.25h-2zM1813 555.6h2v1.25h-2zM1815 555.6h4v1.25h-4zM1804 575.6h4v1.25h-4zM1812 577.6h1v1.25h-1zM1799 579.6h4v1.25h-4zM1803 579.6h2v1.25h-2zM1808 581.6h2v1.25h-2zM1814 581.6h4v1.25h-4zM1823 581.6h3v1.25h-3zM1802 583.6h4v1.25h-4zM1817 591.6h2v1.25h-2zM1801 723.6h4v1.25h-4zM1816 723.6h2v1.25h-2zM1822 723.6h1v1.25h-1zM1815 737.6h3v1.25h-3zM1818 737.6h1v1.25h-1z"/>
</svg>

<div class="abs" style="left:1903px;top:115px;width:1px;height:888px;background:#010409"></div>
<div class="abs" style="left:1904px;top:120px;width:16px;height:58px;background:#464646"></div>
<div class="abs" style="left:1904px;top:134px;width:16px;height:2px;background:#a0a0a0"></div>
<div class="abs" style="left:533px;top:115px;width:1250px;height:6px;background:linear-gradient(rgba(0,0,0,0.45),rgba(0,0,0,0))"></div>
<div class="abs" style="left:1903px;top:115px;width:17px;height:6px;background:linear-gradient(rgba(0,0,0,0.45),rgba(0,0,0,0))"></div>
<!-- STATUS BAR -->
<div id="status" class="abs"></div>
<div class="abs" style="left:0;top:1003.5px;width:43px;height:25.5px;background:#0078d4"></div>
<svg class="abs" style="left:14px;top:1008px" width="16" height="16" viewBox="0 0 16 16" fill="none" stroke="#ffffff" stroke-width="1.3"><path d="M1.9 4.8L7.6 9.8L1.9 14.7"/><path d="M12.9 0.3L7.9 5.3L12.9 10.1"/></svg>
<svg class="abs" style="left:53px;top:1008.5px" width="16" height="16" viewBox="0 0 16 16" fill="none" stroke="#cccccc" stroke-width="1.2"><circle cx="8" cy="8" r="7"/><path d="M5.2 5.2L10.8 10.8M10.8 5.2L5.2 10.8"/></svg>
<div class="abs" style="left:73.5px;top:1004px;height:26px;line-height:26px;font-size:15.5px;color:#cccccc;white-space:nowrap">0</div>
<svg class="abs" style="left:87.5px;top:1008.5px" width="16" height="16" viewBox="0 0 16 16" fill="none" stroke="#cccccc" stroke-width="1.2" stroke-linejoin="round"><path d="M8 1.3L15.2 14.6H0.8Z"/><path d="M8 5.5V10.5M8 11.8V13"/></svg>
<div class="abs" style="left:108px;top:1004px;height:26px;line-height:26px;font-size:15.5px;color:#cccccc;white-space:nowrap">0</div>
<svg class="abs" style="left:137.5px;top:1008.5px" width="16" height="16" viewBox="0 0 16 16" fill="none" stroke="#cccccc" stroke-width="1.2"><circle cx="8" cy="6" r="1.5"/><path d="M8 7.5L4.8 15M8 7.5L11.2 15M5.8 12.5H10.2"/><path d="M4.8 2.8A4.5 4.5 0 0 0 4.8 9.2M11.2 2.8A4.5 4.5 0 0 1 11.2 9.2M2.6 0.8A7.3 7.3 0 0 0 2.6 11.2M13.4 0.8A7.3 7.3 0 0 1 13.4 11.2"/></svg>
<div class="abs" style="left:157.5px;top:1004px;height:26px;line-height:26px;font-size:15.5px;color:#cccccc;white-space:nowrap">0</div>
<div class="abs" style="left:1111px;top:1004px;height:26px;line-height:26px;font-size:15px;color:#cccccc;white-space:nowrap">行 14，列 26 (已选择8)</div>
<div class="abs" style="left:1283px;top:1004px;height:26px;line-height:26px;font-size:15px;color:#cccccc;white-space:nowrap">空格: 2</div>
<div class="abs" style="left:1349px;top:1004px;height:26px;line-height:26px;font-size:15px;color:#cccccc;white-space:nowrap">UTF-8</div>
<div class="abs" style="left:1408px;top:1004px;height:26px;line-height:26px;font-size:15px;color:#cccccc;white-space:nowrap">CRLF</div>
<svg class="abs" style="left:1460px;top:1008px" width="18" height="18" viewBox="0 0 18 18" fill="none" stroke="#cccccc" stroke-width="1.2"><path d="M3.8 0.8C2.5 0.8 2.3 1.5 2.3 2.5V5.8C2.3 6.6 1.8 7.3 1 7.5C1.8 7.7 2.3 8.4 2.3 9.2V12.5C2.3 13.5 2.5 14.2 3.8 14.2"/><path d="M10.2 0.8C11.5 0.8 11.7 1.5 11.7 2.5V5.8C11.7 6.6 12.2 7.3 13.5 7.5"/><circle cx="12.6" cy="12.4" r="3.4" fill="#cccccc" stroke="none"/><path d="M11.3 11.1L13.9 13.7M13.9 11.1L11.3 13.7" stroke="#181818" stroke-width="0.9"/></svg>
<div class="abs" style="left:1484px;top:1004px;height:26px;line-height:26px;font-size:15px;color:#cccccc;white-space:nowrap">Vue</div>
<div class="abs" style="left:1526px;top:1004px;height:26px;line-height:26px;font-size:15px;color:#cccccc;white-space:nowrap">存在0个异常标点</div>
<svg class="abs" style="left:1660px;top:1009px" width="14" height="15" viewBox="0 0 14 15" fill="none" stroke="#cccccc" stroke-width="1.3"><path d="M7 1L12.6 4.2V10.8L7 14L1.4 10.8V4.2Z"/><path d="M4.5 7.5L7 9L9.5 7.5"/></svg>
<div class="abs" style="left:1678px;top:1004px;height:26px;line-height:26px;font-size:15px;color:#cccccc;white-space:nowrap">tabnine starter</div>
<svg class="abs" style="left:1793px;top:1010px" width="17" height="13" viewBox="0 0 17 13" fill="none" stroke="#cccccc" stroke-width="1.3"><path d="M1 7L4.5 11L11 2M7 11L16 1.5"/></svg>
<div class="abs" style="left:1815px;top:1004px;height:26px;line-height:26px;font-size:15px;color:#cccccc;white-space:nowrap">Prettier</div>
<svg class="abs" style="left:1885px;top:1008px" width="16" height="17" viewBox="0 0 16 17" fill="none" stroke="#cccccc" stroke-width="1.3"><path d="M3 12.5V7A5 5 0 0 1 13 7V12.5L14.5 14H1.5Z"/><path d="M6 14.5A2 2 0 0 0 10 14.5"/></svg>

<div class="abs" style="left:0;top:1029px;width:1920px;height:1px;background:#0a0a0a"></div>
</body></html>
